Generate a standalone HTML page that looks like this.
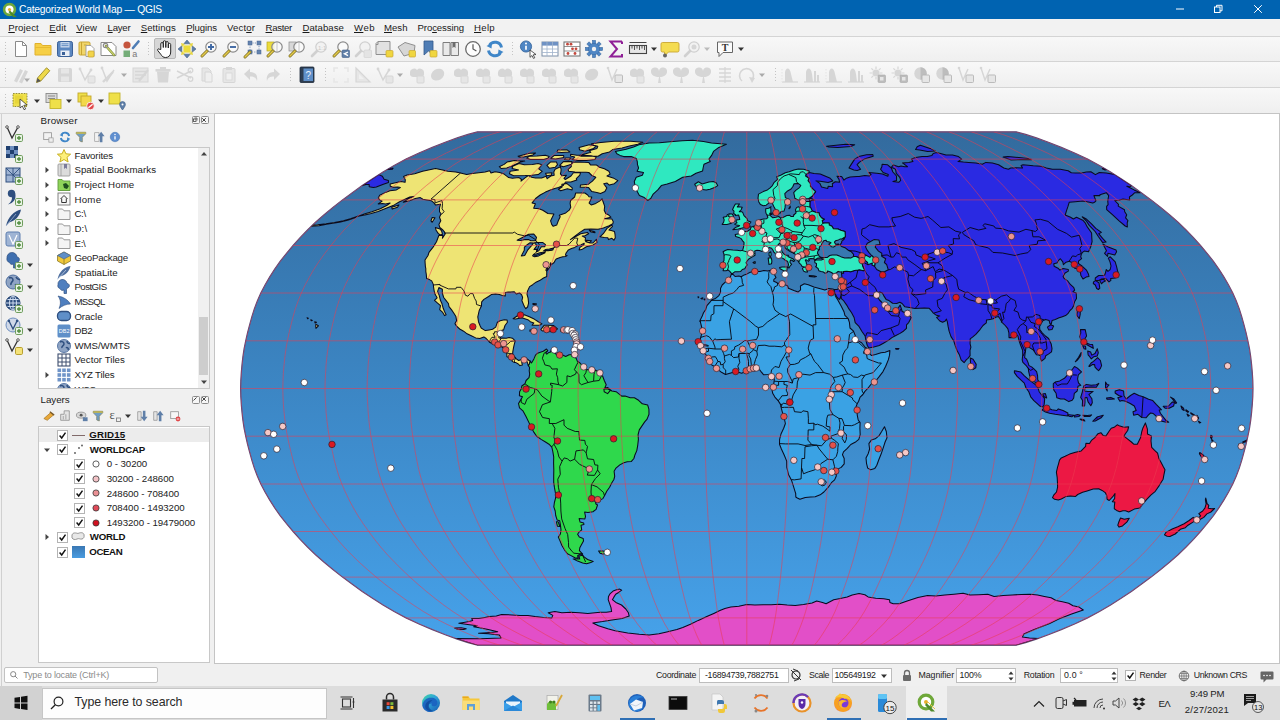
<!DOCTYPE html><html><head><meta charset="utf-8"><title>QGIS</title><style>html,body{margin:0;padding:0}body{width:1280px;height:720px;position:relative;overflow:hidden;background:#f0f0f0;font-family:"Liberation Sans",sans-serif}span,div,svg{position:absolute}svg{overflow:visible}</style></head><body><div style="position:absolute;left:0px;top:0px;width:1280px;height:19px;background:#0063b1;"></div><svg style="position:absolute;left:0.5px;top:0.5px" width="18" height="18" viewBox="-9.0 -9.0 18 18"><circle cx="-.5" cy="-.5" r="5.4" fill="#fff" stroke="#6fa83a" stroke-width="2.6"/><circle cx="-.5" cy="-.5" r="1.6" fill="#e8b02a"/><path d="M0,.5 L6.5,7 H3.2 L-1.5,2z" fill="#4f8a2a"/></svg><span style="left:19px;top:3.78px;font-size:10.3px;color:#fff;font-weight:normal;white-space:nowrap;line-height:12.3px;letter-spacing:-0.242px;">Categorized World Map — QGIS</span><svg style="position:absolute;left:1173.5px;top:2.8000000000000007px" width="12" height="12" viewBox="-6.0 -6.0 12 12"><path d="M-4,0h8" stroke="#fff" stroke-width="1"/></svg><svg style="position:absolute;left:1212.0px;top:2.8000000000000007px" width="12" height="12" viewBox="-6.0 -6.0 12 12"><rect x="-3.5" y="-2" width="5.5" height="5.5" fill="none" stroke="#fff" stroke-width="1"/><path d="M-1.5,-2v-1.7h5.5v5.5h-2" fill="none" stroke="#fff" stroke-width="1"/></svg><svg style="position:absolute;left:1251.5px;top:2.8000000000000007px" width="12" height="12" viewBox="-6.0 -6.0 12 12"><path d="M-3.8,-3.8L3.8,3.8M3.8,-3.8L-3.8,3.8" stroke="#fff" stroke-width="1"/></svg><div style="position:absolute;left:0px;top:19px;width:1280px;height:17px;background:#f2f2f2;"></div><span style="left:8.3px;top:21.87px;font-size:9.6px;color:#1a1a1a;font-weight:normal;white-space:nowrap;line-height:11.6px;letter-spacing:0.089px;"><u>P</u>roject</span><span style="left:49.2px;top:21.87px;font-size:9.6px;color:#1a1a1a;font-weight:normal;white-space:nowrap;line-height:11.6px;letter-spacing:0.114px;"><u>E</u>dit</span><span style="left:76.2px;top:21.87px;font-size:9.6px;color:#1a1a1a;font-weight:normal;white-space:nowrap;line-height:11.6px;letter-spacing:0.042px;"><u>V</u>iew</span><span style="left:107.5px;top:21.87px;font-size:9.6px;color:#1a1a1a;font-weight:normal;white-space:nowrap;line-height:11.6px;letter-spacing:-0.202px;"><u>L</u>ayer</span><span style="left:140.8px;top:21.87px;font-size:9.6px;color:#1a1a1a;font-weight:normal;white-space:nowrap;line-height:11.6px;letter-spacing:0.039px;"><u>S</u>ettings</span><span style="left:186.2px;top:21.87px;font-size:9.6px;color:#1a1a1a;font-weight:normal;white-space:nowrap;line-height:11.6px;letter-spacing:-0.098px;"><u>P</u>lugins</span><span style="left:227px;top:21.87px;font-size:9.6px;color:#1a1a1a;font-weight:normal;white-space:nowrap;line-height:11.6px;letter-spacing:0.131px;">Vect<u>o</u>r</span><span style="left:265.5px;top:21.87px;font-size:9.6px;color:#1a1a1a;font-weight:normal;white-space:nowrap;line-height:11.6px;letter-spacing:-0.296px;"><u>R</u>aster</span><span style="left:302.5px;top:21.87px;font-size:9.6px;color:#1a1a1a;font-weight:normal;white-space:nowrap;line-height:11.6px;letter-spacing:0.051px;"><u>D</u>atabase</span><span style="left:354px;top:21.87px;font-size:9.6px;color:#1a1a1a;font-weight:normal;white-space:nowrap;line-height:11.6px;letter-spacing:0.479px;"><u>W</u>eb</span><span style="left:384px;top:21.87px;font-size:9.6px;color:#1a1a1a;font-weight:normal;white-space:nowrap;line-height:11.6px;letter-spacing:0.007px;"><u>M</u>esh</span><span style="left:417.5px;top:21.87px;font-size:9.6px;color:#1a1a1a;font-weight:normal;white-space:nowrap;line-height:11.6px;letter-spacing:-0.099px;">Pro<u>c</u>essing</span><span style="left:474px;top:21.87px;font-size:9.6px;color:#1a1a1a;font-weight:normal;white-space:nowrap;line-height:11.6px;letter-spacing:0.314px;"><u>H</u>elp</span><div style="position:absolute;left:0px;top:36px;width:1280px;height:25.5px;background:linear-gradient(#f8f8f8,#efefef);"></div><div style="position:absolute;left:0px;top:61.5px;width:1280px;height:26px;background:linear-gradient(#f8f8f8,#efefef);"></div><div style="position:absolute;left:0px;top:87.5px;width:1280px;height:25.5px;background:linear-gradient(#f8f8f8,#efefef);"></div><div style="position:absolute;left:0px;top:36px;width:1280px;height:1px;background:#d4d4d4;"></div><div style="position:absolute;left:0px;top:61px;width:1280px;height:1px;background:#d4d4d4;"></div><div style="position:absolute;left:0px;top:87px;width:1280px;height:1px;background:#d4d4d4;"></div><div style="position:absolute;left:0px;top:113px;width:1280px;height:1px;background:#d4d4d4;"></div><div style="position:absolute;left:154px;top:38px;width:22px;height:21px;background:#d6d6d6;border:1px solid #b8b8b8;box-sizing:border-box;border-radius:2px;"></div><svg style="position:absolute;left:11.0px;top:38.5px" width="20" height="20" viewBox="-10.0 -10.0 20 20"><path d="M-5.5,-7.5 h7 l4,4 v11 h-11z" fill="#fff" stroke="#8a8a8a" stroke-width="1"/><path d="M1.5,-7.5 v4 h4" fill="none" stroke="#8a8a8a" stroke-width="1"/></svg><svg style="position:absolute;left:33.0px;top:38.5px" width="20" height="20" viewBox="-10.0 -10.0 20 20"><path d="M-8,-5.5 h6 l1.5,2 h8.5 v9.5 h-16z" fill="#f6cf45" stroke="#e0b02c" stroke-width="1"/><path d="M-8,-1.5 h16" stroke="#e8bb30" stroke-width="1"/></svg><svg style="position:absolute;left:55.0px;top:38.5px" width="20" height="20" viewBox="-10.0 -10.0 20 20"><rect x="-7.5" y="-7.5" width="15" height="15" rx="1.8" fill="#5b87c0" stroke="#3b6198" stroke-width="1"/><rect x="-4.5" y="-7" width="9" height="5.5" fill="#c9d8ec"/><path d="M-3.5,-5.2h7M-3.5,-3.4h7" stroke="#5b87c0" stroke-width=".9"/><rect x="-4.5" y="1.5" width="9" height="5.5" fill="#e9eef6"/><rect x="-3" y="3" width="3" height="3" fill="#3b6198"/></svg><svg style="position:absolute;left:77.0px;top:38.5px" width="20" height="20" viewBox="-10.0 -10.0 20 20"><rect x="-8" y="-7" width="11" height="13" rx="1.2" fill="#f0d56a" stroke="#c9a632" stroke-width="1"/><path d="M-5.5,-7v13M-3,-4h2.5" stroke="#c9a632" stroke-width="1"/><path d="M-1,-3.5 h5 l3,3 v8 h-8z" fill="#fff" stroke="#9a9a9a" stroke-width=".9"/><rect x="1" y="2" width="6" height="6" rx="1" fill="#f2d44a" stroke="#c9a632" stroke-width=".8"/></svg><svg style="position:absolute;left:99.0px;top:38.5px" width="20" height="20" viewBox="-10.0 -10.0 20 20"><path d="M-8,-6.5 h11 l4,4 v9 h-15z" fill="#fff" stroke="#8a8a8a" stroke-width="1"/><path d="M-3,-3 L5,6" stroke="#7a8a3a" stroke-width="2.6" stroke-linecap="round"/><path d="M-3,-3 L5,6" stroke="#c9cf6a" stroke-width="1.2" stroke-linecap="round"/><circle cx="-3.5" cy="-3.5" r="2.2" fill="none" stroke="#8a8a8a" stroke-width="1.2"/></svg><svg style="position:absolute;left:121.0px;top:38.5px" width="20" height="20" viewBox="-10.0 -10.0 20 20"><circle cx="-4" cy="-4" r="3.6" fill="#c5553e"/><path d="M2,-1 L7.5,-7.5" stroke="#4f7db5" stroke-width="2.6" stroke-linecap="round"/><rect x="-7.5" y="1.5" width="6.5" height="6.5" fill="#74ad78"/><text x="1.2" y="8" font-size="9" font-family="Liberation Sans" fill="#777">a</text></svg><svg style="position:absolute;left:155.0px;top:38.5px" width="20" height="20" viewBox="-10.0 -10.0 20 20"><path d="M-4.2,0.5 V-5.2 a1.25,1.25 0 0 1 2.5,0 V-1.5 V-7 a1.25,1.25 0 0 1 2.5,0 V-1.5 V-6.2 a1.25,1.25 0 0 1 2.5,0 V-1 V-4.4 a1.2,1.2 0 0 1 2.4,0 V3 c0,3.5 -2,5.5 -5,5.5 c-2.5,0 -3.6,-1 -5,-3.3 L-7.2,1.6 c-.8,-1.4 .9,-2.5 1.9,-1.2 z" fill="#fff" stroke="#222" stroke-width="1" stroke-linejoin="round"/></svg><svg style="position:absolute;left:177.0px;top:38.5px" width="20" height="20" viewBox="-10.0 -10.0 20 20"><rect x="-3.6" y="-3.6" width="7.2" height="7.2" fill="#ecdc3c" transform="rotate(0)"/><path d="M0,-9 l3.2,3.8 h-6.4z M0,9 l3.2,-3.8 h-6.4z M-9,0 l3.8,-3.2 v6.4z M9,0 l-3.8,-3.2 v6.4z" fill="#5f7fa8" stroke="#456088" stroke-width=".6"/><path d="M-6,-6 l4,1 l-3,3z M6,-6 l-4,1 l3,3z M-6,6 l4,-1 l-3,-3z M6,6 l-4,-1 l3,-3z" fill="#e7d640"/></svg><svg style="position:absolute;left:199.0px;top:38.5px" width="20" height="20" viewBox="-10.0 -10.0 20 20"><circle cx="2" cy="-2" r="5.2" fill="#fafafa" stroke="#8a8a8a" stroke-width="1.2"/><path d="M-2,2 L-7,7" stroke="#7a6a20" stroke-width="3" stroke-linecap="round"/><path d="M-2,2 L-7,7" stroke="#e2c94a" stroke-width="1.6" stroke-linecap="round"/><path d="M-1,-2 H5 M2,-5 V1" stroke="#3f68a3" stroke-width="1.9"/></svg><svg style="position:absolute;left:221.0px;top:38.5px" width="20" height="20" viewBox="-10.0 -10.0 20 20"><circle cx="2" cy="-2" r="5.2" fill="#fafafa" stroke="#8a8a8a" stroke-width="1.2"/><path d="M-2,2 L-7,7" stroke="#7a6a20" stroke-width="3" stroke-linecap="round"/><path d="M-2,2 L-7,7" stroke="#e2c94a" stroke-width="1.6" stroke-linecap="round"/><path d="M-1,-2 H5" stroke="#3f68a3" stroke-width="1.9"/></svg><svg style="position:absolute;left:243.0px;top:38.5px" width="20" height="20" viewBox="-10.0 -10.0 20 20"><g fill="#6484b0" stroke="#48658f" stroke-width=".5"><rect x="-5" y="-8" width="4" height="4"/><rect x="4" y="-8" width="4" height="4"/><rect x="4" y="1" width="4" height="4"/><rect x="-5" y="1" width="4" height="4"/></g><path d="M-3,-6H6V3H-3z" fill="none" stroke="#6484b0" stroke-width=".8" stroke-dasharray="1.2 1.2"/><path d="M-3,3 L-8,8" stroke="#7a6a20" stroke-width="3" stroke-linecap="round"/><path d="M-3,3 L-8,8" stroke="#e2c94a" stroke-width="1.6" stroke-linecap="round"/></svg><svg style="position:absolute;left:265.0px;top:38.5px" width="20" height="20" viewBox="-10.0 -10.0 20 20"><rect x="-8" y="-7" width="7" height="9" fill="#ecdc3c" stroke="#b8a820" stroke-width=".7"/><circle cx="2" cy="-2" r="5.2" fill="#fafafa" fill-opacity=".8" stroke="#8a8a8a" stroke-width="1.2"/><path d="M-2,2 L-7,7" stroke="#7a6a20" stroke-width="3" stroke-linecap="round"/><path d="M-2,2 L-7,7" stroke="#e2c94a" stroke-width="1.6" stroke-linecap="round"/><path d="M2,-6V2" stroke="#bbb" stroke-width=".8"/></svg><svg style="position:absolute;left:287.0px;top:38.5px" width="20" height="20" viewBox="-10.0 -10.0 20 20"><rect x="-8" y="-7" width="7" height="9" fill="#d8d8d8" stroke="#8a8a8a" stroke-width=".7"/><circle cx="2" cy="-2" r="5.2" fill="#fafafa" fill-opacity=".85" stroke="#8a8a8a" stroke-width="1.2"/><path d="M-2,2 L-7,7" stroke="#7a6a20" stroke-width="3" stroke-linecap="round"/><path d="M-2,2 L-7,7" stroke="#e2c94a" stroke-width="1.6" stroke-linecap="round"/><path d="M2,-6V2" stroke="#bbb" stroke-width=".8"/></svg><svg style="position:absolute;left:309.0px;top:38.5px" width="20" height="20" viewBox="-10.0 -10.0 20 20"><circle cx="2" cy="-2" r="5.2" fill="#f2f2f2" stroke="#cfcfcf" stroke-width="1.2"/><path d="M-2,2 L-7,7" stroke="#d0d0d0" stroke-width="2.6" stroke-linecap="round"/><text x="-1" y="1" font-size="6" font-family="Liberation Sans" fill="#c8c8c8">1:1</text></svg><svg style="position:absolute;left:331.0px;top:38.5px" width="20" height="20" viewBox="-10.0 -10.0 20 20"><circle cx="2" cy="-2" r="5.2" fill="#fafafa" stroke="#8a8a8a" stroke-width="1.2"/><path d="M-2,2 L-7,7" stroke="#7a6a20" stroke-width="3" stroke-linecap="round"/><path d="M-2,2 L-7,7" stroke="#e2c94a" stroke-width="1.6" stroke-linecap="round"/><rect x="1" y="1" width="7.5" height="7.5" rx="1" fill="#5f7fa8" stroke="#456088" stroke-width=".6"/><path d="M7,3 L3.5,4.8 L7,6.6" fill="none" stroke="#fff" stroke-width="1.4"/></svg><svg style="position:absolute;left:353.0px;top:38.5px" width="20" height="20" viewBox="-10.0 -10.0 20 20"><circle cx="2" cy="-2" r="5.2" fill="#f2f2f2" stroke="#cfcfcf" stroke-width="1.2"/><path d="M-2,2 L-7,7" stroke="#d0d0d0" stroke-width="2.6" stroke-linecap="round"/><rect x="1" y="1" width="7.5" height="7.5" rx="1" fill="#e4e4e4" stroke="#d0d0d0" stroke-width=".6"/></svg><svg style="position:absolute;left:375.0px;top:38.5px" width="20" height="20" viewBox="-10.0 -10.0 20 20"><path d="M-7,-7.5 h12 v13 h-14 v-11z" fill="#e2e2e2" stroke="#8f8f8f" stroke-width="1"/><path d="M-7,-7.5 v3 h-2" fill="none" stroke="#8f8f8f" stroke-width="1"/><rect x="1" y="1.5" width="7" height="6.5" rx="1" fill="#f0d640" stroke="#c9a632" stroke-width=".7"/></svg><svg style="position:absolute;left:397.0px;top:38.5px" width="20" height="20" viewBox="-10.0 -10.0 20 20"><path d="M-9,-2 L-2,-6.5 L8,-3.5 L7,4 L-3,7 Z" fill="#d6d6d6" stroke="#8f8f8f" stroke-width="1"/><rect x="2" y="1.5" width="6.5" height="6.5" rx="1" fill="#f0d640" stroke="#c9a632" stroke-width=".7"/></svg><svg style="position:absolute;left:419.0px;top:38.5px" width="20" height="20" viewBox="-10.0 -10.0 20 20"><path d="M-5,-8 h9 v14 l-4.5,-4 l-4.5,4z" fill="#4f7db5" stroke="#34598c" stroke-width=".8"/><rect x="1" y="1.5" width="7" height="6.5" rx="1" fill="#f0d640" stroke="#c9a632" stroke-width=".7"/></svg><svg style="position:absolute;left:441.0px;top:38.5px" width="20" height="20" viewBox="-10.0 -10.0 20 20"><path d="M-8,-6.5 h7 v13 h-7z M0,-6.5 h7.5 v13 h-7.5z" fill="#e9e9e9" stroke="#7d7d7d" stroke-width="1"/><path d="M1.5,-7 h3 v6 l-1.5,-1.3 l-1.5,1.3z" fill="#6b6b6b"/></svg><svg style="position:absolute;left:463.0px;top:38.5px" width="20" height="20" viewBox="-10.0 -10.0 20 20"><circle r="7.3" fill="#fdfdfd" stroke="#6a6a6a" stroke-width="1.3"/><path d="M0,-4.8 V0 L3.4,2" fill="none" stroke="#555" stroke-width="1.2"/></svg><svg style="position:absolute;left:485.0px;top:38.5px" width="20" height="20" viewBox="-10.0 -10.0 20 20"><path d="M6.5,-1.5 A6.6,6.6 0 0 0 -5.5,-3.8" fill="none" stroke="#3f86c8" stroke-width="3"/><path d="M-6.5,1.5 A6.6,6.6 0 0 0 5.5,3.8" fill="none" stroke="#3f86c8" stroke-width="3"/><path d="M-8.5,-3 l5.5,-3 l-.5,5.5z M8.5,3 l-5.5,3 l.5,-5.5z" fill="#3f86c8"/></svg><svg style="position:absolute;left:518.0px;top:38.5px" width="20" height="20" viewBox="-10.0 -10.0 20 20"><circle cx="-2" cy="-2.5" r="5.6" fill="#4f86c4" stroke="#2f5f98" stroke-width=".8"/><path d="M-2,-3.2 V0.8" stroke="#fff" stroke-width="1.7"/><circle cx="-2" cy="-5.4" r="1" fill="#fff"/><path d="M2,1 L8,5.5 L5.2,5.8 L6.8,8.8 L5.4,9.4 L4,6.5 L2,8.3z" fill="#fff" stroke="#333" stroke-width=".8"/></svg><svg style="position:absolute;left:540.0px;top:38.5px" width="20" height="20" viewBox="-10.0 -10.0 20 20"><rect x="-8" y="-7" width="16" height="14" fill="#fff" stroke="#7d8fa8" stroke-width="1"/><rect x="-8" y="-7" width="16" height="3.6" fill="#6f92c4"/><path d="M-8,0h16M-8,3.5h16M-3,-7v14M2.5,-7v14" stroke="#9fb2cc" stroke-width=".8"/></svg><svg style="position:absolute;left:562.0px;top:38.5px" width="20" height="20" viewBox="-10.0 -10.0 20 20"><rect x="-8" y="-7" width="16" height="14" fill="#fff" stroke="#777" stroke-width="1.1"/><path d="M-8,-2.5h16M-8,2h16" stroke="#777" stroke-width=".8"/><g fill="#c4483c"><circle cx="-4.5" cy="-4.8" r="1.4"/><circle cx="-1" cy="-4.8" r="1.4"/><circle cx="4" cy="-.2" r="1.4"/><circle cx="0.5" cy="-.2" r="1.4"/><circle cx="-4" cy="4.5" r="1.4"/><circle cx="3" cy="4.5" r="1.4"/></g></svg><svg style="position:absolute;left:584.0px;top:38.5px" width="20" height="20" viewBox="-10.0 -10.0 20 20"><g fill="#4f86c4" stroke="#2f5f98" stroke-width=".5"><rect x="-1.6" y="-8.6" width="3.2" height="17.2" transform="rotate(0)"/><rect x="-1.6" y="-8.6" width="3.2" height="17.2" transform="rotate(45)"/><rect x="-1.6" y="-8.6" width="3.2" height="17.2" transform="rotate(90)"/><rect x="-1.6" y="-8.6" width="3.2" height="17.2" transform="rotate(135)"/><circle r="5.6"/></g><circle r="5.3" fill="#4f86c4"/><circle r="2.2" fill="#f0f0f0"/></svg><svg style="position:absolute;left:606.0px;top:38.5px" width="20" height="20" viewBox="-10.0 -10.0 20 20"><path d="M6,-7.5 H-5.5 L1,0 L-5.5,7.5 H6 V5 M6,-7.5 V-5" fill="none" stroke="#8f1f96" stroke-width="2" stroke-linejoin="miter"/></svg><svg style="position:absolute;left:628.0px;top:38.5px" width="20" height="20" viewBox="-10.0 -10.0 20 20"><rect x="-8.5" y="-3.5" width="17" height="8" fill="#e6e6e6" stroke="#444" stroke-width="1.1"/><path d="M-6,-3.5v3M-3.5,-3.5v4.5M-1,-3.5v3M1.5,-3.5v4.5M4,-3.5v3M6.5,-3.5v4.5" stroke="#444" stroke-width=".9"/><path d="M-8.5,-6.5h17" stroke="#444" stroke-width="1"/></svg><svg style="position:absolute;left:660.0px;top:38.5px" width="20" height="20" viewBox="-10.0 -10.0 20 20"><path d="M-7.5,-6.5 h15 a1.5,1.5 0 0 1 1.5,1.5 v6.5 a1.5,1.5 0 0 1 -1.5,1.5 h-9 l-4,4 v-4 h-2 a1.5,1.5 0 0 1 -1.5,-1.5 v-6.5 a1.5,1.5 0 0 1 1.5,-1.5z" fill="#f4dc52" stroke="#c9a632" stroke-width=".9"/><circle cx="-5" cy="6.5" r="2" fill="#666"/></svg><svg style="position:absolute;left:682.0px;top:38.5px" width="20" height="20" viewBox="-10.0 -10.0 20 20"><circle cx="2" cy="-2" r="5.2" fill="#f2f2f2" stroke="#cfcfcf" stroke-width="1.2"/><path d="M-2,2 L-7,7" stroke="#d0d0d0" stroke-width="2.6" stroke-linecap="round"/><circle cx="2" cy="-2" r="2.5" fill="#d6d6d6"/></svg><svg style="position:absolute;left:715.0px;top:38.5px" width="20" height="20" viewBox="-10.0 -10.0 20 20"><path d="M-7.5,-7 h15 v10.5 h-9.5 l-4,4 v-4 h-1.5z" fill="#fbfbfb" stroke="#666" stroke-width="1"/><text x="-3.3" y="1.6" font-size="10" font-weight="bold" font-family="Liberation Serif" fill="#333">T</text></svg><svg style="position:absolute;left:648.5px;top:44.0px" width="10" height="10" viewBox="-5.0 -5.0 10 10"><path d="M-3,-1.5 L3,-1.5 L0,2 Z" fill="#333"/></svg><svg style="position:absolute;left:735.5px;top:44.0px" width="10" height="10" viewBox="-5.0 -5.0 10 10"><path d="M-3,-1.5 L3,-1.5 L0,2 Z" fill="#333"/></svg><svg style="position:absolute;left:702.0px;top:44.0px" width="10" height="10" viewBox="-5.0 -5.0 10 10"><path d="M-3,-1.5 L3,-1.5 L0,2 Z" fill="#bbb"/></svg><svg style="position:absolute;left:11.0px;top:64.5px" width="20" height="20" viewBox="-10.0 -10.0 20 20"><path d="M-7,6 L-1,-6 L2,-4.5 L-4,7.5z M-2,7 L4,-5 L7,-3.5 L1,8.5z" fill="#d6d6d6"/></svg><svg style="position:absolute;left:33.0px;top:64.5px" width="20" height="20" viewBox="-10.0 -10.0 20 20"><path d="M-6.5,7.5 L-5.5,3 L3.5,-7.2 L6.8,-4.3 L-2.2,6 Z" fill="#eed94a" stroke="#9a8a2a" stroke-width=".9"/><path d="M-6.5,7.5 L-5.5,3 L-2.2,6z" fill="#555"/></svg><svg style="position:absolute;left:55.0px;top:64.5px" width="20" height="20" viewBox="-10.0 -10.0 20 20"><rect x="-7" y="-7" width="14" height="14" rx="1.5" fill="#d6d6d6"/><rect x="-4" y="-6.5" width="8" height="5" fill="#e6e6e6"/><rect x="-4" y="1.5" width="8" height="5" fill="#e6e6e6"/></svg><svg style="position:absolute;left:77.0px;top:64.5px" width="20" height="20" viewBox="-10.0 -10.0 20 20"><path d="M-7,-6 L-2,5 L4,-5" fill="none" stroke="#d6d6d6" stroke-width="1.5"/><rect x="1" y="1" width="7" height="7" rx="1" fill="#e6e6e6" stroke="#d6d6d6" stroke-width="1"/><circle cx="-7" cy="-6" r="1.4" fill="#d6d6d6"/><circle cx="4" cy="-5" r="1.4" fill="#d6d6d6"/></svg><svg style="position:absolute;left:99.0px;top:64.5px" width="20" height="20" viewBox="-10.0 -10.0 20 20"><path d="M-7,-7 L-2,6 L5,-5" fill="none" stroke="#d6d6d6" stroke-width="1.5"/><path d="M-6,7 L4,-3" stroke="#d6d6d6" stroke-width="2.4"/><circle cx="-7" cy="-7" r="1.4" fill="#d6d6d6"/></svg><svg style="position:absolute;left:131.0px;top:64.5px" width="20" height="20" viewBox="-10.0 -10.0 20 20"><rect x="-8" y="-7" width="15" height="14" fill="#e6e6e6" stroke="#d6d6d6" stroke-width="1"/><path d="M-6,-3.5h11M-6,0h11M-6,3.5h7" stroke="#d6d6d6" stroke-width="1.3"/><path d="M-2,6 L7,-5" stroke="#d6d6d6" stroke-width="2.2"/></svg><svg style="position:absolute;left:153.0px;top:64.5px" width="20" height="20" viewBox="-10.0 -10.0 20 20"><path d="M-6,-3.5 h12 l-1,11 h-10z" fill="#d6d6d6"/><rect x="-7.5" y="-6" width="15" height="2.6" fill="#d6d6d6"/><rect x="-3" y="-8" width="6" height="2" fill="#d6d6d6"/></svg><svg style="position:absolute;left:175.0px;top:64.5px" width="20" height="20" viewBox="-10.0 -10.0 20 20"><path d="M-8,-4 L6,3 M-8,3 L6,-4" stroke="#d6d6d6" stroke-width="1.5"/><circle cx="5.5" cy="-4.5" r="2.3" fill="none" stroke="#d6d6d6" stroke-width="1.3"/><circle cx="5.5" cy="4" r="2.3" fill="none" stroke="#d6d6d6" stroke-width="1.3"/></svg><svg style="position:absolute;left:197.0px;top:64.5px" width="20" height="20" viewBox="-10.0 -10.0 20 20"><path d="M-5,-7 h6 l3,3 v10 h-9z" fill="#e6e6e6" stroke="#d6d6d6" stroke-width="1"/><path d="M-2,-3 h5 l2,2 v8 h-7z" fill="#efefef" stroke="#d6d6d6" stroke-width="1"/></svg><svg style="position:absolute;left:219.0px;top:64.5px" width="20" height="20" viewBox="-10.0 -10.0 20 20"><rect x="-6" y="-6.5" width="12" height="14" rx="1" fill="#e6e6e6" stroke="#d6d6d6" stroke-width="1"/><rect x="-3" y="-8" width="6" height="3" fill="#d6d6d6"/><rect x="-3" y="-2" width="6" height="7" fill="#f1f1f1" stroke="#d6d6d6" stroke-width=".8"/></svg><svg style="position:absolute;left:241.0px;top:64.5px" width="20" height="20" viewBox="-10.0 -10.0 20 20"><path d="M-7,-1 L-1,-6.5 V-3 C5,-3 7,1 6,6 C5,2.5 3,1.5 -1,1.5 V5z" fill="#d6d6d6"/></svg><svg style="position:absolute;left:263.0px;top:64.5px" width="20" height="20" viewBox="-10.0 -10.0 20 20"><path d="M7,-1 L1,-6.5 V-3 C-5,-3 -7,1 -6,6 C-5,2.5 -3,1.5 1,1.5 V5z" fill="#d6d6d6"/></svg><svg style="position:absolute;left:297.0px;top:64.5px" width="20" height="20" viewBox="-10.0 -10.0 20 20"><rect x="-7" y="-8" width="14" height="15.5" rx="1" fill="#2e3e52" stroke="#1d2a3a" stroke-width=".8"/><rect x="-3.5" y="-6.5" width="9.5" height="12.5" fill="#5f8fc8"/><text x="-1.6" y="3.6" font-size="10" font-family="Liberation Sans" fill="#e8f0fa">?</text></svg><svg style="position:absolute;left:331.0px;top:64.5px" width="20" height="20" viewBox="-10.0 -10.0 20 20"><path d="M-7,-3V-7H-3M3,-7H7V-3M7,3V7H3M-3,7H-7V3" fill="none" stroke="#e6e6e6" stroke-width="1.6"/></svg><svg style="position:absolute;left:353.0px;top:64.5px" width="20" height="20" viewBox="-10.0 -10.0 20 20"><path d="M-7,7 V-7 L7,7z" fill="#e6e6e6" stroke="#d6d6d6" stroke-width="1.2"/><path d="M-4,4V-1L1,4z" fill="#f0f0f0"/></svg><svg style="position:absolute;left:375.0px;top:64.5px" width="20" height="20" viewBox="-10.0 -10.0 20 20"><path d="M-7,-6 L-2,5 L4,-5" fill="none" stroke="#d6d6d6" stroke-width="1.5"/><rect x="1" y="1" width="7" height="7" rx="1" fill="#e6e6e6" stroke="#d6d6d6" stroke-width="1"/><circle cx="-7" cy="-6" r="1.4" fill="#d6d6d6"/><circle cx="4" cy="-5" r="1.4" fill="#d6d6d6"/></svg><svg style="position:absolute;left:407.0px;top:64.5px" width="20" height="20" viewBox="-10.0 -10.0 20 20"><path d="M-7,-2 a4,4 0 0 1 7,-3 a4,4 0 0 1 7,3 a3.5,3.5 0 0 1 -3,4 h-8 a3.5,3.5 0 0 1 -3,-4z" fill="#d6d6d6"/><rect x="0" y="1" width="7" height="7" rx="1" fill="#e6e6e6" stroke="#d6d6d6" stroke-width="1"/></svg><svg style="position:absolute;left:429.0px;top:64.5px" width="20" height="20" viewBox="-10.0 -10.0 20 20"><ellipse cx="-1" cy="-1" rx="7" ry="5.5" fill="#d6d6d6" transform="rotate(-30)"/></svg><svg style="position:absolute;left:451.0px;top:64.5px" width="20" height="20" viewBox="-10.0 -10.0 20 20"><path d="M-7,-2 a4,4 0 0 1 7,-3 a4,4 0 0 1 7,3 a3.5,3.5 0 0 1 -3,4 h-8 a3.5,3.5 0 0 1 -3,-4z" fill="#d6d6d6"/><rect x="0" y="1" width="7" height="7" rx="1" fill="#e6e6e6" stroke="#d6d6d6" stroke-width="1"/></svg><svg style="position:absolute;left:473.0px;top:64.5px" width="20" height="20" viewBox="-10.0 -10.0 20 20"><path d="M-7,-2 a4,4 0 0 1 7,-3 a4,4 0 0 1 7,3 a3.5,3.5 0 0 1 -3,4 h-8 a3.5,3.5 0 0 1 -3,-4z" fill="#d6d6d6"/><rect x="0" y="1" width="7" height="7" rx="1" fill="#e6e6e6" stroke="#d6d6d6" stroke-width="1"/></svg><svg style="position:absolute;left:495.0px;top:64.5px" width="20" height="20" viewBox="-10.0 -10.0 20 20"><path d="M-7,-2 a4,4 0 0 1 7,-3 a4,4 0 0 1 7,3 a3.5,3.5 0 0 1 -3,4 h-8 a3.5,3.5 0 0 1 -3,-4z" fill="#d6d6d6"/><rect x="0" y="1" width="7" height="7" rx="1" fill="#e6e6e6" stroke="#d6d6d6" stroke-width="1"/></svg><svg style="position:absolute;left:517.0px;top:64.5px" width="20" height="20" viewBox="-10.0 -10.0 20 20"><path d="M-7,-2 a4,4 0 0 1 7,-3 a4,4 0 0 1 7,3 a3.5,3.5 0 0 1 -3,4 h-8 a3.5,3.5 0 0 1 -3,-4z" fill="#d6d6d6"/><rect x="0" y="1" width="7" height="7" rx="1" fill="#e6e6e6" stroke="#d6d6d6" stroke-width="1"/></svg><svg style="position:absolute;left:539.0px;top:64.5px" width="20" height="20" viewBox="-10.0 -10.0 20 20"><path d="M-7,-2 a4,4 0 0 1 7,-3 a4,4 0 0 1 7,3 a3.5,3.5 0 0 1 -3,4 h-8 a3.5,3.5 0 0 1 -3,-4z" fill="#d6d6d6"/><rect x="0" y="1" width="7" height="7" rx="1" fill="#e6e6e6" stroke="#d6d6d6" stroke-width="1"/></svg><svg style="position:absolute;left:561.0px;top:64.5px" width="20" height="20" viewBox="-10.0 -10.0 20 20"><path d="M-7,-2 a4,4 0 0 1 7,-3 a4,4 0 0 1 7,3 a3.5,3.5 0 0 1 -3,4 h-8 a3.5,3.5 0 0 1 -3,-4z" fill="#d6d6d6"/><rect x="0" y="1" width="7" height="7" rx="1" fill="#e6e6e6" stroke="#d6d6d6" stroke-width="1"/></svg><svg style="position:absolute;left:583.0px;top:64.5px" width="20" height="20" viewBox="-10.0 -10.0 20 20"><ellipse cx="-1" cy="-1" rx="7" ry="5.5" fill="#d6d6d6" transform="rotate(-30)"/></svg><svg style="position:absolute;left:605.0px;top:64.5px" width="20" height="20" viewBox="-10.0 -10.0 20 20"><path d="M-7,-7 L-3,5 L2,-6" fill="none" stroke="#d6d6d6" stroke-width="1.4"/><circle cx="-7" cy="-7" r="1.3" fill="#d6d6d6"/><rect x="0" y="0" width="7.5" height="7.5" rx="1" fill="#e6e6e6" stroke="#bbb" stroke-width="1"/></svg><svg style="position:absolute;left:627.0px;top:64.5px" width="20" height="20" viewBox="-10.0 -10.0 20 20"><path d="M-7,-2 a4,4 0 0 1 7,-3 a4,4 0 0 1 7,3 a3.5,3.5 0 0 1 -3,4 h-8 a3.5,3.5 0 0 1 -3,-4z" fill="#d6d6d6"/><rect x="0" y="1" width="7" height="7" rx="1" fill="#e6e6e6" stroke="#d6d6d6" stroke-width="1"/></svg><svg style="position:absolute;left:649.0px;top:64.5px" width="20" height="20" viewBox="-10.0 -10.0 20 20"><path d="M-8,-3 a4,4 0 0 1 8,-1 a4,4 0 0 1 8,1 c0,3 -4,5 -7,5 l1,6 h-3 l1,-6 c-4,0 -8,-2 -8,-5z" fill="#d6d6d6"/></svg><svg style="position:absolute;left:671.0px;top:64.5px" width="20" height="20" viewBox="-10.0 -10.0 20 20"><path d="M-8,-3 a4,4 0 0 1 8,-1 a4,4 0 0 1 8,1 c0,3 -4,5 -7,5 l1,6 h-3 l1,-6 c-4,0 -8,-2 -8,-5z" fill="#d6d6d6"/></svg><svg style="position:absolute;left:693.0px;top:64.5px" width="20" height="20" viewBox="-10.0 -10.0 20 20"><path d="M-8,-3 a4,4 0 0 1 8,-1 a4,4 0 0 1 8,1 c0,3 -4,5 -7,5 l1,6 h-3 l1,-6 c-4,0 -8,-2 -8,-5z" fill="#d6d6d6"/></svg><svg style="position:absolute;left:715.0px;top:64.5px" width="20" height="20" viewBox="-10.0 -10.0 20 20"><path d="M-6,-6h12M-6,-2h12M-6,2h12M-6,6h12" stroke="#d6d6d6" stroke-width="1.4"/><path d="M0,-8v16" stroke="#d6d6d6" stroke-width="1.2"/></svg><svg style="position:absolute;left:737.0px;top:64.5px" width="20" height="20" viewBox="-10.0 -10.0 20 20"><path d="M-5,6 A7,7 0 1 1 5,5" fill="none" stroke="#d6d6d6" stroke-width="1.6"/><path d="M2,2 l6,1 l-3,5z" fill="#d6d6d6"/></svg><svg style="position:absolute;left:780.0px;top:64.5px" width="20" height="20" viewBox="-10.0 -10.0 20 20"><path d="M-5,7 V-3 C-4,-8 0,-8 1,-1 L3,7z" fill="#d6d6d6"/><path d="M-8,7h16" stroke="#d6d6d6" stroke-width="1.2"/><path d="M-8,-6v13" stroke="#e6e6e6" stroke-width="1.2" stroke-dasharray="1.5 1.5"/></svg><svg style="position:absolute;left:802.0px;top:64.5px" width="20" height="20" viewBox="-10.0 -10.0 20 20"><path d="M-6,7 V-3 C-5,-8 -1,-8 0,-1 L1,7z" fill="#d6d6d6"/><path d="M3,7V-4M6,7V0" stroke="#d6d6d6" stroke-width="2"/><path d="M-8,7h16" stroke="#d6d6d6" stroke-width="1.2"/></svg><svg style="position:absolute;left:824.0px;top:64.5px" width="20" height="20" viewBox="-10.0 -10.0 20 20"><path d="M-5,7 V-3 C-4,-8 0,-8 1,-1 L3,7z" fill="#d6d6d6"/><path d="M-8,7h16" stroke="#d6d6d6" stroke-width="1.2"/><path d="M-8,-6v13" stroke="#e6e6e6" stroke-width="1.2" stroke-dasharray="1.5 1.5"/></svg><svg style="position:absolute;left:846.0px;top:64.5px" width="20" height="20" viewBox="-10.0 -10.0 20 20"><path d="M-6,7 V-3 C-5,-8 -1,-8 0,-1 L1,7z" fill="#d6d6d6"/><path d="M3,7V-4M6,7V0" stroke="#d6d6d6" stroke-width="2"/><path d="M-8,7h16" stroke="#d6d6d6" stroke-width="1.2"/></svg><svg style="position:absolute;left:868.0px;top:64.5px" width="20" height="20" viewBox="-10.0 -10.0 20 20"><circle cx="-2" cy="-2" r="3.6" fill="#d6d6d6"/><path d="M-2,-8.5v2.5M-2,2v2.5M-8.5,-2h2.5M2,-2h2.5M-6.6,-6.6l1.8,1.8M2.6,-6.6l-1.8,1.8M-6.6,2.6l1.8,-1.8" stroke="#d6d6d6" stroke-width="1.2"/><rect x="0" y="0" width="7.5" height="7.5" rx="1" fill="#bcbcbc" stroke="#aaa" stroke-width=".6"/><rect x="2" y="2" width="3.5" height="3.5" fill="#e6e6e6"/></svg><svg style="position:absolute;left:890.0px;top:64.5px" width="20" height="20" viewBox="-10.0 -10.0 20 20"><circle cx="-2" cy="-2" r="3.6" fill="#d6d6d6"/><path d="M-2,-8.5v2.5M-2,2v2.5M-8.5,-2h2.5M2,-2h2.5M-6.6,-6.6l1.8,1.8M2.6,-6.6l-1.8,1.8M-6.6,2.6l1.8,-1.8" stroke="#d6d6d6" stroke-width="1.2"/><rect x="0" y="0" width="7.5" height="7.5" rx="1" fill="#bcbcbc" stroke="#aaa" stroke-width=".6"/><rect x="2" y="2" width="3.5" height="3.5" fill="#e6e6e6"/></svg><svg style="position:absolute;left:912.0px;top:64.5px" width="20" height="20" viewBox="-10.0 -10.0 20 20"><circle cx="-1.5" cy="-1.5" r="6.2" fill="#d6d6d6"/><path d="M-1.5,-7.7 a6.2,6.2 0 0 1 0,12.4" fill="#bdbdbd"/><rect x="0" y="0" width="7.5" height="7.5" rx="1" fill="#e6e6e6" stroke="#b5b5b5" stroke-width=".9"/></svg><svg style="position:absolute;left:934.0px;top:64.5px" width="20" height="20" viewBox="-10.0 -10.0 20 20"><circle cx="-1.5" cy="-1.5" r="6.2" fill="#d6d6d6"/><path d="M-1.5,-7.7 a6.2,6.2 0 0 1 0,12.4" fill="#bdbdbd"/><rect x="0" y="0" width="7.5" height="7.5" rx="1" fill="#e6e6e6" stroke="#b5b5b5" stroke-width=".9"/></svg><svg style="position:absolute;left:956.0px;top:64.5px" width="20" height="20" viewBox="-10.0 -10.0 20 20"><path d="M-7,-7 L-3,5 L2,-6" fill="none" stroke="#d6d6d6" stroke-width="1.4"/><circle cx="-7" cy="-7" r="1.3" fill="#d6d6d6"/><rect x="0" y="0" width="7.5" height="7.5" rx="1" fill="#e6e6e6" stroke="#bbb" stroke-width="1"/></svg><svg style="position:absolute;left:978.0px;top:64.5px" width="20" height="20" viewBox="-10.0 -10.0 20 20"><path d="M-7,-7 L-3,5 L2,-6" fill="none" stroke="#d6d6d6" stroke-width="1.4"/><circle cx="-7" cy="-7" r="1.3" fill="#d6d6d6"/><rect x="0" y="0" width="7.5" height="7.5" rx="1" fill="#e6e6e6" stroke="#bbb" stroke-width="1"/></svg><svg style="position:absolute;left:119.0px;top:70.0px" width="10" height="10" viewBox="-5.0 -5.0 10 10"><path d="M-3,-1.5 L3,-1.5 L0,2 Z" fill="#aaa"/></svg><svg style="position:absolute;left:395.0px;top:70.0px" width="10" height="10" viewBox="-5.0 -5.0 10 10"><path d="M-3,-1.5 L3,-1.5 L0,2 Z" fill="#aaa"/></svg><svg style="position:absolute;left:757.0px;top:70.0px" width="10" height="10" viewBox="-5.0 -5.0 10 10"><path d="M-3,-1.5 L3,-1.5 L0,2 Z" fill="#aaa"/></svg><svg style="position:absolute;left:21.5px;top:74.5px" width="10" height="10" viewBox="-5.0 -5.0 10 10"><path d="M-3,-1.5 L3,-1.5 L0,2 Z" fill="#aaa"/></svg><svg style="position:absolute;left:11.0px;top:90.5px" width="20" height="20" viewBox="-10.0 -10.0 20 20"><rect x="-8" y="-7.5" width="14" height="13" fill="#efe04a" stroke="#8a8430" stroke-width=".9" stroke-dasharray="1.6 1.1"/><rect x="-6" y="-5.5" width="8" height="8" fill="#e6d53a"/><path d="M-1,-2 L6,4 L2.8,4.3 L4.6,8 L3,8.7 L1.3,5 L-1,7z" fill="#fff" stroke="#333" stroke-width=".8"/></svg><svg style="position:absolute;left:44.0px;top:90.5px" width="20" height="20" viewBox="-10.0 -10.0 20 20"><rect x="-8" y="-7.5" width="11" height="9" fill="#d9d9d9" stroke="#8a8a8a" stroke-width=".9"/><path d="M-6,-5h7M-6,-2.5h7" stroke="#8a8a8a" stroke-width="1"/><rect x="-4" y="-1.5" width="11" height="9" fill="#efe04a" stroke="#c4b42a" stroke-width=".9"/></svg><svg style="position:absolute;left:76.0px;top:90.5px" width="20" height="20" viewBox="-10.0 -10.0 20 20"><rect x="-8" y="-8" width="9" height="9" fill="#efe04a" stroke="#c4a82a" stroke-width=".9"/><rect x="-5" y="-5" width="10" height="10" fill="#f3d84a" stroke="#c4a82a" stroke-width=".9"/><circle cx="4.5" cy="5" r="3.8" fill="#e0484a" stroke="#fff" stroke-width=".8"/><path d="M2.4,6.8 L6.6,3.2" stroke="#fff" stroke-width="1.2"/></svg><svg style="position:absolute;left:107.0px;top:90.5px" width="20" height="20" viewBox="-10.0 -10.0 20 20"><rect x="-8" y="-8" width="11" height="11" fill="#efe04a" stroke="#c4b42a" stroke-width=".9"/><path d="M5.5,9 C3,5.5 2.6,4.5 2.6,3.4 a2.9,2.9 0 0 1 5.8,0 C8.4,4.5 8,5.5 5.5,9z" fill="#5f7fa8" stroke="#3f5f88" stroke-width=".6"/><circle cx="5.5" cy="3.4" r="1" fill="#fff"/></svg><svg style="position:absolute;left:32.0px;top:96.0px" width="10" height="10" viewBox="-5.0 -5.0 10 10"><path d="M-3,-1.5 L3,-1.5 L0,2 Z" fill="#333"/></svg><svg style="position:absolute;left:64.0px;top:96.0px" width="10" height="10" viewBox="-5.0 -5.0 10 10"><path d="M-3,-1.5 L3,-1.5 L0,2 Z" fill="#333"/></svg><svg style="position:absolute;left:96.0px;top:96.0px" width="10" height="10" viewBox="-5.0 -5.0 10 10"><path d="M-3,-1.5 L3,-1.5 L0,2 Z" fill="#333"/></svg><div style="position:absolute;left:4px;top:40.5px;width:3px;height:16px;background-image:radial-gradient(circle,#c4c4c4 .7px,transparent .9px);background-size:3px 3px"></div><div style="position:absolute;left:4px;top:66.5px;width:3px;height:16px;background-image:radial-gradient(circle,#c4c4c4 .7px,transparent .9px);background-size:3px 3px"></div><div style="position:absolute;left:4px;top:92.5px;width:3px;height:16px;background-image:radial-gradient(circle,#c4c4c4 .7px,transparent .9px);background-size:3px 3px"></div><div style="position:absolute;left:147px;top:40.5px;width:3px;height:16px;background-image:radial-gradient(circle,#c4c4c4 .7px,transparent .9px);background-size:3px 3px"></div><div style="position:absolute;left:511px;top:40.5px;width:3px;height:16px;background-image:radial-gradient(circle,#c4c4c4 .7px,transparent .9px);background-size:3px 3px"></div><div style="position:absolute;left:289px;top:66.5px;width:3px;height:16px;background-image:radial-gradient(circle,#c4c4c4 .7px,transparent .9px);background-size:3px 3px"></div><div style="position:absolute;left:324px;top:66.5px;width:3px;height:16px;background-image:radial-gradient(circle,#c4c4c4 .7px,transparent .9px);background-size:3px 3px"></div><div style="position:absolute;left:774px;top:66.5px;width:3px;height:16px;background-image:radial-gradient(circle,#c4c4c4 .7px,transparent .9px);background-size:3px 3px"></div><div style="position:absolute;left:0px;top:114px;width:37px;height:550px;background:#f0f0f0;"></div><div style="position:absolute;left:1px;top:114px;width:1px;height:572px;background:#d0d0d0;"></div><svg style="position:absolute;left:4.0px;top:123.0px" width="20" height="20" viewBox="-10.0 -10.0 20 20"><path d="M-7,-6 L-2,5 L4,-6" fill="none" stroke="#333" stroke-width="1.3"/><circle cx="-7" cy="-6" r="1.3" fill="#fff" stroke="#333" stroke-width=".8"/><circle cx="4" cy="-6" r="1.3" fill="#fff" stroke="#333" stroke-width=".8"/><g transform="translate(5,5)"><rect x="-3.5" y="-3.5" width="7" height="7" rx="1.2" fill="#e9f3e4" stroke="#6f9d5e" stroke-width="1"/><path d="M-2,0H2M0,-2V2" stroke="#4d8a3c" stroke-width="1.3"/></g></svg><svg style="position:absolute;left:4.0px;top:144.0px" width="20" height="20" viewBox="-10.0 -10.0 20 20"><g fill="#1f3f6f"><rect x="-8" y="-8" width="4" height="4"/><rect x="0" y="-8" width="4" height="4"/><rect x="-4" y="-4" width="4" height="4"/><rect x="-8" y="0" width="4" height="4"/><rect x="0" y="0" width="4" height="4"/></g><g fill="#6f8fbf"><rect x="-4" y="-8" width="4" height="4"/><rect x="-8" y="-4" width="4" height="4"/><rect x="0" y="-4" width="4" height="4"/><rect x="-4" y="0" width="4" height="4"/></g><g transform="translate(5,5)"><rect x="-3.5" y="-3.5" width="7" height="7" rx="1.2" fill="#e9f3e4" stroke="#6f9d5e" stroke-width="1"/><path d="M-2,0H2M0,-2V2" stroke="#4d8a3c" stroke-width="1.3"/></g></svg><svg style="position:absolute;left:4.0px;top:166.0px" width="20" height="20" viewBox="-10.0 -10.0 20 20"><rect x="-8" y="-8" width="14" height="14" fill="#9fb4d4" stroke="#2f4f7f" stroke-width="1"/><path d="M-8,-1h14M-1,-8v14M-8,-8L6,6M6,-8L-1,-1" stroke="#2f4f7f" stroke-width=".9" fill="none"/><g transform="translate(5,5)"><rect x="-3.5" y="-3.5" width="7" height="7" rx="1.2" fill="#e9f3e4" stroke="#6f9d5e" stroke-width="1"/><path d="M-2,0H2M0,-2V2" stroke="#4d8a3c" stroke-width="1.3"/></g></svg><svg style="position:absolute;left:4.0px;top:187.0px" width="20" height="20" viewBox="-10.0 -10.0 20 20"><circle cx="-2.5" cy="-3.5" r="3.7" fill="#2f4f7f"/><path d="M1.2,-3.8 C2.6,2 -.5,6 -6,7.5 C-2.5,5 -1.5,2 -2.2,-.5z" fill="#2f4f7f"/><g transform="translate(5,5)"><rect x="-3.5" y="-3.5" width="7" height="7" rx="1.2" fill="#e9f3e4" stroke="#6f9d5e" stroke-width="1"/><path d="M-2,0H2M0,-2V2" stroke="#4d8a3c" stroke-width="1.3"/></g></svg><svg style="position:absolute;left:4.0px;top:208.0px" width="20" height="20" viewBox="-10.0 -10.0 20 20"><path d="M-8,8 C-6,-1 0,-7 7,-8.5 C6,-2 1,3 -5,4.5 z" fill="#2f4f7f"/><path d="M-8,8 L2,-4" stroke="#9fb4d4" stroke-width=".8"/><g transform="translate(5,5)"><rect x="-3.5" y="-3.5" width="7" height="7" rx="1.2" fill="#e9f3e4" stroke="#6f9d5e" stroke-width="1"/><path d="M-2,0H2M0,-2V2" stroke="#4d8a3c" stroke-width="1.3"/></g></svg><svg style="position:absolute;left:4.0px;top:230.0px" width="20" height="20" viewBox="-10.0 -10.0 20 20"><rect x="-8" y="-8" width="14" height="14" rx="2" fill="#9fb4d4" stroke="#5f7faf" stroke-width="1"/><path d="M-5,-5 L-1,4 L3,-5" fill="none" stroke="#fff" stroke-width="1.2"/><g transform="translate(5,5)"><rect x="-3.5" y="-3.5" width="7" height="7" rx="1.2" fill="#e9f3e4" stroke="#6f9d5e" stroke-width="1"/><path d="M-2,0H2M0,-2V2" stroke="#4d8a3c" stroke-width="1.3"/></g></svg><svg style="position:absolute;left:4.0px;top:251.0px" width="20" height="20" viewBox="-10.0 -10.0 20 20"><path d="M-7,-3 a5,5 0 0 1 10,-1 c2,0 3,2 2,4 c-1,2 -3,1 -3,3 v4 h-2.5 v-4 c-2,1 -3.5,0 -4,-1.5 c-2,-.5 -3,-2.5 -2.5,-4.5z" fill="#3f6faf" stroke="#2f4f7f" stroke-width=".7"/><g transform="translate(5,5)"><rect x="-3.5" y="-3.5" width="7" height="7" rx="1.2" fill="#e9f3e4" stroke="#6f9d5e" stroke-width="1"/><path d="M-2,0H2M0,-2V2" stroke="#4d8a3c" stroke-width="1.3"/></g></svg><svg style="position:absolute;left:24.5px;top:260.0px" width="10" height="10" viewBox="-5.0 -5.0 10 10"><path d="M-3,-1.5 L3,-1.5 L0,2 Z" fill="#333"/></svg><svg style="position:absolute;left:4.0px;top:273.0px" width="20" height="20" viewBox="-10.0 -10.0 20 20"><circle cx="-1" cy="-1" r="7" fill="#8fa4c4" stroke="#4f6f9f" stroke-width="1"/><path d="M-5,-5 c2,-1 4,0 4,2 c0,2 -3,2 -2,5 M2,-6 c1,2 3,3 4,2 M1,2 c1,-1 3,0 3,2" fill="none" stroke="#2f4f7f" stroke-width="1.6"/><g transform="translate(5,5)"><rect x="-3.5" y="-3.5" width="7" height="7" rx="1.2" fill="#e9f3e4" stroke="#6f9d5e" stroke-width="1"/><path d="M-2,0H2M0,-2V2" stroke="#4d8a3c" stroke-width="1.3"/></g></svg><svg style="position:absolute;left:24.5px;top:282.0px" width="10" height="10" viewBox="-5.0 -5.0 10 10"><path d="M-3,-1.5 L3,-1.5 L0,2 Z" fill="#333"/></svg><svg style="position:absolute;left:4.0px;top:294.0px" width="20" height="20" viewBox="-10.0 -10.0 20 20"><circle cx="-1" cy="-1" r="7" fill="#2f4f7f" stroke="#1f3f6f" stroke-width="1"/><path d="M-8,-1h14M-1,-8v14M-6.5,-4.5h11M-6.5,2.5h11" stroke="#cfdcf0" stroke-width="1"/><ellipse cx="-1" cy="-1" rx="3.5" ry="7" fill="none" stroke="#cfdcf0" stroke-width="1"/><g transform="translate(5,5)"><rect x="-3.5" y="-3.5" width="7" height="7" rx="1.2" fill="#e9f3e4" stroke="#6f9d5e" stroke-width="1"/><path d="M-2,0H2M0,-2V2" stroke="#4d8a3c" stroke-width="1.3"/></g></svg><svg style="position:absolute;left:4.0px;top:316.0px" width="20" height="20" viewBox="-10.0 -10.0 20 20"><circle cx="-1" cy="-1" r="7" fill="#cfd8e8" stroke="#6f8fbf" stroke-width="1"/><path d="M-5,-5 L-1,3 L3,-5" fill="none" stroke="#2f4f7f" stroke-width="1.3"/><circle cx="-5" cy="-5" r="1.2" fill="#2f4f7f"/><circle cx="3" cy="-5" r="1.2" fill="#2f4f7f"/><g transform="translate(5,5)"><rect x="-3.5" y="-3.5" width="7" height="7" rx="1.2" fill="#e9f3e4" stroke="#6f9d5e" stroke-width="1"/><path d="M-2,0H2M0,-2V2" stroke="#4d8a3c" stroke-width="1.3"/></g></svg><svg style="position:absolute;left:24.5px;top:325.0px" width="10" height="10" viewBox="-5.0 -5.0 10 10"><path d="M-3,-1.5 L3,-1.5 L0,2 Z" fill="#333"/></svg><svg style="position:absolute;left:4.0px;top:336.0px" width="20" height="20" viewBox="-10.0 -10.0 20 20"><path d="M-7,-6 L-2,5 L4,-6" fill="none" stroke="#333" stroke-width="1.3"/><circle cx="-7" cy="-6" r="1.3" fill="#fff" stroke="#333" stroke-width=".8"/><circle cx="4" cy="-6" r="1.3" fill="#fff" stroke="#333" stroke-width=".8"/><rect x="1.5" y="1.5" width="7" height="7" rx="1.2" fill="#f4e27a" stroke="#b8a030" stroke-width="1"/></svg><svg style="position:absolute;left:24.5px;top:345.0px" width="10" height="10" viewBox="-5.0 -5.0 10 10"><path d="M-3,-1.5 L3,-1.5 L0,2 Z" fill="#333"/></svg><span style="left:40.5px;top:115.10px;font-size:9.8px;color:#222;font-weight:normal;white-space:nowrap;line-height:11.8px;letter-spacing:0.180px;">Browser</span><div style="position:absolute;left:191.5px;top:116.3px;width:6px;height:6px;border:1px solid #8c8c8c;border-radius:1.5px;background:#f6f6f6"></div><div style="position:absolute;left:200.5px;top:116.3px;width:6px;height:6px;border:1px solid #8c8c8c;border-radius:1.5px;background:#f6f6f6"></div><svg style="position:absolute;left:200.0px;top:115.8px" width="8" height="8" viewBox="-4.0 -4.0 8 8"><path d="M-1.8,-1.8L1.8,1.8M1.8,-1.8L-1.8,1.8" stroke="#444" stroke-width="1"/></svg><svg style="position:absolute;left:191.0px;top:115.8px" width="8" height="8" viewBox="-4.0 -4.0 8 8"><rect x="-1.5" y="-1" width="2.5" height="2.5" fill="none" stroke="#444" stroke-width=".8"/><path d="M-.5,-2h2.5v2.5" fill="none" stroke="#444" stroke-width=".8"/></svg><svg style="position:absolute;left:40.0px;top:128.5px" width="16" height="16" viewBox="-8.0 -8.0 16 16"><g transform="scale(.86)"><rect x="-5" y="-5" width="9" height="8" fill="#f2f2f2" stroke="#999" stroke-width="1"/><rect x="1" y="1" width="5" height="5" fill="#eee" stroke="#999" stroke-width=".8"/></g></svg><svg style="position:absolute;left:57.0px;top:128.5px" width="16" height="16" viewBox="-8.0 -8.0 16 16"><g transform="scale(.64)"><path d="M6.5,-1.5 A6.6,6.6 0 0 0 -5.5,-3.8" fill="none" stroke="#3f86c8" stroke-width="3"/><path d="M-6.5,1.5 A6.6,6.6 0 0 0 5.5,3.8" fill="none" stroke="#3f86c8" stroke-width="3"/><path d="M-8.5,-3 l5.5,-3 l-.5,5.5z M8.5,3 l-5.5,3 l.5,-5.5z" fill="#3f86c8"/></g></svg><svg style="position:absolute;left:73.4px;top:128.5px" width="16" height="16" viewBox="-8.0 -8.0 16 16"><g transform="scale(.86)"><path d="M-5.5,-5.5 h11 v1.8 l-4,4 v5.5 l-3,-1.2 v-4.3 l-4,-4z" fill="#6f9fc8" stroke="#7a7a5a" stroke-width=".8"/><rect x="-5.5" y="-5.5" width="11" height="1.8" fill="#c8b84a"/></g></svg><svg style="position:absolute;left:90.6px;top:128.5px" width="16" height="16" viewBox="-8.0 -8.0 16 16"><g transform="scale(.86)"><rect x="-5" y="-5" width="5" height="10" fill="#f2f2f2" stroke="#999" stroke-width=".8"/><path d="M2.5,6 V-1 h-2.5 l4,-5 l4,5 h-2.5 v7z" fill="#5f7fa8" transform="translate(-1.5,0)"/></g></svg><svg style="position:absolute;left:106.9px;top:128.5px" width="16" height="16" viewBox="-8.0 -8.0 16 16"><g transform="scale(.86)"><circle r="5.5" fill="#5f8fd0" stroke="#3f6fb0" stroke-width=".6"/><path d="M0,-1 V3" stroke="#fff" stroke-width="1.5"/><circle cx="0" cy="-2.8" r=".9" fill="#fff"/></g></svg><div style="position:absolute;left:38px;top:147px;width:172px;height:242px;background:#fff;border:1px solid #c8c8c8;box-sizing:border-box;"></div><div style="position:absolute;left:198px;top:148px;width:11px;height:240px;background:#f0f0f0;"></div><div style="position:absolute;left:199px;top:317px;width:9px;height:58px;background:#cdcdcd;"></div><svg style="position:absolute;left:198.5px;top:148.5px" width="10" height="10" viewBox="-5.0 -5.0 10 10"><path d="M-3,1.5 L0,-2 L3,1.5z" fill="#444"/></svg><svg style="position:absolute;left:198.5px;top:376.7px" width="10" height="10" viewBox="-5.0 -5.0 10 10"><path d="M-3,-1.5 L0,2 L3,-1.5z" fill="#444"/></svg><div style="position:absolute;left:39px;top:148px;width:159px;height:240px;overflow:hidden"><svg style="position:absolute;left:17.5px;top:0.5999999999999943px" width="14" height="14" viewBox="-7.0 -7.0 14 14"><path d="M0,-6.5 L1.9,-2.2 L6.6,-1.8 L3,1.3 L4.1,6 L0,3.5 L-4.1,6 L-3,1.3 L-6.6,-1.8 L-1.9,-2.2z" fill="#fdf07a" stroke="#c8b020" stroke-width="1"/></svg><span style="left:35.400000000000006px;top:1.79px;font-size:9.7px;color:#222;font-weight:normal;white-space:nowrap;line-height:11.7px;letter-spacing:-0.154px;">Favorites</span><svg style="position:absolute;left:17.5px;top:15.219999999999999px" width="14" height="14" viewBox="-7.0 -7.0 14 14"><rect x="-6" y="-6" width="12" height="12" rx="1" fill="#dcdcdc" stroke="#9a9a9a" stroke-width=".9"/><path d="M-3,-6v12" stroke="#9a9a9a" stroke-width=".8"/><path d="M0,-6 h3 v5 l-1.5,-1.2 l-1.5,1.2z" fill="#7a7a9a"/></svg><span style="left:35.400000000000006px;top:16.41px;font-size:9.7px;color:#222;font-weight:normal;white-space:nowrap;line-height:11.7px;letter-spacing:0.055px;">Spatial Bookmarks</span><svg style="position:absolute;left:2.5px;top:17.22px" width="10" height="10" viewBox="-5.0 -5.0 10 10"><path d="M-1.5,-3 L2,0 L-1.5,3z" fill="#444"/></svg><svg style="position:absolute;left:17.5px;top:29.840000000000003px" width="14" height="14" viewBox="-7.0 -7.0 14 14"><path d="M-6,-5.5 h4 l1.5,1.5 h6.5 v9.5 h-12z" fill="#8fd45a" stroke="#5f9a3a" stroke-width=".9"/><path d="M-1,-1 l3,-1 l3,3 l-2,3 l-3,-1z" fill="#1f4f1f"/></svg><span style="left:35.400000000000006px;top:31.03px;font-size:9.7px;color:#222;font-weight:normal;white-space:nowrap;line-height:11.7px;letter-spacing:0.104px;">Project Home</span><svg style="position:absolute;left:2.5px;top:31.840000000000003px" width="10" height="10" viewBox="-5.0 -5.0 10 10"><path d="M-1.5,-3 L2,0 L-1.5,3z" fill="#444"/></svg><svg style="position:absolute;left:17.5px;top:44.45999999999998px" width="14" height="14" viewBox="-7.0 -7.0 14 14"><rect x="-6" y="-6" width="12" height="12" fill="#f8f8f8" stroke="#777" stroke-width=".9"/><path d="M-3.5,0 L0,-3.5 L3.5,0 M-2.3,-.5 V3.5 H2.3 V-.5" fill="none" stroke="#333" stroke-width="1"/></svg><span style="left:35.400000000000006px;top:45.65px;font-size:9.7px;color:#222;font-weight:normal;white-space:nowrap;line-height:11.7px;letter-spacing:0.282px;">Home</span><svg style="position:absolute;left:2.5px;top:46.45999999999998px" width="10" height="10" viewBox="-5.0 -5.0 10 10"><path d="M-1.5,-3 L2,0 L-1.5,3z" fill="#444"/></svg><svg style="position:absolute;left:17.5px;top:59.079999999999984px" width="14" height="14" viewBox="-7.0 -7.0 14 14"><path d="M-6,-5 h4.5 l1.5,1.8 h6 v8.7 h-12z" fill="#f4f4f4" stroke="#9a9a9a" stroke-width="1"/></svg><span style="left:35.400000000000006px;top:60.27px;font-size:9.7px;color:#222;font-weight:normal;white-space:nowrap;line-height:11.7px;letter-spacing:-0.265px;">C:\</span><svg style="position:absolute;left:2.5px;top:61.079999999999984px" width="10" height="10" viewBox="-5.0 -5.0 10 10"><path d="M-1.5,-3 L2,0 L-1.5,3z" fill="#444"/></svg><svg style="position:absolute;left:17.5px;top:73.69999999999999px" width="14" height="14" viewBox="-7.0 -7.0 14 14"><path d="M-6,-5 h4.5 l1.5,1.8 h6 v8.7 h-12z" fill="#f4f4f4" stroke="#9a9a9a" stroke-width="1"/></svg><span style="left:35.400000000000006px;top:74.89px;font-size:9.7px;color:#222;font-weight:normal;white-space:nowrap;line-height:11.7px;letter-spacing:0.202px;">D:\</span><svg style="position:absolute;left:2.5px;top:75.69999999999999px" width="10" height="10" viewBox="-5.0 -5.0 10 10"><path d="M-1.5,-3 L2,0 L-1.5,3z" fill="#444"/></svg><svg style="position:absolute;left:17.5px;top:88.32px" width="14" height="14" viewBox="-7.0 -7.0 14 14"><path d="M-6,-5 h4.5 l1.5,1.8 h6 v8.7 h-12z" fill="#f4f4f4" stroke="#9a9a9a" stroke-width="1"/></svg><span style="left:35.400000000000006px;top:89.51px;font-size:9.7px;color:#222;font-weight:normal;white-space:nowrap;line-height:11.7px;letter-spacing:-0.220px;">E:\</span><svg style="position:absolute;left:2.5px;top:90.32px" width="10" height="10" viewBox="-5.0 -5.0 10 10"><path d="M-1.5,-3 L2,0 L-1.5,3z" fill="#444"/></svg><svg style="position:absolute;left:17.5px;top:102.94px" width="14" height="14" viewBox="-7.0 -7.0 14 14"><path d="M-6.5,-2.5 L0,-6 L6.5,-2.5 V3 L0,6.5 L-6.5,3z" fill="#f0c83a" stroke="#8a7a2a" stroke-width=".8"/><path d="M-6.5,-2.5 L0,1 L6.5,-2.5 L0,-6z" fill="#5f8fc8" stroke="#3f5f8f" stroke-width=".6"/><path d="M0,1V6.5" stroke="#8a7a2a" stroke-width=".8"/></svg><span style="left:35.400000000000006px;top:104.13px;font-size:9.7px;color:#222;font-weight:normal;white-space:nowrap;line-height:11.7px;letter-spacing:-0.258px;">GeoPackage</span><svg style="position:absolute;left:17.5px;top:117.56px" width="14" height="14" viewBox="-7.0 -7.0 14 14"><path d="M-6.5,6.5 C-5,-1 0,-6 6.5,-7 C5.5,-1.5 1,2.5 -4,3.5z" fill="#4f6f9f"/><path d="M-6.5,6.5 L2,-3" stroke="#cfdcf0" stroke-width=".7"/></svg><span style="left:35.400000000000006px;top:118.75px;font-size:9.7px;color:#222;font-weight:normal;white-space:nowrap;line-height:11.7px;letter-spacing:0.016px;">SpatiaLite</span><svg style="position:absolute;left:17.5px;top:132.17999999999995px" width="14" height="14" viewBox="-7.0 -7.0 14 14"><path d="M-6,-2.5 a4.5,4.5 0 0 1 9,-1 c2,0 3,2 2,3.5 c-1,1.5 -2.5,1 -2.5,2.5 v4 h-2.5 v-3.5 c-2,1 -3.5,0 -4,-1.5 c-2,-.5 -2.5,-2 -2,-4z" fill="#4f7fbf" stroke="#2f4f7f" stroke-width=".7"/></svg><span style="left:35.400000000000006px;top:133.37px;font-size:9.7px;color:#222;font-weight:normal;white-space:nowrap;line-height:11.7px;letter-spacing:-0.546px;">PostGIS</span><svg style="position:absolute;left:17.5px;top:146.79999999999995px" width="14" height="14" viewBox="-7.0 -7.0 14 14"><path d="M-6,-6 C0,-5 4,-2 6.5,2 C2,2 -2,4 -5,6.5 C-3,2 -3,-2 -6,-6z" fill="#4f7fbf" stroke="#2f4f7f" stroke-width=".6"/></svg><span style="left:35.400000000000006px;top:147.99px;font-size:9.7px;color:#222;font-weight:normal;white-space:nowrap;line-height:11.7px;letter-spacing:-0.752px;">MSSQL</span><svg style="position:absolute;left:17.5px;top:161.41999999999996px" width="14" height="14" viewBox="-7.0 -7.0 14 14"><rect x="-6.5" y="-4.5" width="13" height="9" rx="4" fill="#5f8fc8" stroke="#2f4f7f" stroke-width="1.3"/></svg><span style="left:35.400000000000006px;top:162.61px;font-size:9.7px;color:#222;font-weight:normal;white-space:nowrap;line-height:11.7px;letter-spacing:-0.078px;">Oracle</span><svg style="position:absolute;left:17.5px;top:176.03999999999996px" width="14" height="14" viewBox="-7.0 -7.0 14 14"><rect x="-6.5" y="-6.5" width="13" height="13" rx="1.5" fill="#5f8fc8"/><text x="-5.2" y="2" font-size="5.5" font-family="Liberation Sans" fill="#fff">DB2</text></svg><span style="left:35.400000000000006px;top:177.23px;font-size:9.7px;color:#222;font-weight:normal;white-space:nowrap;line-height:11.7px;letter-spacing:-0.257px;">DB2</span><svg style="position:absolute;left:17.5px;top:190.65999999999997px" width="14" height="14" viewBox="-7.0 -7.0 14 14"><circle r="6.5" fill="#8fa4c4" stroke="#4f6f9f" stroke-width=".9"/><path d="M-4,-4 c2,-1 4,0 4,2 c0,2 -3,2 -2,4 M3,-5 c0,2 2,3 3,2 M2,2 c1,-1 3,0 2,2" fill="none" stroke="#2f4f7f" stroke-width="1.5"/></svg><span style="left:35.400000000000006px;top:191.85px;font-size:9.7px;color:#222;font-weight:normal;white-space:nowrap;line-height:11.7px;letter-spacing:-0.054px;">WMS/WMTS</span><svg style="position:absolute;left:17.5px;top:205.27999999999997px" width="14" height="14" viewBox="-7.0 -7.0 14 14"><rect x="-6" y="-6" width="12" height="12" fill="#fff" stroke="#3f4f6f" stroke-width="1.1"/><path d="M-2,-6v12M2,-6v12M-6,-2h12M-6,2h12" stroke="#3f4f6f" stroke-width="1"/></svg><span style="left:35.400000000000006px;top:206.47px;font-size:9.7px;color:#222;font-weight:normal;white-space:nowrap;line-height:11.7px;letter-spacing:0.039px;">Vector Tiles</span><svg style="position:absolute;left:17.5px;top:219.89999999999998px" width="14" height="14" viewBox="-7.0 -7.0 14 14"><g fill="#6f94c8"><rect x="-6.5" y="-6.5" width="3.6" height="3.6"/><rect x="-1.8" y="-6.5" width="3.6" height="3.6"/><rect x="2.9" y="-6.5" width="3.6" height="3.6"/><rect x="-6.5" y="-1.8" width="3.6" height="3.6"/><rect x="-1.8" y="-1.8" width="3.6" height="3.6"/><rect x="2.9" y="-1.8" width="3.6" height="3.6"/><rect x="-6.5" y="2.9" width="3.6" height="3.6"/><rect x="-1.8" y="2.9" width="3.6" height="3.6"/><rect x="2.9" y="2.9" width="3.6" height="3.6"/></g></svg><span style="left:35.400000000000006px;top:221.09px;font-size:9.7px;color:#222;font-weight:normal;white-space:nowrap;line-height:11.7px;letter-spacing:-0.167px;">XYZ Tiles</span><svg style="position:absolute;left:2.5px;top:221.89999999999998px" width="10" height="10" viewBox="-5.0 -5.0 10 10"><path d="M-1.5,-3 L2,0 L-1.5,3z" fill="#444"/></svg><svg style="position:absolute;left:17.5px;top:234.51999999999998px" width="14" height="14" viewBox="-7.0 -7.0 14 14"><circle r="6.5" fill="#8fa4c4" stroke="#4f6f9f" stroke-width=".9"/><path d="M-4,-4 c2,-1 4,0 4,2 c0,2 -3,2 -2,4 M3,-5 c0,2 2,3 3,2 M2,2 c1,-1 3,0 2,2" fill="none" stroke="#2f4f7f" stroke-width="1.5"/></svg><span style="left:35.400000000000006px;top:235.71px;font-size:9.7px;color:#222;font-weight:normal;white-space:nowrap;line-height:11.7px;letter-spacing:-0.544px;">WCS</span></div><span style="left:40.5px;top:394.20px;font-size:9.8px;color:#222;font-weight:normal;white-space:nowrap;line-height:11.8px;letter-spacing:-0.035px;">Layers</span><div style="position:absolute;left:191.5px;top:395.8px;width:6px;height:6px;border:1px solid #8c8c8c;border-radius:1.5px;background:#f6f6f6"></div><div style="position:absolute;left:200.5px;top:395.8px;width:6px;height:6px;border:1px solid #8c8c8c;border-radius:1.5px;background:#f6f6f6"></div><svg style="position:absolute;left:200.0px;top:395.3px" width="8" height="8" viewBox="-4.0 -4.0 8 8"><path d="M-1.8,-1.8L1.8,1.8M1.8,-1.8L-1.8,1.8" stroke="#444" stroke-width="1"/></svg><svg style="position:absolute;left:191.0px;top:395.3px" width="8" height="8" viewBox="-4.0 -4.0 8 8"><path d="M-1.5,1.5L1.5,-1.5" stroke="#444" stroke-width="1"/></svg><svg style="position:absolute;left:40.5px;top:407.5px" width="16" height="16" viewBox="-8.0 -8.0 16 16"><g transform="scale(.86)"><path d="M-6,3 L2,-4 L5,-1 L-2,5z" fill="#e8a83a" stroke="#9a6a1a" stroke-width=".7"/><path d="M1,-5 L6,-1" stroke="#7a5a2a" stroke-width="1.6"/></g></svg><svg style="position:absolute;left:56.8px;top:407.5px" width="16" height="16" viewBox="-8.0 -8.0 16 16"><g transform="scale(.86)"><path d="M-5,-2 h4 v-4 h6 v11 h-10z" fill="#e4e4e4" stroke="#8a8a8a" stroke-width=".9"/><path d="M-2,0v4M1,-2v6" stroke="#8a8a8a" stroke-width=".8"/></g></svg><svg style="position:absolute;left:73.8px;top:407.5px" width="16" height="16" viewBox="-8.0 -8.0 16 16"><g transform="scale(.86)"><ellipse cx="-1" cy="-1" rx="5.5" ry="3.5" fill="#d8d8d8" stroke="#8a8a8a" stroke-width=".9"/><circle cx="-1" cy="-1" r="1.7" fill="#555"/><rect x="1" y="1.5" width="5.5" height="4.5" fill="#5f7fa8"/></g></svg><svg style="position:absolute;left:90.2px;top:407.5px" width="16" height="16" viewBox="-8.0 -8.0 16 16"><g transform="scale(.86)"><path d="M-5.5,-5.5 h11 v1.8 l-4,4 v5.5 l-3,-1.2 v-4.3 l-4,-4z" fill="#6f9fc8" stroke="#7a7a5a" stroke-width=".8"/><rect x="-5.5" y="-5.5" width="11" height="1.8" fill="#c8b84a"/></g></svg><svg style="position:absolute;left:106.6px;top:407.5px" width="16" height="16" viewBox="-8.0 -8.0 16 16"><text x="-5.5" y="3" font-size="12.5" font-family="Liberation Serif" fill="#555">ε</text><rect x="1.5" y="2" width="4" height="3.5" fill="none" stroke="#777" stroke-width=".8"/></svg><svg style="position:absolute;left:122.5px;top:411.0px" width="10" height="10" viewBox="-5.0 -5.0 10 10"><path d="M-3,-1.5 L3,-1.5 L0,2 Z" fill="#333"/></svg><svg style="position:absolute;left:133.8px;top:407.5px" width="16" height="16" viewBox="-8.0 -8.0 16 16"><g transform="scale(.86)"><path d="M-5,-5h4v10h-4z" fill="#e4e4e4" stroke="#8a8a8a" stroke-width=".8"/><path d="M3,-6 v7 h2.5 l-4,5 l-4,-5 h2.5 v-7z" fill="#5f7fa8" transform="translate(1,0)"/></g></svg><svg style="position:absolute;left:150.4px;top:407.5px" width="16" height="16" viewBox="-8.0 -8.0 16 16"><g transform="scale(.86)"><path d="M-5,-5h4v10h-4z" fill="#e4e4e4" stroke="#8a8a8a" stroke-width=".8"/><path d="M3,6 v-7 h2.5 l-4,-5 l-4,5 h2.5 v7z" fill="#5f7fa8" transform="translate(1,0)"/></g></svg><svg style="position:absolute;left:166.6px;top:407.5px" width="16" height="16" viewBox="-8.0 -8.0 16 16"><g transform="scale(.86)"><rect x="-5" y="-5" width="9" height="8" fill="#f6f6f6" stroke="#999" stroke-width="1"/><circle cx="3.5" cy="3.5" r="2.8" fill="#e0484a"/><path d="M2,3.5h3" stroke="#fff" stroke-width="1"/></g></svg><div style="position:absolute;left:38px;top:426px;width:172px;height:237px;background:#fff;border:1px solid #c8c8c8;box-sizing:border-box;"></div><div style="position:absolute;left:39px;top:428px;width:170px;height:14px;background:#ececec;"></div><svg style="position:absolute;left:57.0px;top:429.5px" width="11" height="11" viewBox="0 0 11 11"><rect x=".5" y=".5" width="10" height="10" fill="#fff" stroke="#b4b4b4" stroke-width="1"/><path d="M2.6,5.6 L4.7,8 L8.5,2.6" fill="none" stroke="#111" stroke-width="1.45"/></svg><div style="position:absolute;left:72.3px;top:434.5px;width:12.4px;height:1px;background:#806a6a;"></div><span style="left:89.3px;top:429.09px;font-size:9.7px;color:#111;font-weight:bold;white-space:nowrap;line-height:11.7px;letter-spacing:0.160px;text-decoration:underline;">GRID15</span><svg style="position:absolute;left:41.5px;top:444.5px" width="10" height="10" viewBox="-5.0 -5.0 10 10"><path d="M-3,-1.5 L3,-1.5 L0,2z" fill="#444"/></svg><svg style="position:absolute;left:57.0px;top:444.0px" width="11" height="11" viewBox="0 0 11 11"><rect x=".5" y=".5" width="10" height="10" fill="#fff" stroke="#b4b4b4" stroke-width="1"/><path d="M2.6,5.6 L4.7,8 L8.5,2.6" fill="none" stroke="#111" stroke-width="1.45"/></svg><svg style="position:absolute;left:71.0px;top:442.5px" width="14" height="14" viewBox="-7.0 -7.0 14 14"><circle cx="-3" cy="3" r=".9" fill="#555"/><circle cx="1" cy="-2" r=".9" fill="#555"/><circle cx="4" cy="-4.5" r=".9" fill="#555"/></svg><span style="left:89.7px;top:443.69px;font-size:9.7px;color:#111;font-weight:bold;white-space:nowrap;line-height:11.7px;letter-spacing:-0.202px;">WORLDCAP</span><svg style="position:absolute;left:74.0px;top:458.7px" width="11" height="11" viewBox="0 0 11 11"><rect x=".5" y=".5" width="10" height="10" fill="#fff" stroke="#b4b4b4" stroke-width="1"/><path d="M2.6,5.6 L4.7,8 L8.5,2.6" fill="none" stroke="#111" stroke-width="1.45"/></svg><svg style="position:absolute;left:90.5px;top:459.2px" width="10" height="10" viewBox="-5.0 -5.0 10 10"><circle r="3.1" fill="#ffffff" stroke="#3a3a3a" stroke-width=".8"/></svg><span style="left:106.7px;top:458.39px;font-size:9.7px;color:#222;font-weight:normal;white-space:nowrap;line-height:11.7px;letter-spacing:-0.054px;">0 - 30200</span><svg style="position:absolute;left:74.0px;top:473.33px" width="11" height="11" viewBox="0 0 11 11"><rect x=".5" y=".5" width="10" height="10" fill="#fff" stroke="#b4b4b4" stroke-width="1"/><path d="M2.6,5.6 L4.7,8 L8.5,2.6" fill="none" stroke="#111" stroke-width="1.45"/></svg><svg style="position:absolute;left:90.5px;top:473.83px" width="10" height="10" viewBox="-5.0 -5.0 10 10"><circle r="3.1" fill="#f2c2c6" stroke="#3a3a3a" stroke-width=".8"/></svg><span style="left:106.7px;top:473.02px;font-size:9.7px;color:#222;font-weight:normal;white-space:nowrap;line-height:11.7px;letter-spacing:-0.054px;">30200 - 248600</span><svg style="position:absolute;left:74.0px;top:487.96px" width="11" height="11" viewBox="0 0 11 11"><rect x=".5" y=".5" width="10" height="10" fill="#fff" stroke="#b4b4b4" stroke-width="1"/><path d="M2.6,5.6 L4.7,8 L8.5,2.6" fill="none" stroke="#111" stroke-width="1.45"/></svg><svg style="position:absolute;left:90.5px;top:488.46px" width="10" height="10" viewBox="-5.0 -5.0 10 10"><circle r="3.1" fill="#ea9094" stroke="#3a3a3a" stroke-width=".8"/></svg><span style="left:106.7px;top:487.65px;font-size:9.7px;color:#222;font-weight:normal;white-space:nowrap;line-height:11.7px;letter-spacing:-0.057px;">248600 - 708400</span><svg style="position:absolute;left:74.0px;top:502.59px" width="11" height="11" viewBox="0 0 11 11"><rect x=".5" y=".5" width="10" height="10" fill="#fff" stroke="#b4b4b4" stroke-width="1"/><path d="M2.6,5.6 L4.7,8 L8.5,2.6" fill="none" stroke="#111" stroke-width="1.45"/></svg><svg style="position:absolute;left:90.5px;top:503.09px" width="10" height="10" viewBox="-5.0 -5.0 10 10"><circle r="3.1" fill="#e04a58" stroke="#3a3a3a" stroke-width=".8"/></svg><span style="left:106.7px;top:502.28px;font-size:9.7px;color:#222;font-weight:normal;white-space:nowrap;line-height:11.7px;letter-spacing:-0.046px;">708400 - 1493200</span><svg style="position:absolute;left:74.0px;top:517.22px" width="11" height="11" viewBox="0 0 11 11"><rect x=".5" y=".5" width="10" height="10" fill="#fff" stroke="#b4b4b4" stroke-width="1"/><path d="M2.6,5.6 L4.7,8 L8.5,2.6" fill="none" stroke="#111" stroke-width="1.45"/></svg><svg style="position:absolute;left:90.5px;top:517.72px" width="10" height="10" viewBox="-5.0 -5.0 10 10"><circle r="3.1" fill="#d01020" stroke="#3a3a3a" stroke-width=".8"/></svg><span style="left:106.7px;top:516.91px;font-size:9.7px;color:#222;font-weight:normal;white-space:nowrap;line-height:11.7px;letter-spacing:-0.057px;">1493200 - 19479000</span><svg style="position:absolute;left:41.5px;top:532.2px" width="10" height="10" viewBox="-5.0 -5.0 10 10"><path d="M-1.5,-3 L2,0 L-1.5,3z" fill="#444"/></svg><svg style="position:absolute;left:57.0px;top:531.7px" width="11" height="11" viewBox="0 0 11 11"><rect x=".5" y=".5" width="10" height="10" fill="#fff" stroke="#b4b4b4" stroke-width="1"/><path d="M2.6,5.6 L4.7,8 L8.5,2.6" fill="none" stroke="#111" stroke-width="1.45"/></svg><svg style="position:absolute;left:71.0px;top:530.2px" width="14" height="14" viewBox="-7.0 -7.0 14 14"><path d="M-6,-2 c1,-3 4,-2 6,-1.5 c2,-1 5,-1.5 6,1 c.5,3 -.5,4 -2,4.5 c-2,.5 -3,-1 -5,0 c-2,1 -4,.5 -5,-1z" fill="#e8e8e8" stroke="#8a8a8a" stroke-width=".9"/></svg><span style="left:89.7px;top:531.39px;font-size:9.7px;color:#111;font-weight:bold;white-space:nowrap;line-height:11.7px;letter-spacing:-0.167px;">WORLD</span><svg style="position:absolute;left:57.0px;top:546.5px" width="11" height="11" viewBox="0 0 11 11"><rect x=".5" y=".5" width="10" height="10" fill="#fff" stroke="#b4b4b4" stroke-width="1"/><path d="M2.6,5.6 L4.7,8 L8.5,2.6" fill="none" stroke="#111" stroke-width="1.45"/></svg><div style="position:absolute;left:72.3px;top:546px;width:12.4px;height:12.4px;background:linear-gradient(#3a78b4,#4a9ce0);"></div><span style="left:89.3px;top:546.19px;font-size:9.7px;color:#111;font-weight:bold;white-space:nowrap;line-height:11.7px;letter-spacing:-0.406px;">OCEAN</span><div style="position:absolute;left:215px;top:114px;width:1064px;height:549px;background:#ffffff;"></div><div style="position:absolute;left:214px;top:113px;width:1066px;height:551px;background:transparent;border:1px solid #c4c4c4;box-sizing:border-box;"></div><svg width="1064" height="549" viewBox="215 114 1064 549" style="position:absolute;left:215px;top:114px">
<defs><linearGradient id="og" gradientUnits="userSpaceOnUse" x1="0" y1="132" x2="0" y2="645"><stop offset="0" stop-color="#336b9e"/><stop offset="0.5" stop-color="#3c86c4"/><stop offset="1" stop-color="#46a2ea"/></linearGradient>
<clipPath id="oc"><path d="M477.4 131.8L468.0 134.4L457.2 137.9L445.2 142.3L432.3 147.4L419.0 153.0L406.0 159.1L394.1 165.4L383.0 172.0L372.5 178.7L362.2 185.6L352.3 192.7L342.5 199.9L333.2 207.3L324.1 214.7L315.5 222.3L307.5 230.0L300.1 237.7L293.1 245.5L286.5 253.3L280.3 261.2L274.7 269.1L269.6 277.1L265.0 285.0L260.8 293.0L257.3 301.0L254.3 308.9L251.8 316.9L249.6 324.8L247.5 332.8L245.7 340.8L244.1 348.7L242.9 356.7L242.0 364.6L241.3 372.6L240.8 380.5L240.6 388.5L240.8 396.5L241.3 404.4L242.0 412.4L242.9 420.3L244.1 428.3L245.7 436.2L247.5 444.2L249.6 452.2L251.8 460.1L254.3 468.1L257.3 476.0L260.8 484.0L265.0 492.0L269.6 499.9L274.7 507.9L280.3 515.8L286.5 523.7L293.1 531.5L300.1 539.3L307.5 547.0L315.5 554.7L324.1 562.3L333.2 569.7L342.5 577.1L352.3 584.3L362.2 591.4L372.5 598.3L383.0 605.0L394.1 611.6L406.0 617.9L419.0 624.0L432.3 629.6L445.2 634.7L457.2 639.1L468.0 642.6L477.4 645.2L1016.2 645.2L1025.6 642.6L1036.4 639.1L1048.4 634.7L1061.3 629.6L1074.6 624.0L1087.6 617.9L1099.5 611.6L1110.6 605.0L1121.1 598.3L1131.4 591.4L1141.3 584.3L1151.1 577.1L1160.4 569.7L1169.5 562.3L1178.1 554.7L1186.1 547.0L1193.5 539.3L1200.5 531.5L1207.1 523.7L1213.3 515.8L1218.9 507.9L1224.0 499.9L1228.6 492.0L1232.8 484.0L1236.3 476.0L1239.3 468.1L1241.8 460.1L1244.0 452.2L1246.1 444.2L1247.9 436.2L1249.5 428.3L1250.7 420.3L1251.6 412.4L1252.3 404.4L1252.8 396.5L1253.0 388.5L1252.8 380.5L1252.3 372.6L1251.6 364.6L1250.7 356.7L1249.5 348.7L1247.9 340.8L1246.1 332.8L1244.0 324.8L1241.8 316.9L1239.3 308.9L1236.3 301.0L1232.8 293.0L1228.6 285.0L1224.0 277.1L1218.9 269.1L1213.3 261.2L1207.1 253.3L1200.5 245.5L1193.5 237.7L1186.1 230.0L1178.1 222.3L1169.5 214.7L1160.4 207.3L1151.1 199.9L1141.3 192.7L1131.4 185.6L1121.1 178.7L1110.6 172.0L1099.5 165.4L1087.6 159.1L1074.6 153.0L1061.3 147.4L1048.4 142.3L1036.4 137.9L1025.6 134.4L1016.2 131.8Z"/></clipPath></defs>
<path d="M477.4 131.8L468.0 134.4L457.2 137.9L445.2 142.3L432.3 147.4L419.0 153.0L406.0 159.1L394.1 165.4L383.0 172.0L372.5 178.7L362.2 185.6L352.3 192.7L342.5 199.9L333.2 207.3L324.1 214.7L315.5 222.3L307.5 230.0L300.1 237.7L293.1 245.5L286.5 253.3L280.3 261.2L274.7 269.1L269.6 277.1L265.0 285.0L260.8 293.0L257.3 301.0L254.3 308.9L251.8 316.9L249.6 324.8L247.5 332.8L245.7 340.8L244.1 348.7L242.9 356.7L242.0 364.6L241.3 372.6L240.8 380.5L240.6 388.5L240.8 396.5L241.3 404.4L242.0 412.4L242.9 420.3L244.1 428.3L245.7 436.2L247.5 444.2L249.6 452.2L251.8 460.1L254.3 468.1L257.3 476.0L260.8 484.0L265.0 492.0L269.6 499.9L274.7 507.9L280.3 515.8L286.5 523.7L293.1 531.5L300.1 539.3L307.5 547.0L315.5 554.7L324.1 562.3L333.2 569.7L342.5 577.1L352.3 584.3L362.2 591.4L372.5 598.3L383.0 605.0L394.1 611.6L406.0 617.9L419.0 624.0L432.3 629.6L445.2 634.7L457.2 639.1L468.0 642.6L477.4 645.2L1016.2 645.2L1025.6 642.6L1036.4 639.1L1048.4 634.7L1061.3 629.6L1074.6 624.0L1087.6 617.9L1099.5 611.6L1110.6 605.0L1121.1 598.3L1131.4 591.4L1141.3 584.3L1151.1 577.1L1160.4 569.7L1169.5 562.3L1178.1 554.7L1186.1 547.0L1193.5 539.3L1200.5 531.5L1207.1 523.7L1213.3 515.8L1218.9 507.9L1224.0 499.9L1228.6 492.0L1232.8 484.0L1236.3 476.0L1239.3 468.1L1241.8 460.1L1244.0 452.2L1246.1 444.2L1247.9 436.2L1249.5 428.3L1250.7 420.3L1251.6 412.4L1252.3 404.4L1252.8 396.5L1253.0 388.5L1252.8 380.5L1252.3 372.6L1251.6 364.6L1250.7 356.7L1249.5 348.7L1247.9 340.8L1246.1 332.8L1244.0 324.8L1241.8 316.9L1239.3 308.9L1236.3 301.0L1232.8 293.0L1228.6 285.0L1224.0 277.1L1218.9 269.1L1213.3 261.2L1207.1 253.3L1200.5 245.5L1193.5 237.7L1186.1 230.0L1178.1 222.3L1169.5 214.7L1160.4 207.3L1151.1 199.9L1141.3 192.7L1131.4 185.6L1121.1 178.7L1110.6 172.0L1099.5 165.4L1087.6 159.1L1074.6 153.0L1061.3 147.4L1048.4 142.3L1036.4 137.9L1025.6 134.4L1016.2 131.8Z" fill="url(#og)" stroke="#5a4a78" stroke-width="1.2"/>
<g clip-path="url(#oc)">
<path d="M455.3 638.4L480.4 638.7L501.1 637.9L499.2 634.9L488.3 633.8L478.5 633.2L490.4 632.4L497.7 631.8L488.2 629.6L482.1 628.3L473.6 626.8L477.2 625.8L469.5 624.7L458.8 623.3L463.6 622.5L469.2 621.6L472.7 620.4L471.6 618.6L478.8 618.4L484.8 617.4L489.4 616.6L496.3 616.1L501.6 614.4L511.9 614.9L520.2 615.4L527.9 615.4L535.1 616.6L543.6 617.4L551.8 617.9L552.8 615.4L548.2 612.8L554.8 611.6L561.9 612.8L571.1 612.3L579.4 612.8L587.8 613.6L595.0 612.8L600.4 612.3L606.3 612.3L611.6 611.6L611.0 607.7L609.6 603.7L608.2 599.7L608.5 596.4L610.2 593.6L613.1 591.1L615.8 590.0L619.7 589.1L621.7 590.2L619.0 592.2L615.7 594.2L614.0 596.9L612.4 599.7L615.9 602.4L621.5 605.0L625.8 609.0L628.4 612.8L629.2 616.1L622.2 618.4L612.1 619.9L602.5 621.6L592.8 623.0L598.5 625.8L607.8 628.8L615.1 630.7L627.7 633.0L639.2 634.3L649.1 635.1L658.9 633.8L667.8 631.8L676.9 629.6L682.8 627.4L690.4 624.2L698.3 620.4L706.8 616.6L713.8 613.4L719.3 610.8L724.9 608.5L730.8 607.1L738.8 606.3L746.8 604.5L754.9 605.0L763.0 604.8L771.1 604.8L779.2 604.2L787.2 605.0L795.2 605.6L803.5 604.5L812.1 602.9L816.7 601.0L822.5 602.4L826.1 603.7L833.7 599.7L840.3 598.6L847.2 596.9L852.2 595.0L859.1 593.6L864.9 594.7L868.1 596.9L875.7 598.3L883.7 598.8L889.5 599.7L889.9 602.4L893.2 603.7L899.3 603.7L907.2 601.0L917.9 597.5L927.6 595.5L935.6 596.1L944.9 595.0L954.0 594.2L963.1 593.3L970.1 595.0L978.8 594.7L987.8 594.2L994.1 596.4L1003.3 595.5L1012.3 595.0L1021.3 594.4L1030.1 594.2L1037.6 595.0L1044.4 596.4L1051.1 597.7L1056.0 600.5L1062.4 601.8L1068.7 603.2L1073.0 605.8L1079.1 607.1L1083.3 610.0L1071.6 614.1L1058.7 619.1L1049.7 623.5L1034.2 629.6L1023.8 634.1L1022.4 637.1L1029.5 638.1L1038.3 638.4L1016.2 645.2L477.4 645.2ZM454.6 627.9L461.2 627.7L466.2 628.8L463.7 629.6L457.5 629.2Z" fill="#e24fc8" stroke="#0a0a1e" stroke-width="1.05" stroke-linejoin="round" />
<path d="M809.2 172.5L814.0 173.6L820.2 174.1L829.7 177.9L832.8 180.9L828.1 182.6L820.3 181.2L816.0 180.9L819.9 183.4L821.5 187.0L827.8 188.4L828.2 186.2L832.6 186.8L832.3 183.7L835.2 181.7L839.6 182.3L839.0 179.5L837.0 176.3L841.6 176.5L844.0 180.1L846.4 178.2L850.1 177.1L857.1 176.5L859.1 176.5L864.8 175.5L869.2 176.0L871.1 174.6L868.7 172.5L876.9 173.3L882.5 174.1L887.8 176.3L888.3 174.6L883.1 172.5L880.6 169.3L881.9 166.7L882.1 164.2L887.3 164.7L891.3 168.0L892.9 172.0L896.5 176.0L896.6 180.6L892.9 181.5L898.7 182.3L900.7 180.4L899.8 177.3L896.2 173.3L895.6 169.3L891.5 167.2L893.4 164.9L898.6 166.7L901.0 166.0L904.6 166.7L907.5 166.7L902.5 162.9L908.8 162.4L912.9 161.6L911.5 159.1L915.7 157.6L922.1 156.6L927.4 156.4L931.9 155.4L933.2 153.5L936.5 152.6L940.5 153.5L946.0 154.9L952.5 154.9L958.5 156.6L961.7 159.1L958.0 161.6L963.4 162.1L968.6 162.4L975.9 162.9L982.3 164.2L985.9 162.4L992.4 162.9L998.6 164.7L1003.8 168.0L1008.4 169.3L1010.7 168.0L1016.3 167.8L1022.6 168.0L1021.1 165.4L1023.0 164.7L1033.2 165.7L1040.9 166.2L1046.4 168.0L1052.3 169.3L1060.3 169.3L1068.2 170.7L1071.3 172.8L1075.7 173.0L1081.8 173.0L1086.3 172.0L1090.9 171.7L1095.4 174.6L1099.3 172.5L1106.2 173.0L1114.8 174.6L1131.4 185.6L1129.8 186.8L1126.8 186.2L1134.1 189.9L1140.2 192.7L1134.8 192.7L1132.3 195.0L1129.4 197.0L1129.7 199.9L1123.0 199.1L1118.8 200.2L1114.7 200.5L1118.5 204.3L1118.2 206.1L1124.5 209.7L1124.7 211.7L1126.7 214.7L1125.6 217.8L1127.9 220.5L1127.2 222.9L1127.3 226.9L1125.2 226.0L1119.1 220.8L1112.4 214.7L1106.7 209.7L1106.6 206.4L1108.1 204.6L1107.8 201.4L1108.1 198.8L1108.7 195.6L1106.3 192.7L1099.9 194.7L1099.9 195.6L1093.9 195.6L1095.9 200.8L1094.9 202.0L1092.8 203.1L1088.2 202.0L1082.7 201.1L1075.4 201.7L1069.2 202.3L1067.9 206.7L1066.7 210.2L1065.2 215.0L1070.6 217.2L1073.4 219.0L1076.5 217.2L1082.8 220.2L1085.4 223.2L1087.3 226.9L1091.6 233.0L1091.8 237.7L1092.1 241.7L1090.6 247.1L1088.5 251.8L1084.3 251.1L1082.5 252.4L1081.4 254.0L1080.7 256.8L1081.6 258.7L1078.5 261.2L1078.4 263.4L1081.6 265.7L1086.4 270.1L1088.4 273.9L1089.0 276.5L1086.1 277.1L1083.0 279.0L1080.9 275.5L1080.3 271.7L1077.7 268.8L1074.7 268.2L1073.0 265.7L1072.4 262.8L1069.2 261.2L1066.1 262.2L1063.4 264.7L1062.8 261.9L1060.4 258.7L1058.6 260.3L1056.9 263.1L1053.8 263.8L1054.2 266.3L1058.0 268.2L1059.9 270.1L1063.1 268.5L1068.3 269.5L1068.4 271.1L1065.1 273.0L1063.1 276.5L1064.1 278.4L1067.9 281.2L1070.6 284.7L1073.6 287.3L1074.7 290.1L1073.0 291.7L1076.2 293.0L1076.4 296.2L1076.5 298.4L1074.7 301.6L1073.6 305.7L1072.3 308.3L1070.0 310.5L1067.9 313.7L1065.6 315.6L1061.7 316.9L1059.1 317.8L1055.3 319.4L1052.1 320.4L1051.3 323.9L1049.9 323.6L1049.1 320.4L1045.6 319.4L1043.0 320.4L1041.3 323.2L1039.6 326.4L1039.8 329.6L1042.2 332.8L1045.4 336.0L1048.6 338.5L1051.2 343.9L1052.0 348.7L1051.5 351.9L1048.4 354.1L1045.7 355.7L1045.0 358.3L1041.6 361.1L1040.3 358.3L1040.6 355.7L1038.6 355.1L1036.4 354.8L1034.8 352.2L1033.1 349.7L1030.2 348.1L1028.3 345.8L1026.3 345.8L1025.8 348.7L1025.1 353.5L1024.6 357.6L1026.6 359.2L1027.9 362.1L1029.0 365.6L1031.6 366.9L1033.9 368.8L1036.6 371.6L1037.6 375.8L1037.7 379.6L1039.8 383.7L1037.8 384.4L1034.9 382.1L1031.8 379.6L1029.7 375.8L1028.7 371.6L1028.3 368.4L1025.9 365.3L1022.9 362.4L1022.2 359.9L1022.7 355.1L1022.6 350.3L1020.7 345.5L1019.1 340.8L1017.9 336.0L1015.7 333.8L1012.3 337.6L1009.0 337.6L1008.9 332.8L1007.8 328.7L1005.2 325.5L1002.0 322.3L999.8 318.5L998.4 316.6L995.7 317.2L993.2 318.8L990.0 319.4L986.5 320.1L986.3 322.9L983.0 325.5L980.2 329.3L975.8 334.4L972.8 336.9L970.2 338.8L970.1 343.9L970.9 347.1L970.0 350.3L970.1 355.7L968.0 358.3L966.2 359.9L964.1 362.7L961.1 359.9L959.5 355.1L956.9 350.3L955.2 345.5L953.7 340.8L951.0 336.6L949.1 331.2L948.1 326.4L947.3 321.7L946.4 319.1L945.3 321.0L942.6 322.3L939.8 321.0L936.6 317.5L939.7 315.9L936.4 315.3L933.4 313.1L931.2 310.5L929.2 308.3L924.5 308.0L919.1 308.3L915.0 308.6L909.5 307.6L904.7 306.7L902.1 303.5L899.8 302.2L896.7 303.5L892.6 303.2L889.0 300.6L886.1 299.4L883.7 295.6L882.3 293.0L879.8 292.1L878.2 292.4L876.5 293.6L877.4 296.8L879.4 300.0L882.4 302.9L883.8 305.4L885.7 308.0L886.8 305.7L888.0 308.9L887.4 311.2L890.7 311.5L894.8 311.8L898.0 308.3L900.2 305.1L901.4 308.9L902.2 311.5L905.9 313.1L909.8 316.2L911.3 317.5L908.7 322.6L906.5 324.8L906.5 328.3L903.4 331.2L900.0 333.4L895.4 335.7L891.9 337.6L888.7 340.1L883.4 343.3L879.3 345.5L873.8 347.1L868.8 348.1L867.3 345.5L866.0 340.8L865.1 336.0L861.8 331.2L858.7 326.1L855.2 322.6L854.1 317.5L851.6 312.7L848.9 308.9L846.7 305.1L843.3 300.3L841.3 298.7L841.2 294.6L839.7 299.4L838.3 298.7L836.8 296.8L834.8 293.3L834.0 289.5L836.9 289.5L839.0 288.5L840.0 285.7L840.5 282.8L841.5 279.6L841.9 276.5L841.5 273.6L843.6 273.1L843.4 271.4L846.8 271.2L850.8 271.7L854.5 270.4L857.9 270.1L859.7 269.8L863.3 270.7L864.5 270.1L862.8 266.6L862.0 263.1L863.1 262.2L860.0 260.9L858.9 257.8L856.1 256.5L853.5 256.5L853.6 254.3L851.4 251.8L848.6 250.5L845.0 247.7L841.5 246.4L839.9 244.9L841.6 242.7L841.8 241.1L843.5 239.9L844.5 238.6L841.8 238.9L845.4 236.8L845.0 231.5L840.8 230.3L838.1 229.0L833.4 228.7L832.0 226.3L829.3 225.1L829.1 222.9L824.8 222.9L822.9 223.2L822.2 220.5L824.3 219.3L821.4 217.8L819.4 215.0L819.2 212.9L815.6 212.3L812.3 211.1L810.8 207.9L809.9 207.0L809.9 203.4L810.0 201.4L812.0 200.2L814.7 200.2L812.9 199.3L810.4 198.2L808.9 198.5L812.2 196.2L815.6 191.6L812.2 188.4L810.4 186.2L810.4 183.7L808.0 180.6L809.0 178.2L805.6 176.0L806.0 174.4ZM378.8 174.6L382.4 176.3L384.1 179.3L388.4 180.6L388.5 182.6L383.4 184.2L376.3 187.0L373.4 187.6L369.2 186.8L369.2 184.5L366.0 184.5L362.2 185.6ZM793.5 216.5L793.8 215.0L796.2 213.8L800.1 215.0L800.4 216.7L796.4 216.7ZM849.0 168.0L850.6 165.4L852.7 162.1L854.7 159.1L858.7 156.6L866.5 154.7L872.8 154.5L873.2 156.2L864.2 159.1L859.5 162.1L857.1 164.7L860.6 169.3L857.2 170.4L853.9 169.9ZM915.6 149.6L917.2 146.7L920.3 145.2L930.0 148.4L935.2 150.9L927.7 151.4L919.7 150.0ZM1003.1 157.1L1007.9 156.6L1018.9 157.6L1028.1 158.6L1031.6 159.6L1020.2 159.6L1011.1 159.9ZM1102.3 168.8L1104.0 168.0L1106.6 169.6L1105.1 169.9ZM389.6 168.0L393.1 168.3L392.4 169.3L387.0 169.6ZM1082.2 216.8L1086.7 219.3L1091.5 223.8L1095.8 228.4L1101.4 232.4L1098.7 233.7L1102.6 238.3L1106.1 242.1L1102.5 242.4L1098.5 236.8L1095.1 231.5L1089.2 225.4L1086.2 220.8ZM1102.9 243.9L1108.3 247.1L1116.0 249.9L1116.6 251.8L1114.8 254.9L1107.9 253.3L1107.6 256.5L1104.6 253.3L1106.5 250.8ZM1110.3 256.8L1115.2 261.9L1116.6 266.6L1117.5 270.7L1118.8 274.5L1117.1 276.5L1115.2 278.0L1110.6 278.4L1110.9 280.3L1109.0 281.9L1105.5 278.4L1101.6 279.0L1098.3 280.6L1095.2 280.3L1095.3 278.0L1098.7 275.5L1104.6 275.2L1105.4 273.0L1106.3 269.5L1108.0 271.4L1110.2 269.5L1111.0 266.0L1110.0 261.9L1108.3 258.1ZM1093.5 281.9L1095.6 280.6L1099.0 282.8L1099.8 288.2L1098.4 289.5L1096.7 288.5L1095.3 285.0L1093.3 283.5ZM1099.5 280.3L1103.0 279.3L1105.6 280.9L1103.0 282.2L1101.5 283.8ZM1077.8 308.6L1080.4 308.9L1080.2 314.3L1079.3 318.6L1076.8 315.3ZM1047.4 327.1L1050.6 324.8L1053.6 326.1L1052.0 329.6L1048.7 329.9ZM970.3 357.9L973.1 359.2L976.2 364.3L975.8 367.8L973.0 369.6L971.0 366.9L970.5 362.4ZM1014.4 370.7L1020.6 371.9L1024.4 375.8L1028.7 379.6L1032.1 382.1L1037.3 386.0L1039.2 391.7L1042.0 395.5L1044.7 398.7L1044.2 404.4L1043.0 407.0L1040.2 406.3L1037.5 403.8L1033.9 400.6L1030.7 396.8L1028.8 391.7L1025.8 387.5L1024.3 383.1L1021.1 380.2L1017.1 376.4L1014.4 372.6ZM1042.2 410.1L1044.3 407.3L1048.5 408.2L1051.8 409.8L1056.8 410.5L1058.3 408.9L1063.0 410.5L1067.9 413.0L1067.7 415.9L1062.1 415.2L1055.2 414.3L1049.6 413.3L1045.5 412.1ZM1053.3 383.7L1055.2 382.1L1059.7 380.9L1064.4 378.3L1068.4 373.9L1071.1 371.0L1074.5 366.5L1077.4 368.1L1081.5 371.9L1078.3 374.8L1077.6 379.0L1078.5 382.8L1080.8 385.3L1078.0 386.3L1077.2 391.0L1074.3 393.3L1073.7 398.0L1072.2 400.3L1068.8 401.6L1064.3 399.0L1060.7 399.0L1056.8 397.7L1056.1 393.3L1053.9 390.1L1053.3 386.9ZM1083.7 386.0L1086.4 384.4L1091.2 385.3L1096.3 384.7L1098.8 383.4L1096.3 387.2L1091.3 386.9L1085.1 387.5L1084.5 391.0L1087.9 391.4L1093.2 391.4L1088.9 394.5L1091.9 398.7L1092.3 402.8L1090.8 405.7L1088.1 401.9L1086.9 397.4L1084.9 397.7L1085.0 402.2L1084.6 406.0L1082.3 406.0L1082.6 400.6L1080.7 397.4L1082.2 392.3ZM1115.2 391.0L1119.4 389.8L1123.6 391.0L1124.0 395.8L1126.2 399.0L1130.5 395.5L1134.2 393.3L1138.9 395.5L1143.1 396.8L1148.6 399.3L1152.8 400.6L1156.2 404.4L1159.4 407.6L1161.5 409.8L1159.2 410.1L1160.4 413.3L1162.9 416.5L1165.9 420.3L1168.7 422.2L1165.1 421.9L1161.0 421.0L1157.2 417.1L1153.3 413.6L1150.6 413.0L1148.5 414.9L1146.0 417.8L1141.8 417.5L1137.9 414.3L1133.6 415.2L1133.0 411.7L1136.2 410.5L1134.3 406.0L1130.2 403.5L1125.5 401.2L1121.9 400.6L1119.9 401.2L1117.8 397.7L1122.0 396.5L1118.7 395.5L1115.1 393.0ZM1163.2 406.3L1168.5 406.0L1172.4 401.9L1174.6 402.2L1173.6 406.0L1169.2 408.2L1165.0 408.2ZM1170.6 397.1L1173.9 399.0L1176.6 402.8L1175.7 403.5L1172.5 399.0ZM1180.9 406.0L1183.5 408.2L1184.2 410.5L1182.3 409.5ZM1080.5 329.6L1085.2 329.6L1086.6 336.0L1085.0 338.5L1085.9 343.0L1089.7 344.3L1092.6 344.6L1093.3 348.4L1090.0 346.5L1086.1 344.3L1083.0 344.3L1083.6 342.0L1081.5 341.4L1079.7 336.6L1080.8 332.8ZM1088.8 366.2L1091.1 363.0L1093.5 361.4L1097.6 357.6L1100.4 360.5L1101.6 365.6L1100.4 368.4L1098.6 370.7L1097.1 369.4L1095.0 367.2L1094.6 364.6L1092.3 364.6L1089.6 366.5ZM1087.7 350.9L1090.6 351.9L1091.8 355.1L1095.0 353.5L1097.3 348.7L1098.3 352.8L1097.2 356.0L1093.9 356.7L1091.3 358.9L1089.7 356.7L1088.1 354.8ZM1075.3 361.8L1078.6 357.3L1081.2 352.5L1080.7 355.7L1077.4 360.2ZM1082.7 345.8L1085.5 346.2L1085.9 349.3L1084.1 348.7ZM1105.5 382.1L1107.0 384.4L1109.0 385.0L1106.8 387.5L1107.3 391.0L1105.6 387.9ZM1106.5 398.0L1110.8 397.4L1114.4 399.0L1110.7 399.3L1107.0 399.3ZM1092.7 421.3L1097.0 417.1L1103.3 415.2L1101.1 417.8L1095.3 421.0ZM1082.9 415.2L1087.3 415.6L1091.6 414.9L1090.0 416.5L1084.4 416.5ZM1074.1 415.6L1077.6 414.6L1080.3 415.2L1078.8 416.5L1074.6 417.1ZM1080.0 419.1L1083.6 419.4L1084.9 421.0L1081.3 420.0ZM1067.8 414.6L1071.1 414.9L1073.9 415.2L1071.8 416.8L1069.0 416.2ZM1042.6 393.9L1045.4 393.6L1046.7 398.0L1044.2 396.8ZM895.6 348.4L899.0 348.4L898.2 349.3L896.0 349.3ZM826.5 146.3L836.1 145.2L845.6 144.2L854.7 144.8L850.9 146.5L837.7 147.4L828.8 147.1Z" fill="#2a2ae2" stroke="#0a0a1e" stroke-width="1.05" stroke-linejoin="round" />
<path d="M870.2 241.7L873.9 239.6L878.9 239.9L880.1 244.6L875.9 244.9L875.2 247.1L878.5 251.1L881.8 253.3L881.7 256.2L885.7 258.7L884.4 262.5L886.7 264.7L888.3 269.8L884.9 271.4L881.0 271.7L876.7 269.5L874.5 266.3L875.0 263.4L874.7 260.6L875.7 259.3L871.6 255.5L868.8 252.4L867.0 249.9L865.5 246.7L867.3 243.3Z" fill="url(#og)" stroke="#0a0a1e" stroke-width="1.05" stroke-linejoin="round" />
<path d="M809.2 172.5L809.1 170.9L803.7 169.3L798.3 169.1L793.9 170.1L789.2 171.7L785.3 172.8L780.6 175.2L776.7 176.8L777.6 179.3L774.2 182.3L772.4 185.6L770.1 187.9L767.4 189.9L763.2 191.6L758.5 194.1L758.0 198.2L758.8 202.0L760.5 204.6L763.3 205.8L766.2 205.2L769.0 202.9L770.7 201.4L772.2 203.1L773.8 206.4L776.0 210.5L777.0 213.2L780.0 213.2L781.2 211.4L784.0 211.1L785.0 207.9L785.3 204.6L788.2 202.0L788.9 199.3L785.4 197.6L784.8 193.6L787.1 191.3L791.1 189.0L792.9 186.5L794.1 183.7L798.1 183.4L800.8 185.4L799.5 187.6L795.7 190.4L793.7 192.7L794.5 196.2L794.8 198.2L798.0 199.9L801.8 199.9L806.1 198.8L808.9 198.5L810.0 201.4L805.5 201.4L802.1 201.7L800.0 202.6L800.5 204.3L802.7 204.9L802.6 207.3L801.7 208.8L799.5 207.6L798.4 206.7L796.5 207.6L795.4 210.0L796.1 212.9L793.8 215.0L793.5 216.5L790.9 216.5L789.8 215.3L786.8 215.6L783.4 217.2L780.7 218.1L778.7 216.5L775.9 217.2L772.8 217.8L770.9 216.2L769.6 215.0L770.9 212.9L770.9 210.5L770.7 207.3L771.1 206.7L768.7 208.2L765.7 208.8L765.7 211.7L766.0 213.2L767.0 215.0L767.9 217.5L766.7 218.7L763.9 219.0L762.3 219.3L759.2 219.9L758.0 221.1L756.9 223.5L755.3 225.7L752.9 226.6L750.9 227.2L750.5 229.3L747.5 231.2L744.1 231.8L743.1 230.9L742.6 233.7L742.4 234.3L739.4 233.7L735.2 234.6L735.7 236.5L738.9 237.4L741.1 238.6L742.6 240.8L744.0 242.4L744.0 244.2L743.5 247.1L742.7 250.2L740.4 250.8L737.1 250.2L732.8 249.9L727.8 249.4L725.2 250.5L723.1 251.8L724.0 254.3L724.1 257.4L724.0 260.6L722.4 263.4L722.0 265.3L723.6 266.0L723.8 267.9L723.1 270.7L726.0 270.7L728.4 270.1L730.0 271.7L731.8 273.9L732.8 273.3L735.0 271.7L737.9 271.7L740.7 271.4L742.3 269.5L744.7 268.8L746.3 266.0L747.3 265.0L746.0 262.8L747.6 260.3L749.1 258.7L751.9 257.1L755.0 255.2L755.0 253.3L754.7 251.1L757.0 250.2L759.5 250.5L762.1 251.5L764.6 250.2L766.6 249.3L769.1 247.4L771.6 248.3L773.0 250.2L773.8 252.1L775.5 253.7L778.1 255.5L780.3 257.1L782.9 258.4L784.3 259.3L785.6 260.6L787.5 261.2L788.5 264.4L787.9 267.6L789.0 267.9L790.1 266.0L791.6 264.4L789.9 262.2L790.5 260.0L792.1 260.3L793.5 261.5L794.7 260.9L793.3 259.0L790.6 257.8L787.9 256.5L788.4 255.2L786.1 255.2L783.9 254.0L782.5 252.4L781.4 249.9L779.0 248.6L777.9 246.7L778.0 244.9L779.2 243.6L781.2 243.3L781.0 244.9L781.9 246.1L782.8 244.6L784.4 245.5L785.3 248.0L787.5 249.9L790.1 251.5L793.3 253.0L795.8 254.6L796.9 256.5L797.0 259.6L798.7 261.9L799.6 263.4L801.0 264.7L802.2 266.6L805.7 267.2L803.6 267.2L802.4 268.5L803.6 271.1L805.5 272.0L806.8 272.0L807.6 272.0L806.6 269.5L807.9 269.1L808.8 267.9L809.8 268.5L809.8 266.9L807.8 265.3L806.4 263.8L806.2 261.9L805.3 260.3L806.0 259.6L807.4 260.6L808.5 261.2L809.4 260.3L808.5 259.0L810.8 258.4L813.9 258.7L814.6 260.3L816.0 259.3L817.7 258.1L820.5 258.1L821.7 257.4L819.3 256.5L818.6 254.9L817.4 253.3L817.9 251.1L819.4 249.3L819.3 247.1L821.4 245.2L821.7 243.9L822.7 242.4L823.7 240.8L826.1 240.2L826.8 241.4L829.4 242.1L831.0 242.7L828.8 244.2L831.4 246.7L833.5 247.1L835.8 245.5L838.7 244.9L838.5 243.9L835.6 244.2L834.4 242.1L835.5 240.8L838.5 239.9L840.4 238.9L841.8 238.9L845.4 236.8L845.0 231.5L840.8 230.3L838.1 229.0L833.4 228.7L832.0 226.3L829.3 225.1L829.1 222.9L824.8 222.9L822.9 223.2L822.2 220.5L824.3 219.3L821.4 217.8L819.4 215.0L819.2 212.9L815.6 212.3L812.3 211.1L810.8 207.9L809.9 207.0L809.9 203.4L810.0 201.4L808.9 198.5L812.2 196.2L815.6 191.6L812.2 188.4L810.4 186.2L810.4 183.7L808.0 180.6L809.0 178.2L805.6 176.0L806.0 174.4ZM732.9 229.7L738.3 229.0L743.2 227.8L748.0 227.5L750.2 226.3L748.5 225.4L750.9 222.0L747.5 220.8L747.3 219.0L746.3 217.8L744.0 215.6L742.8 212.6L741.7 211.7L739.3 211.7L741.0 210.0L742.2 207.3L738.8 206.7L737.2 207.0L739.5 204.0L735.4 204.0L733.7 207.0L732.5 209.7L734.0 211.1L733.7 213.5L735.5 214.7L735.3 215.6L738.6 215.0L739.5 217.8L739.7 219.6L736.3 219.9L736.0 221.4L737.0 222.9L734.5 224.1L736.4 225.1L739.6 225.4L738.8 226.3L735.9 227.2ZM722.2 224.4L727.0 224.4L731.4 223.2L732.3 219.9L733.6 216.2L732.3 214.1L729.5 213.8L727.3 214.7L726.7 216.5L723.2 217.2L724.2 219.9L723.6 222.3ZM768.2 258.1L771.3 257.8L771.9 261.2L771.5 263.8L768.9 264.4L768.6 261.2ZM769.0 253.0L770.8 251.8L771.2 254.9L770.5 256.8L769.1 255.5ZM779.5 267.6L782.1 266.9L787.3 266.9L786.8 270.7L784.4 271.1L780.1 268.8ZM809.2 275.5L813.5 275.8L816.5 276.5L814.4 277.1L809.3 276.5ZM832.4 277.1L835.5 276.1L838.0 275.2L836.9 277.1L834.4 278.4ZM753.0 262.5L755.1 261.5L755.4 263.1L754.1 263.4ZM772.9 212.6L775.9 211.7L776.1 213.8L774.5 215.0L773.1 214.1ZM769.7 213.2L771.8 213.2L771.9 214.4L770.3 214.4ZM788.8 208.5L790.3 206.1L790.3 207.6L789.0 208.8ZM807.3 264.7L810.0 266.3L810.9 267.6L808.9 266.0ZM814.7 260.9L814.9 262.8L816.5 263.4L816.5 266.0L815.5 266.6L818.1 268.5L818.8 270.7L821.0 271.4L823.4 272.0L825.1 273.3L827.2 272.6L827.5 271.1L830.5 272.0L833.4 273.8L836.4 273.0L838.1 271.4L840.3 272.0L842.1 271.7L841.5 273.6L843.6 273.1L843.4 271.4L846.8 271.2L850.8 271.7L854.5 270.4L857.9 270.1L859.7 269.8L863.3 270.7L864.5 270.1L862.8 266.6L862.0 263.1L863.1 262.2L860.0 260.9L858.9 257.8L856.1 256.5L853.5 256.5L850.7 258.1L848.6 257.8L844.8 258.1L841.5 257.1L839.3 255.9L836.8 254.9L832.2 254.9L829.7 255.5L827.4 257.4L824.1 257.4L822.0 257.4L821.6 258.4L823.7 258.9L821.3 260.0L817.9 260.0L816.1 260.0ZM862.6 257.1L866.1 255.2L869.9 257.4L871.6 255.5L875.0 259.3L874.7 260.6L875.0 263.4L874.5 266.3L871.9 265.0L872.4 263.1L868.0 264.7L867.6 262.5L865.4 260.6L864.1 259.3L862.6 257.1Z" fill="#2fe8c0" stroke="#0a0a1e" stroke-width="1.05" stroke-linejoin="round" />
<path d="M731.2 274.5L732.8 274.2L735.1 276.5L738.9 276.1L741.2 276.8L744.2 274.9L747.1 273.9L750.2 272.3L754.7 271.4L760.0 271.4L763.9 270.4L767.8 271.1L772.5 269.8L773.9 271.4L776.0 270.7L774.7 273.0L774.8 275.2L776.0 277.7L773.9 279.3L773.7 281.2L776.1 282.2L777.5 283.1L780.2 284.1L782.3 283.8L787.5 285.7L788.4 288.2L793.9 290.5L798.0 292.1L800.6 289.8L800.4 286.0L804.3 283.8L808.3 284.7L813.9 287.0L819.4 288.5L824.9 290.1L828.8 288.5L832.8 288.9L834.0 289.5L834.7 293.0L835.4 296.2L837.8 300.0L841.0 305.7L844.1 312.1L844.9 315.3L848.1 318.5L849.4 322.3L850.0 328.0L853.5 331.2L856.1 337.6L858.2 340.8L861.6 342.7L864.8 346.8L867.5 349.0L867.8 351.6L871.3 355.4L875.5 354.4L881.0 352.8L885.2 352.2L889.9 350.6L889.5 355.4L888.3 359.9L885.7 366.2L883.0 371.6L879.4 376.4L876.1 380.5L871.4 383.7L867.7 388.5L864.9 391.4L862.9 394.5L860.1 397.1L858.6 401.2L857.2 403.8L855.7 407.6L857.3 410.5L857.2 414.9L858.2 420.0L860.1 422.6L859.9 428.3L860.2 434.7L858.8 439.4L855.1 442.3L850.8 444.5L847.3 448.3L843.5 451.8L842.5 454.7L844.2 458.5L844.2 463.9L841.2 467.4L837.0 469.4L836.0 471.9L836.3 476.0L834.6 479.9L831.4 482.7L828.3 487.2L823.9 492.0L820.2 494.8L815.2 496.7L810.7 497.0L805.3 497.4L799.9 499.3L797.3 498.0L795.8 497.0L795.7 493.5L795.0 491.3L793.4 486.2L791.5 480.2L788.5 474.4L786.8 467.4L786.7 461.1L784.3 455.3L781.4 449.0L779.5 444.2L779.6 439.4L781.1 433.7L783.7 428.3L785.4 423.5L784.3 418.7L783.0 414.6L781.3 408.2L780.5 404.4L778.3 400.9L774.9 397.1L772.7 393.3L772.1 390.4L773.5 387.5L773.8 383.7L774.3 379.6L774.1 376.7L771.8 373.9L767.9 374.5L763.7 374.8L760.8 371.3L758.6 368.4L754.4 368.1L750.2 369.1L746.8 370.7L741.7 373.2L738.4 372.3L734.2 371.9L729.9 373.2L725.5 374.5L721.5 372.3L717.3 368.8L714.5 366.5L711.7 364.9L709.8 361.4L709.0 358.3L706.2 355.1L704.8 353.5L702.6 350.9L700.2 349.0L699.9 345.8L698.6 342.0L700.3 339.2L701.2 335.7L702.2 331.2L701.7 327.1L700.5 322.3L700.0 320.4L702.0 316.6L703.5 312.7L705.7 309.6L706.9 305.7L710.0 302.2L711.8 299.7L715.6 298.4L718.9 295.6L720.6 292.1L720.5 288.5L722.2 285.0L725.5 281.9L728.7 280.0L730.4 276.8ZM884.5 426.7L886.3 431.5L887.0 437.8L885.1 442.0L883.7 446.4L881.2 453.8L878.9 459.5L876.7 465.5L874.8 468.4L870.6 469.7L867.7 468.1L866.5 463.3L866.0 457.9L868.3 453.4L869.6 449.0L868.9 443.6L871.3 440.1L875.3 438.8L879.1 435.6L881.5 431.8ZM700.9 298.4L702.9 297.8L702.0 299.1ZM703.9 299.1L705.0 299.1L704.7 300.0ZM708.0 297.5L709.1 297.1L708.2 299.1ZM709.5 295.6L710.3 295.6L709.7 296.5ZM698.0 296.8L698.8 297.1L698.3 297.8Z" fill="#3aa2e4" stroke="#0a0a1e" stroke-width="1.05" stroke-linejoin="round" />
<path d="M390.1 184.0L400.9 181.5L405.1 182.3L405.3 179.8L403.6 176.5L407.0 174.9L414.7 173.8L422.6 171.2L435.5 168.5L442.6 169.9L447.8 171.2L455.8 172.0L460.5 173.0L466.7 174.6L472.1 173.6L476.8 173.0L485.1 172.0L489.7 170.7L491.0 173.0L495.1 171.7L499.7 172.5L504.1 174.1L508.7 177.6L512.3 178.2L519.1 177.6L521.5 179.5L521.0 181.2L525.0 177.9L528.3 175.5L531.7 177.3L535.4 177.9L541.6 177.9L546.1 176.3L547.2 178.7L550.8 176.0L554.2 175.2L553.8 172.0L555.1 169.3L560.4 166.7L561.1 169.3L560.9 172.0L560.4 173.8L561.9 175.7L566.5 175.2L564.0 178.4L565.3 179.5L571.0 176.0L573.6 172.5L580.5 172.8L579.8 175.2L576.3 178.7L576.8 180.1L570.9 182.0L565.6 182.0L563.1 185.6L558.5 187.6L554.7 188.4L550.4 189.9L545.5 192.1L540.2 195.0L535.6 198.5L532.1 202.9L535.4 203.7L533.7 208.2L539.1 208.8L542.8 210.2L547.9 213.5L553.9 214.1L550.6 220.8L551.7 224.4L553.2 226.3L556.7 225.1L558.3 220.8L560.2 216.8L559.3 215.3L565.7 212.9L569.2 210.2L570.8 207.3L570.1 203.4L570.6 200.5L574.6 197.0L575.7 193.0L580.0 193.0L584.9 193.0L587.7 195.0L589.0 196.7L591.8 197.0L590.4 200.5L589.1 203.1L591.2 204.9L595.8 203.4L599.6 201.1L602.0 198.8L603.2 202.0L604.7 206.4L604.2 210.2L605.7 213.5L608.3 214.7L610.9 217.2L604.4 218.7L611.9 219.0L613.3 221.7L612.8 223.8L609.1 225.7L603.4 228.1L598.1 229.3L590.9 229.0L584.7 229.3L579.9 232.4L574.9 236.1L570.4 239.6L574.4 237.4L580.7 233.7L587.3 232.4L588.6 233.7L584.9 235.8L582.3 236.1L585.5 237.7L585.2 240.2L585.9 241.7L590.0 243.0L593.0 243.0L596.4 239.3L597.0 242.4L593.2 244.9L586.4 246.7L581.7 249.6L579.1 249.9L579.9 247.4L583.9 244.9L584.2 243.3L580.7 244.9L577.9 245.5L574.8 247.4L571.4 248.6L568.4 249.9L566.1 253.0L565.4 255.2L567.1 255.5L565.5 256.5L562.8 256.8L560.1 257.4L556.2 259.0L555.4 260.0L554.1 262.5L551.4 264.7L550.6 262.8L550.5 266.0L547.4 270.4L547.6 266.0L545.9 270.1L546.8 271.4L546.7 274.9L546.8 276.5L543.5 278.0L539.6 280.6L536.0 282.2L532.7 284.7L529.6 286.6L527.5 291.1L527.0 294.3L528.1 298.1L528.6 303.2L527.6 307.0L525.8 308.6L524.6 307.0L523.6 304.8L521.9 300.6L522.6 297.5L521.6 294.6L519.5 293.0L516.3 294.0L514.1 291.7L510.8 292.1L508.1 292.1L505.3 292.4L505.3 295.9L502.4 295.6L499.4 294.6L495.5 294.0L491.3 294.6L488.6 296.5L483.9 299.4L481.7 301.9L481.4 306.1L479.2 310.5L477.8 316.9L478.5 321.7L480.1 325.8L481.2 328.0L483.7 329.6L485.3 330.6L489.2 329.9L492.6 329.3L495.7 327.1L497.4 322.3L500.1 320.7L504.4 319.7L507.1 320.1L507.4 322.3L505.0 325.5L503.6 329.9L502.2 330.2L502.1 333.4L500.6 336.9L499.9 338.2L502.7 337.9L506.2 338.2L509.1 337.6L512.4 338.2L515.2 340.8L514.2 344.6L513.4 348.4L512.8 351.9L512.7 353.8L514.5 356.7L516.3 358.9L518.7 360.5L521.3 359.5L523.6 358.3L526.1 358.3L528.8 360.2L530.2 361.1L529.5 363.7L528.3 365.6L527.3 362.4L525.5 359.9L523.5 360.8L521.7 362.4L522.4 364.9L519.9 365.6L518.3 364.0L515.5 362.4L514.1 362.4L512.2 361.4L512.1 359.2L509.4 357.6L506.9 356.7L506.8 353.5L504.6 350.0L502.3 347.1L499.8 346.5L496.3 345.2L493.1 344.3L489.7 342.3L486.2 338.5L483.9 336.9L479.8 338.5L475.7 337.9L471.8 336.0L467.1 333.8L463.6 331.2L459.7 329.0L456.6 326.1L455.0 323.6L456.6 320.7L455.9 316.6L454.2 313.7L451.6 309.9L449.0 306.7L448.4 303.5L446.1 300.6L443.7 297.5L442.3 293.0L442.4 289.2L438.9 287.6L437.6 291.4L439.3 295.6L440.3 300.0L442.0 303.8L443.2 308.3L444.5 311.5L446.1 314.7L444.5 315.6L442.4 312.1L439.7 309.6L440.5 305.7L437.6 303.2L434.5 300.3L437.1 297.8L435.1 294.3L434.2 291.1L433.6 287.3L433.3 284.4L431.7 280.9L429.5 279.6L426.6 278.4L426.3 274.5L425.8 271.4L425.8 268.5L425.4 266.6L425.1 262.8L425.0 260.0L428.0 255.5L429.0 252.4L433.1 247.1L436.5 241.7L438.9 235.2L442.9 235.5L442.4 238.3L445.3 233.7L444.6 232.1L442.9 230.0L439.8 227.5L438.9 224.4L440.8 220.8L439.5 217.2L441.1 213.8L439.5 211.7L439.5 207.9L440.5 204.3L435.4 204.9L434.0 202.9L431.5 200.8L426.8 199.9L422.9 199.3L420.3 197.6L415.3 198.5L410.4 200.5L403.3 202.3L408.6 198.5L413.8 196.4L409.8 197.0L405.0 199.3L399.1 202.0L394.3 204.9L386.2 208.2L378.1 211.4L371.2 213.5L364.9 215.0L358.2 216.2L365.0 213.8L371.9 211.7L380.3 208.8L387.1 205.2L390.1 203.1L385.5 204.0L382.3 203.4L378.2 204.0L382.1 201.1L379.6 199.9L378.3 197.9L379.7 195.3L385.5 192.4L389.9 190.7L396.4 189.9L400.3 187.6L397.8 187.0L393.1 187.3L390.3 186.2L390.1 184.0ZM358.5 215.9L350.4 218.7L343.4 220.8L334.4 222.6L325.9 223.8L317.7 224.7L312.5 225.1L311.3 226.3L319.1 225.7L328.0 224.1L339.5 222.3L347.7 220.2L355.0 217.8ZM435.4 227.5L439.9 229.0L441.6 230.9L442.5 234.3L440.6 235.2L438.2 233.4L436.1 230.3ZM391.8 207.3L398.9 204.9L397.5 207.3L392.2 209.1ZM432.2 217.5L435.0 217.8L432.2 222.3L431.0 220.8ZM599.9 236.8L603.3 233.7L607.0 228.4L611.7 225.1L612.5 226.3L608.9 230.0L611.2 230.6L614.5 231.5L615.0 234.3L615.3 237.7L613.9 240.2L611.9 238.3L608.5 239.6L607.8 237.7L604.2 237.4ZM586.4 240.2L591.5 240.8L589.5 242.4L586.7 241.7ZM589.3 230.3L594.8 231.8L595.0 232.7L591.1 232.1ZM573.5 162.1L580.2 162.1L588.7 162.4L590.5 164.9L596.3 164.9L599.5 167.2L604.4 168.8L608.9 171.2L610.1 174.1L607.0 176.0L613.1 177.9L617.9 180.6L614.3 183.7L609.3 185.1L607.1 183.1L603.7 183.7L606.8 187.9L604.9 191.6L600.6 193.6L596.8 192.4L591.8 191.6L588.6 187.6L585.6 187.3L580.2 187.3L580.5 185.1L588.5 184.2L592.4 181.2L595.8 177.3L591.9 175.5L588.8 172.5L586.0 172.2L580.9 172.2L575.0 172.0L568.6 171.2L568.1 169.3L571.3 166.7L571.1 164.7ZM561.9 184.2L566.7 183.4L568.8 185.1L572.3 187.9L572.1 189.9L567.4 188.7L560.7 190.7L558.4 189.3L562.1 187.0ZM519.0 163.4L524.3 164.7L532.4 164.4L538.1 163.6L541.9 164.7L538.7 168.8L542.2 171.4L538.2 174.6L531.6 175.2L525.2 175.5L513.7 175.7L509.4 173.8L510.2 171.2L518.6 169.9L512.1 168.5L512.7 166.2ZM499.3 166.7L501.1 168.5L506.7 168.0L512.0 166.0L520.5 162.1L524.7 161.1L519.2 160.9L514.2 160.4L507.0 162.1L504.1 164.4ZM550.4 162.1L556.4 161.9L557.5 164.7L555.4 167.2L549.5 168.3L546.9 165.4ZM563.4 161.6L572.0 161.6L571.6 164.2L563.4 166.7L559.7 165.4ZM545.6 173.3L552.1 172.8L551.3 174.9L546.5 175.7ZM529.3 156.2L537.0 155.9L545.4 155.2L549.1 156.6L548.2 158.1L543.9 159.4L538.2 159.4L530.3 159.6L526.6 158.1ZM554.3 155.4L563.6 155.4L563.9 157.6L555.6 159.1L550.8 158.4ZM565.5 157.9L571.1 157.9L569.0 159.9L564.5 159.6ZM570.6 154.2L576.8 155.2L584.2 155.2L591.1 155.7L596.2 157.1L594.9 159.6L586.6 160.4L578.0 160.4L572.1 159.6L574.7 157.1L570.5 155.9ZM518.1 156.2L529.7 153.3L535.5 153.0L532.8 154.9L523.6 156.9L518.9 156.9ZM557.8 150.0L567.1 149.8L569.8 151.9L561.6 152.6L557.1 151.9ZM579.1 147.4L589.3 144.8L596.3 146.1L593.5 148.4L585.0 151.2L579.5 149.8ZM579.3 155.4L590.9 152.3L589.1 150.7L597.0 148.4L597.8 146.3L593.9 145.2L591.4 143.8L600.8 142.5L614.1 141.2L630.6 141.2L642.9 142.3L637.8 144.2L629.4 145.9L622.1 148.0L612.7 149.6L609.5 151.9L602.2 153.7L598.1 156.2L589.0 155.9L581.3 156.2ZM513.1 318.8L518.2 315.3L524.3 314.7L528.8 316.6L534.2 319.1L538.3 321.7L542.0 323.9L539.6 325.2L532.1 325.2L533.8 322.9L530.3 321.7L527.8 319.7L521.7 317.8L518.3 318.5L515.5 319.1ZM540.8 329.6L544.3 325.2L547.9 325.2L553.4 325.5L557.5 329.0L554.3 330.2L550.0 331.8L547.9 330.2L545.1 330.6L542.3 330.9ZM529.9 329.9L535.4 330.2L534.7 331.8L530.0 331.5ZM560.7 329.6L565.1 329.9L564.4 331.5L560.6 331.2ZM532.9 303.5L536.4 303.8L535.9 305.1L533.0 304.5ZM532.9 308.6L533.8 311.5L534.4 311.2L533.7 308.3ZM573.6 354.1L576.4 354.1L576.1 356.4L573.5 356.4ZM315.8 324.2L318.4 325.8L315.9 328.3L315.7 325.8ZM314.7 321.7L316.5 322.3L315.0 322.9ZM310.8 319.7L312.3 320.4L311.1 320.7ZM307.1 317.8L308.4 318.2L307.7 318.8Z" fill="#eee474" stroke="#0a0a1e" stroke-width="1.05" stroke-linejoin="round" />
<path d="M517.1 240.2L523.9 236.8L528.7 234.3L533.8 234.0L536.5 237.4L535.5 240.8L530.8 240.8L528.8 239.6L525.1 239.6L520.9 240.5ZM521.3 255.9L524.7 255.5L527.6 250.2L531.1 246.1L533.6 243.0L530.0 242.7L526.3 245.5L524.4 247.1L524.3 250.2ZM534.5 242.7L537.6 242.4L542.6 242.4L545.5 244.6L544.7 246.7L541.4 246.7L538.8 250.8L536.4 251.8L537.1 249.3L534.0 249.6L536.9 245.5L535.1 243.6ZM532.6 255.9L534.5 256.8L538.7 255.9L545.0 252.7L544.5 252.1L539.9 252.7L535.5 254.3L533.7 254.3ZM543.7 250.8L548.2 250.8L552.9 249.9L553.6 248.0L549.4 248.9L545.4 249.6Z" fill="url(#og)" stroke="#0a0a1e" stroke-width="1.05" stroke-linejoin="round" />
<path d="M647.8 200.5L644.3 197.6L639.4 195.6L637.5 191.9L635.4 187.9L634.3 181.5L636.2 177.3L642.3 175.2L643.5 172.5L637.1 171.2L638.6 168.0L637.5 164.7L637.3 161.6L636.4 158.6L631.2 156.6L623.7 156.6L620.0 155.4L616.9 153.7L615.4 151.4L626.2 149.3L633.6 146.9L638.9 144.8L649.1 142.9L659.4 142.7L670.1 141.7L682.3 140.8L692.5 140.3L703.6 141.4L711.4 142.9L726.4 144.2L718.8 147.4L713.5 151.4L711.6 155.4L708.9 159.1L710.3 161.6L704.0 164.2L703.1 168.0L702.6 170.9L696.0 173.3L691.3 176.0L682.7 177.3L675.3 181.5L667.2 184.0L661.3 185.6L657.8 189.9L653.2 194.1L650.7 198.5ZM694.7 184.2L698.4 181.7L702.2 184.0L708.9 182.0L713.2 181.5L716.1 182.8L717.7 185.6L714.5 187.6L710.0 189.3L706.2 190.1L702.4 189.6L697.9 189.0L699.6 186.8L695.5 185.9Z" fill="#2fe8c0" stroke="#0a0a1e" stroke-width="1.05" stroke-linejoin="round" />
<path d="M530.2 361.1L531.5 363.0L533.9 358.9L535.5 355.1L537.6 353.2L539.6 352.5L543.3 351.3L546.5 349.0L547.8 350.6L545.7 352.8L546.8 354.1L548.3 352.8L550.6 351.9L551.3 349.7L552.2 351.9L555.8 353.8L556.5 355.1L562.1 354.8L565.7 356.4L569.1 354.8L573.4 354.4L571.6 356.0L576.0 357.9L577.3 361.1L580.0 363.0L582.7 366.2L585.4 368.8L587.4 369.7L591.9 369.7L595.2 370.0L599.4 372.6L602.1 374.8L604.3 380.5L606.2 384.7L604.8 387.9L607.6 387.5L610.4 389.8L611.8 391.0L616.1 391.7L621.7 396.1L625.1 396.1L630.2 397.7L634.4 397.7L638.6 400.3L642.3 403.8L647.7 405.1L648.9 409.2L649.0 414.3L647.1 419.1L644.7 421.9L642.5 425.1L639.3 429.9L638.1 434.7L638.4 439.4L637.8 444.8L636.8 450.6L634.8 455.3L633.9 458.5L631.4 461.4L627.3 461.7L623.8 462.7L619.8 464.9L616.0 468.1L614.1 471.3L614.7 476.4L613.9 479.5L611.7 483.0L609.6 487.2L606.9 491.0L604.5 495.8L602.9 498.6L600.9 499.6L597.7 499.6L593.2 498.0L591.4 496.7L591.5 498.6L595.1 501.2L596.0 504.0L597.5 505.0L596.1 509.4L592.9 511.7L587.9 512.6L584.6 512.0L585.5 516.4L584.9 518.9L579.1 518.6L580.1 522.1L583.7 523.0L583.9 524.6L581.0 525.2L581.7 529.9L579.3 531.8L577.6 534.3L579.3 537.1L583.2 538.4L583.5 540.9L581.3 544.9L579.8 547.7L579.4 550.7L582.7 554.1L580.0 554.1L577.6 555.6L578.2 558.0L574.9 557.7L571.1 555.6L567.4 553.8L564.6 550.1L561.9 545.5L560.0 540.9L558.3 537.1L560.4 534.0L561.0 529.9L560.4 524.6L559.7 520.8L557.1 519.9L555.7 515.5L555.2 511.0L553.8 506.9L554.4 502.5L555.5 498.3L555.5 493.5L554.4 487.2L553.7 482.4L553.7 476.0L553.8 469.7L553.6 463.3L553.7 456.9L552.8 451.5L551.8 447.1L549.0 444.2L545.5 442.0L541.1 439.4L536.6 436.2L534.0 432.4L531.1 427.3L528.6 421.9L526.0 416.5L522.9 410.8L519.5 407.9L518.5 403.5L520.9 399.6L522.5 396.8L519.4 395.8L519.6 391.7L521.5 388.5L521.8 386.0L525.0 383.7L526.1 380.5L529.0 377.7L529.7 374.2L529.2 370.7L529.6 367.5L528.3 365.6L529.5 363.7ZM582.7 555.3L584.4 557.1L587.6 559.5L593.3 561.4L590.8 562.6L586.6 563.8L582.7 562.9L577.6 561.1L573.1 558.9L576.2 558.9L579.7 558.9L578.9 555.9ZM556.4 521.8L558.2 521.8L559.8 526.5L557.4 526.2ZM598.6 551.0L602.9 551.0L607.4 551.9L606.3 553.8L602.8 554.1L600.1 553.2ZM603.9 389.1L607.6 388.8L610.4 390.4L607.6 393.6L604.2 391.7Z" fill="#2fd84c" stroke="#0a0a1e" stroke-width="1.05" stroke-linejoin="round" />
<path d="M1059.5 460.1L1061.3 457.9L1065.1 456.3L1069.6 454.1L1075.5 452.2L1081.2 450.9L1085.6 446.4L1085.9 443.2L1089.5 443.6L1091.4 440.4L1094.6 437.8L1098.0 433.7L1100.9 432.7L1103.3 435.6L1106.0 435.9L1108.9 431.5L1111.2 428.3L1114.1 427.3L1117.2 424.8L1119.9 426.1L1123.9 427.3L1128.7 426.7L1127.7 430.5L1125.2 434.0L1124.0 436.2L1127.7 439.1L1131.4 442.0L1133.7 444.2L1137.3 444.2L1140.5 437.8L1141.8 431.5L1142.8 428.3L1145.4 422.9L1147.4 429.2L1147.5 434.0L1151.4 435.9L1151.0 441.0L1151.7 447.4L1154.6 450.3L1157.6 453.1L1158.9 458.5L1161.0 462.3L1163.2 466.5L1165.0 469.7L1164.0 474.4L1163.1 479.2L1159.2 485.6L1155.3 491.3L1150.8 495.1L1146.3 499.9L1141.5 505.6L1140.0 507.9L1134.3 509.1L1128.7 512.0L1125.5 510.7L1122.9 510.7L1119.8 511.7L1116.6 510.4L1114.3 508.8L1114.4 505.6L1114.8 502.1L1112.3 501.8L1114.6 498.6L1115.0 493.5L1112.8 496.7L1109.2 500.5L1107.1 499.3L1106.7 495.5L1105.2 492.6L1102.1 490.4L1098.7 488.8L1093.2 489.1L1087.1 491.0L1082.6 492.3L1077.7 494.5L1075.6 496.4L1070.4 496.1L1066.3 496.4L1061.3 499.0L1058.3 499.9L1054.6 499.3L1052.5 497.7L1053.7 495.1L1056.5 492.0L1057.6 487.2L1057.5 483.4L1057.2 477.6L1056.4 472.2L1057.5 467.4L1058.6 463.6ZM1120.5 518.0L1124.3 519.2L1129.3 518.3L1126.8 522.1L1122.5 525.9L1119.1 527.1L1117.8 525.2L1119.0 521.5ZM1205.7 498.0L1206.4 500.5L1207.1 503.7L1208.8 505.3L1208.2 508.2L1211.7 508.8L1214.6 508.5L1210.9 512.0L1206.9 513.9L1203.8 517.4L1197.8 520.8L1196.8 519.9L1200.6 515.8L1198.8 513.6L1202.7 511.0L1205.0 507.9L1206.1 504.0L1205.4 499.9ZM1193.2 517.4L1195.5 519.6L1193.0 522.1L1188.0 525.2L1185.4 527.7L1180.3 529.3L1175.2 534.0L1169.9 536.5L1167.1 536.2L1164.4 534.9L1165.9 532.4L1172.2 529.0L1177.8 526.8L1184.1 523.7L1189.1 520.5ZM1185.9 409.8L1188.6 411.7L1187.9 412.4L1185.8 410.8ZM1190.7 412.7L1194.7 415.2L1194.1 415.9L1190.9 413.6ZM1193.8 418.1L1197.1 418.7L1196.7 420.0L1194.0 419.4ZM1196.9 415.2L1198.6 418.1L1197.9 419.1L1196.8 416.5ZM1198.5 421.3L1200.8 422.6L1199.4 422.9ZM1187.0 414.0L1189.3 415.6L1188.1 416.2ZM1210.8 435.3L1212.3 436.2L1211.6 438.5L1210.6 437.8ZM1211.6 439.4L1213.0 440.7L1212.1 441.3ZM1213.3 444.5L1214.3 444.8L1213.3 445.5ZM1199.7 452.5L1203.2 455.0L1206.3 459.2L1204.8 459.8L1201.4 456.9L1199.4 453.8ZM1238.6 444.2L1241.9 444.2L1241.7 446.1L1238.6 446.4ZM1242.7 442.0L1247.1 440.1L1246.1 441.7L1243.1 442.6Z" fill="#ec1844" stroke="#0a0a1e" stroke-width="1.05" stroke-linejoin="round" />
<path d="M741.0 276.8L742.0 279.0L742.3 282.5L743.6 285.4L739.0 286.6L737.1 289.2L733.3 293.0L729.2 294.3L723.2 297.1L723.1 301.6M723.2 300.4L710.9 300.4M723.1 301.6L723.0 305.7L714.0 305.7L713.9 313.7L711.1 315.3L710.7 320.7L700.2 320.7L699.9 322.0M723.1 301.6L733.7 308.9L750.1 321.3L755.6 326.1L758.4 327.7L762.8 326.4L767.5 322.0L779.7 313.7M733.7 308.9L729.4 321.7L731.5 339.2L720.9 339.5L716.7 339.8L714.8 338.8L712.8 341.4M779.7 313.7L775.0 310.2L773.0 304.8L773.7 300.0L773.3 295.6L772.4 292.4M772.4 292.4L770.9 286.6L769.0 284.7L767.1 281.9L768.8 278.0L768.7 273.3L769.4 271.1M772.4 292.4L774.2 288.9L774.4 287.0L777.6 285.4L777.5 283.0M813.9 287.9L813.7 292.4L814.5 295.6L815.6 318.5L815.9 324.8L813.1 324.8L813.1 326.4L790.7 314.0L788.0 315.3L785.8 316.6L779.7 313.7M815.6 318.5L833.2 318.5L848.1 318.5M813.1 326.4L813.6 338.5L810.5 340.1L809.2 343.9L808.2 348.1L809.7 353.5L810.9 353.8M788.0 315.3L789.5 321.7L789.8 334.7L784.4 342.7L784.7 344.9M784.7 344.9L781.7 346.8L774.7 346.2L769.1 346.2L764.9 345.2L758.2 345.5L756.9 351.3M756.9 351.3L753.5 349.7L752.9 349.0L749.6 345.8L747.4 340.8L756.5 339.5L758.5 335.0L758.4 327.7M747.4 340.8L744.9 340.4L741.2 343.3L738.4 345.2L734.8 346.8L734.5 349.3L731.4 350.9L731.4 355.4M731.4 355.4L729.5 354.4L724.4 356.0L723.6 353.5L721.7 349.0L715.0 349.0L715.0 347.1L712.8 341.4M712.8 341.4L709.3 336.9L706.5 335.7L700.9 337.3M715.0 349.0L708.5 348.2L700.2 349.2M708.5 348.2L708.5 351.3L705.7 351.9L704.8 353.5M699.9 345.2L705.0 344.6L708.3 345.5L708.3 346.2L705.0 345.8L699.9 346.8M709.5 359.9L711.8 357.0L715.4 356.7L717.1 359.5L717.9 361.4M717.9 361.4L720.2 361.8L720.7 364.9L723.2 364.3L725.2 361.8L724.4 358.6L724.4 356.0M717.9 361.4L714.5 366.5M723.2 364.3L723.2 367.8L725.7 370.0L725.7 374.5M738.1 372.3L738.9 369.4L737.8 366.2L739.8 362.4L739.0 358.3L739.0 353.5M731.4 355.4L733.6 357.6L738.4 357.0L739.0 353.5L745.4 353.5L746.8 353.2L749.3 353.5L752.9 350.6L753.5 349.7M750.2 369.1L748.5 366.2L748.5 361.4L747.9 358.3L746.8 354.8L746.8 353.2M751.4 368.8L751.3 364.6L750.7 358.9L749.0 355.7L749.3 353.5M754.4 368.1L754.4 363.4L755.5 359.5L757.4 355.1L756.9 351.3M771.0 373.2L771.5 370.0L774.9 366.5L779.1 367.5L781.0 361.4L783.8 356.7L786.5 351.9L787.3 348.7L786.1 346.8L784.7 344.9M786.4 347.1L788.7 351.9L789.3 356.7L786.0 357.0L787.4 359.9L790.3 364.6M790.3 364.6L787.5 368.8L787.8 372.6L789.5 375.8L792.1 381.2L792.3 383.1M792.3 383.1L787.6 381.5L784.2 381.5L778.6 381.5L774.3 381.2M774.4 385.3L778.6 385.3L778.6 381.5M784.2 381.5L783.9 384.4L787.3 385.3L786.2 390.1L787.6 393.3L787.3 395.5L781.9 395.8L780.5 398.0L778.0 400.9M792.3 383.1L793.2 379.0L799.1 377.4M799.1 377.4L797.4 382.1L796.9 388.5L793.2 394.9L791.8 399.6L789.8 402.2L787.5 404.1L783.3 403.1L782.2 404.4L781.0 407.0M782.2 404.4L780.5 404.4M790.3 364.6L794.5 364.3L798.9 362.7L800.3 359.9L805.6 357.3L810.9 353.8M810.9 353.8L812.9 358.3L814.6 361.4L817.5 364.3L823.7 372.6M799.1 377.4L799.0 374.5L803.0 374.2L810.0 375.1L815.6 372.6L823.7 372.6M823.7 372.6L829.7 374.2L833.3 377.4L836.7 377.0L842.3 375.1L847.8 373.9M847.8 373.9L845.9 371.0L844.2 367.2L839.3 363.0L842.4 361.1L842.8 355.1L845.2 350.3L847.6 348.1L848.5 343.0L849.5 334.4L853.8 331.2M848.5 343.0L852.4 341.7L855.4 342.0L858.8 342.7L863.5 347.1L865.2 348.7L867.1 348.1M865.2 348.7L863.7 351.9L863.7 353.5L866.5 353.8L867.7 351.9M866.5 353.8L867.2 358.6L870.1 359.9L878.6 363.0L881.4 363.0L873.2 372.6L864.8 375.1L864.5 375.9M864.5 375.9L861.4 375.1L857.8 377.4L853.6 377.0L850.5 374.5L847.8 373.9M864.5 375.9L862.0 379.6L862.1 388.5L862.1 391.0L863.8 393.9M842.3 375.1L843.8 379.0L845.2 382.5L844.1 385.0L842.4 387.9L842.1 391.7M842.1 391.7L852.5 398.0L852.7 399.6L856.9 403.5M833.3 377.4L834.8 381.5L831.2 386.0L830.0 390.1L830.0 393.0M830.0 393.0L832.6 391.7L842.1 391.7M832.6 391.7L833.4 396.1L832.5 399.0L829.9 402.5M828.3 397.1L833.4 396.1M830.0 393.0L828.9 395.5L828.3 397.1L829.1 399.0L829.4 402.5L829.9 409.2L832.9 414.6M832.9 414.6L838.9 418.4L842.0 418.7L843.3 421.9L844.4 425.4L851.6 425.7L854.4 424.8L859.8 421.9M838.9 418.4L840.0 422.9L839.5 428.6L838.0 431.8L839.4 433.1L842.9 434.7L842.2 438.5L844.8 442.9L846.3 439.4L846.5 435.0L843.6 431.5L843.5 426.7L844.4 425.4M832.9 414.6L827.8 415.2L826.9 418.1L826.2 426.1L830.1 427.0L829.9 431.2L826.1 428.3L822.8 426.1L817.5 424.2L815.0 424.8L813.9 423.2M813.9 423.2L813.8 429.9L808.2 429.9L807.9 440.1L811.7 444.5L816.9 445.2M839.4 433.1L830.9 436.2L831.4 438.2L827.1 439.4L821.6 445.8L816.9 445.2M816.9 445.2L811.4 445.8L805.0 446.8L804.6 458.5L801.9 458.5L801.5 467.4L801.1 478.9L794.2 479.9L791.5 479.5M779.5 443.6L785.4 443.9L798.1 443.9L805.0 445.5L811.7 444.5M781.3 407.6L784.4 407.3L793.4 407.3L794.5 411.7L801.5 412.4L802.9 410.8L807.9 411.7L808.4 418.7L808.3 423.5L813.9 423.2M801.5 467.4L803.5 473.8L808.2 471.9L814.3 470.0L817.7 467.1L820.9 463.6L827.7 459.2L832.9 459.8M827.7 459.2L823.2 453.8L819.3 449.0L816.9 445.2M832.9 459.8L836.4 456.3L837.7 451.5L837.9 447.4L838.4 443.6L834.3 440.1L831.4 438.2M832.9 459.8L834.5 466.5L833.9 470.9L834.3 473.8L836.4 474.1M833.9 470.9L831.7 470.6L830.7 473.5L832.0 475.4L834.3 473.8M819.8 482.7L824.1 479.5L826.3 482.1L825.0 484.9L822.2 485.9L820.5 484.6L819.8 482.7M547.5 350.9L544.1 353.2L542.4 358.3L543.9 361.8L544.9 364.9L550.1 366.2L552.0 369.1L557.4 368.8L556.4 374.2L557.7 377.7L557.9 381.2L558.7 384.7M558.7 384.7L550.6 383.1L550.5 385.0L552.2 385.3L551.7 391.7L550.4 401.9M550.4 401.9L548.2 400.6L541.9 396.1L537.6 390.1L535.0 388.8L530.3 387.5L525.2 384.0M535.0 388.8L534.2 393.3L526.8 399.3L524.9 404.4L521.2 402.5L521.2 399.3M550.4 401.9L542.4 404.7L539.5 411.7L542.6 417.5L549.4 418.7L549.3 423.5L552.1 423.5M552.1 423.5L554.9 428.3L554.1 435.3L553.9 437.2L555.1 441.0L554.0 444.2L551.8 446.8M554.0 444.2L557.4 450.6L558.9 456.9L562.1 461.1M552.1 423.5L555.8 423.5L564.0 419.7L564.0 425.1L567.2 428.3L575.3 431.5L578.9 431.5L579.5 440.1L584.8 440.4L585.4 444.2L587.5 446.4L586.5 451.5L586.1 452.8M586.1 452.8L583.4 449.9L576.0 450.9L574.6 459.2L570.1 461.1L567.4 458.8L564.2 457.9L562.1 461.1M562.1 461.1L559.7 466.5L560.3 474.4L557.8 479.2L558.4 487.2L560.1 495.1L560.7 503.1L560.9 511.0L561.7 518.9L565.0 528.4L567.7 534.6L568.5 542.4L568.6 547.0L572.2 551.6L573.9 553.2L582.7 554.1M582.7 555.3L585.6 562.0M574.6 459.2L579.5 464.3L589.3 469.0L587.3 475.1L594.4 475.4L597.6 470.0M586.1 452.8L587.5 458.8L593.6 459.5L594.9 464.9L597.9 465.2L597.6 470.0M597.6 470.0L600.2 473.8L595.4 478.6L591.4 484.6L591.0 492.0L591.4 496.7M591.4 484.6L597.1 486.9L603.4 492.3L604.5 495.8M558.7 384.7L562.6 386.0L566.9 382.5L567.0 375.8L570.3 376.7L575.5 374.2L576.4 371.9M576.4 371.9L574.4 369.7L576.6 364.9L578.6 361.4M576.4 371.9L578.8 374.2L579.0 382.5L581.5 384.7L588.0 382.5L593.6 381.2L599.2 380.5L601.8 375.1M586.5 369.4L585.9 372.6L583.9 375.8L588.0 382.5M595.2 370.0L594.0 374.2L593.6 381.2M460.5 173.0L431.0 199.1L434.9 199.6L435.1 202.9L441.9 200.5L442.5 203.4L442.1 208.8L444.1 211.7L441.1 214.7M444.0 233.0L512.8 233.0L514.3 232.1L517.6 234.3L524.3 235.8L528.5 235.2L535.5 239.6L535.8 240.8L537.6 242.4L539.2 244.6L536.7 251.8L533.9 254.3L534.9 255.9L545.1 252.4L545.6 250.5L551.6 249.9L553.6 248.0L557.8 245.5L566.6 245.5L569.0 244.2L572.0 240.8L574.9 238.0L577.8 238.3L576.7 243.0L577.9 245.5M433.3 285.0L440.0 284.4L439.5 285.0L448.4 288.9L455.9 288.9L456.4 287.3L461.0 287.3L464.1 291.1L465.4 295.2L467.9 296.2L470.2 293.6L472.9 293.6L474.6 298.4L476.2 301.0L476.5 304.5L481.4 306.1M489.7 342.3L490.2 339.8L491.9 337.3L495.2 337.3L493.2 333.6L494.3 333.6L494.5 331.8L499.6 331.8L500.7 331.2L502.3 329.6M499.6 331.8L498.8 337.9L499.6 337.9M501.2 338.5L498.3 342.7L495.5 344.7M498.3 342.7L500.1 344.3L502.3 344.6L501.8 346.2M503.1 347.1L505.0 344.6L507.6 344.3L510.6 341.4L515.2 340.8M507.1 353.2L509.9 353.5L512.7 353.8M515.5 357.9L514.5 360.5L514.4 362.7M548.7 325.8L548.3 329.3L547.8 331.2M788.7 174.4L784.0 176.0L780.5 178.7L777.4 182.6L777.4 185.6L773.0 189.6L773.8 195.6L775.0 198.5L773.4 201.4L772.2 203.1M788.7 174.4L795.9 177.6L796.5 181.7L798.1 183.4M788.7 174.4L790.6 173.8L799.3 174.6L800.4 172.2L803.3 171.7L806.0 174.4M767.0 215.0L769.1 215.3M763.9 219.9L763.9 223.2L761.3 224.4L761.4 227.5M755.0 225.7L757.7 225.7L760.8 226.3L761.4 227.5M752.9 226.6L757.1 230.0L761.0 231.5L762.5 231.5M761.4 227.5L761.7 229.7L762.5 231.5L767.0 233.0L765.6 237.4M765.6 237.4L761.8 241.7L764.3 242.7L763.9 245.2L764.5 248.0L765.8 249.3M742.2 250.5L748.6 252.4L755.0 253.7M724.0 255.2L725.8 254.6L729.9 255.2L730.9 256.2L728.9 260.3L728.6 262.2L727.6 262.8L728.5 266.9L727.4 270.1M765.6 237.4L770.6 237.7L770.7 238.9L773.0 239.6M764.3 242.7L767.8 241.1L769.4 243.0L773.0 239.6M770.6 237.7L779.1 237.7L780.8 233.7L776.3 229.0L782.7 226.9L781.8 222.3L780.4 218.1M782.7 226.9L787.9 228.7L792.8 231.5L802.3 232.7M780.8 233.7L783.7 233.0L788.4 234.3L792.8 231.5M773.0 239.6L777.2 238.9L781.0 240.8L786.9 239.6L789.1 236.1L788.4 234.3M789.1 236.1L793.4 236.8L797.3 234.6L801.3 234.9M803.5 236.1L799.8 241.1L797.6 242.1L794.2 242.7L788.3 240.8L786.9 239.6M781.0 240.8L781.2 243.3M781.0 243.9L785.2 243.9L788.3 240.8M786.6 244.9L789.6 244.9L794.7 245.8L796.0 248.6L795.6 250.2L794.1 253.3M786.6 244.9L787.4 248.6L791.7 251.8L794.1 253.3M794.2 242.7L794.7 245.8M797.6 242.1L800.7 244.9L803.6 246.7L804.3 248.0L803.9 251.8L804.1 254.0L805.7 257.1M804.3 248.0L810.3 249.6L815.2 248.3L819.4 249.6M802.3 232.7L801.3 234.9L803.5 236.1L808.5 237.1L812.5 235.5L816.9 240.5L817.7 243.9M812.5 235.5L814.6 234.6L819.0 236.1L821.8 241.1L817.7 243.9M802.3 232.7L805.2 228.4L803.8 225.4L803.3 222.3L803.4 218.1L802.4 217.8L800.6 216.5M802.4 217.8L807.8 217.2L808.9 212.6L812.3 211.1M795.9 211.4L804.6 210.5L808.9 212.6M802.4 206.1L806.4 206.4L809.9 207.0M803.8 225.4L812.0 225.4L820.5 226.0L822.9 223.2M805.7 257.1L809.8 256.5L814.4 255.9L818.6 254.9M814.4 255.9L813.9 258.7M804.1 254.0L799.6 254.9L797.9 253.0L796.6 255.2M799.6 254.9L799.6 257.1L801.0 258.4L798.7 262.2M801.0 258.4L805.7 257.1M729.7 214.7L727.9 216.2L731.9 217.5M869.7 241.1L863.1 236.1L861.5 234.6L862.0 229.0L865.2 228.1L869.7 224.7L878.9 226.9L888.8 226.9L895.5 226.0L892.5 221.1L891.9 217.8L900.2 216.5L908.3 213.5L914.6 217.2L921.1 218.4L928.0 216.5L932.3 219.9L940.9 227.5L948.9 226.9L955.6 231.2L961.1 232.4M962.3 232.4L970.1 227.5L978.7 230.0L985.9 228.4L982.9 225.4L984.9 223.8L993.9 226.0L995.4 228.1L1002.4 228.7L1008.5 230.9L1019.0 232.1L1025.9 229.3L1032.0 230.6M1032.0 230.6L1035.3 231.5L1037.5 229.7L1036.0 222.3L1034.9 219.9L1040.4 219.3L1048.0 221.4L1057.6 229.3L1066.5 233.4L1071.5 237.1L1079.4 235.2L1082.0 245.5L1079.7 248.6L1081.0 252.1L1081.0 253.7M1081.0 253.7L1077.6 254.9L1075.9 256.5L1072.5 255.9L1069.2 261.2M1078.7 268.2L1081.9 265.7M962.3 232.4L963.8 234.6L973.8 240.8L975.9 244.9L988.6 248.0L992.9 252.4L1002.4 253.0L1015.1 255.5L1020.7 254.0L1027.8 252.7L1030.7 249.6L1029.1 245.5L1037.2 244.2L1037.8 240.8L1045.6 240.2L1039.1 236.8L1032.9 236.8L1032.0 230.6M961.1 232.4L958.5 234.9L959.5 238.9L953.2 238.6L953.6 243.9L948.2 245.5L952.6 251.1L952.2 254.3M952.2 254.3L945.1 258.1L938.0 262.8L942.4 266.0L943.2 269.8L946.2 271.4L952.6 275.5M952.6 275.5L956.8 279.3L957.5 285.0L958.7 289.2L965.3 292.4M965.3 292.4L968.0 292.1L974.3 296.5L980.4 299.4L986.1 299.7M963.8 296.8L969.0 299.7L975.3 301.3L980.7 303.8L987.1 304.5L986.1 299.7M963.8 296.8L965.3 292.4M986.1 299.7L988.4 301.6L990.5 298.7L995.7 300.0L997.4 302.9L991.5 303.5L988.4 301.6M995.7 300.0L1001.4 296.2L1006.5 294.9L1010.8 298.4M1010.8 298.4L1015.2 300.6L1016.4 306.4L1013.9 310.5L1018.0 312.1L1019.8 318.2L1022.6 320.1L1025.8 321.0M1025.8 321.0L1026.5 316.9L1027.9 317.2L1032.5 316.9L1035.9 314.3L1040.0 315.6L1040.2 318.5L1044.3 320.1M1027.9 317.2L1030.9 322.3L1035.2 323.6L1034.3 326.4L1038.0 329.0L1042.4 334.4L1045.9 339.2L1046.2 341.7M1046.2 341.7L1047.0 348.7L1043.1 351.3L1043.0 353.8L1039.2 355.4M1046.2 341.7L1042.2 343.0L1040.0 343.0L1033.8 343.0L1032.4 345.5L1034.4 351.3M1040.0 343.0L1040.5 338.5L1037.2 332.8L1032.9 329.9L1029.7 330.6L1026.9 332.8L1026.6 326.4L1023.1 323.6M1023.1 323.6L1025.8 321.0M1023.1 323.6L1020.1 325.5L1017.3 329.6L1020.8 336.9L1020.2 340.8L1023.8 348.7L1025.2 351.6L1023.0 356.0M1027.7 367.8L1030.6 370.4L1033.4 368.8M1010.8 298.4L1008.6 301.6L1006.2 303.5L1005.5 308.3L1004.6 312.4L1002.6 312.1L1003.9 318.5L1002.0 320.7L1001.4 322.6M991.8 318.8L990.7 314.7L988.1 310.5L987.9 304.5L992.0 305.7L992.4 308.0L999.6 308.9L996.9 312.1L998.2 315.3L1000.0 313.1L1002.0 320.7M933.9 313.1L941.3 310.8L938.0 306.7L937.1 300.3L942.2 298.4L945.0 293.0L947.5 289.8L946.0 284.1L944.4 282.8L943.9 277.7L952.6 275.5M943.2 269.8L942.6 270.7L935.5 272.6L935.8 278.0L933.1 280.3L932.7 287.0L925.5 290.1L925.9 293.6L915.8 294.9L911.3 293.6M911.3 293.6L917.3 298.7L919.1 303.8L915.3 308.3M911.3 293.6L913.1 289.8L909.8 286.6L907.9 279.3L908.6 275.2M908.6 275.2L913.5 275.8L916.9 273.0L921.3 269.5L925.6 270.7L929.0 268.8L933.1 266.6L935.3 271.7L939.1 269.1L943.2 269.8M908.6 275.2L907.7 272.0L900.1 268.5L894.5 266.9L890.3 269.5L888.3 269.8M921.3 269.5L914.9 264.7L907.6 259.6L906.1 257.1L901.5 257.1L900.5 254.3L896.5 252.7L893.5 257.1L891.0 257.1L887.9 245.5M891.0 257.1L887.1 254.9L881.6 255.5M887.9 245.5L894.0 243.6L901.1 247.4L911.6 249.6L915.4 251.8L916.0 254.9L921.9 257.4L926.2 254.6L928.6 254.0M928.6 254.0L934.3 252.1L937.1 251.1L948.6 252.7L952.2 254.3M928.6 254.0L927.3 256.5L931.0 257.4L935.3 259.0L929.3 260.6L926.6 261.9L930.0 262.8L938.0 262.8M926.6 261.9L922.1 263.4L924.8 267.6L925.6 270.7M864.5 270.1L866.7 273.9L869.2 276.8L867.6 280.3L870.2 283.1L875.1 287.3L877.7 293.0M857.9 270.1L856.1 277.7L850.3 282.2L851.8 286.0L859.8 289.5L867.8 295.6L872.4 295.9L875.4 296.2M872.8 295.9L874.7 292.7L876.4 293.0M872.8 295.9L876.2 297.8L878.1 297.8M850.3 282.2L845.4 285.7L842.6 284.4M842.4 278.4L844.1 279.6L842.3 282.5L840.5 283.1M842.3 282.5L842.6 284.4L842.2 288.2L841.4 294.6M839.0 288.9L841.2 294.6M851.8 286.0L846.2 288.2L849.2 291.4L848.0 293.0L844.2 295.6L841.5 294.9M865.7 336.3L866.9 332.8L870.2 333.1L877.3 334.7L881.2 330.6L890.7 328.0M890.7 328.0L898.7 324.8L900.1 318.5L898.5 316.2M898.5 316.2L891.3 315.6L888.3 311.8M885.9 309.7L887.0 310.2M898.5 316.2L899.7 311.5L900.4 309.6L901.1 309.1M890.7 328.0L894.3 335.5M848.6 250.5L855.1 251.1L860.5 252.7L866.1 255.2M858.9 257.8L862.6 257.1M863.1 262.2L865.4 260.6M863.1 262.2L868.0 264.7M1054.9 382.1L1057.5 385.6L1061.7 384.0L1067.3 384.0L1070.0 379.6L1072.1 374.8L1076.9 375.1M1143.1 396.8L1141.8 417.5M1096.7 417.1L1097.1 418.7M1067.3 373.9L1069.3 375.1L1070.7 374.5L1070.0 372.6" fill="none" stroke="#05050f" stroke-width="0.9" stroke-linejoin="round"/>
<path d="M477.4 645.2L468.0 642.6L457.2 639.1L445.2 634.7L432.3 629.6L419.0 624.0L406.0 617.9L394.1 611.6L383.0 605.0L372.5 598.3L362.2 591.4L352.3 584.3L342.5 577.1L333.2 569.7L324.1 562.3L315.5 554.7L307.5 547.0L300.1 539.3L293.1 531.5L286.5 523.7L280.3 515.8L274.7 507.9L269.6 499.9L265.0 492.0L260.8 484.0L257.3 476.0L254.3 468.1L251.8 460.1L249.6 452.2L247.5 444.2L245.7 436.2L244.1 428.3L242.9 420.3L242.0 412.4L241.3 404.4L240.8 396.5L240.6 388.5L240.8 380.5L241.3 372.6L242.0 364.6L242.9 356.7L244.1 348.7L245.7 340.8L247.5 332.8L249.6 324.8L251.8 316.9L254.3 308.9L257.3 301.0L260.8 293.0L265.0 285.0L269.6 277.1L274.7 269.1L280.3 261.2L286.5 253.3L293.1 245.5L300.1 237.7L307.5 230.0L315.5 222.3L324.1 214.7L333.2 207.3L342.5 199.9L352.3 192.7L362.2 185.6L372.5 178.7L383.0 172.0L394.1 165.4L406.0 159.1L419.0 153.0L432.3 147.4L445.2 142.3L457.2 137.9L468.0 134.4L477.4 131.8M499.9 645.2L491.2 642.6L481.3 639.1L470.3 634.7L458.5 629.6L446.3 624.0L434.4 617.9L423.5 611.6L413.4 605.0L403.7 598.3L394.3 591.4L385.1 584.3L376.2 577.1L367.6 569.7L359.3 562.3L351.5 554.7L344.1 547.0L337.3 539.3L330.9 531.5L324.9 523.7L319.2 515.8L314.0 507.9L309.4 499.9L305.1 492.0L301.3 484.0L298.1 476.0L295.3 468.1L293.0 460.1L291.0 452.2L289.1 444.2L287.4 436.2L286.0 428.3L284.9 420.3L284.1 412.4L283.4 404.4L283.0 396.5L282.8 388.5L283.0 380.5L283.4 372.6L284.1 364.6L284.9 356.7L286.0 348.7L287.4 340.8L289.1 332.8L291.0 324.8L293.0 316.9L295.3 308.9L298.1 301.0L301.3 293.0L305.1 285.0L309.4 277.1L314.0 269.1L319.2 261.2L324.9 253.3L330.9 245.5L337.3 237.7L344.1 230.0L351.5 222.3L359.3 214.7L367.6 207.3L376.2 199.9L385.1 192.7L394.3 185.6L403.7 178.7L413.4 172.0L423.5 165.4L434.4 159.1L446.3 153.0L458.5 147.4L470.3 142.3L481.3 137.9L491.2 134.4L499.9 131.8M522.3 645.2L514.5 642.6L505.4 639.1L495.4 634.7L484.7 629.6L473.6 624.0L462.8 617.9L452.9 611.6L443.7 605.0L434.9 598.3L426.3 591.4L418.0 584.3L409.9 577.1L402.1 569.7L394.6 562.3L387.4 554.7L380.7 547.0L374.5 539.3L368.8 531.5L363.2 523.7L358.0 515.8L353.4 507.9L349.1 499.9L345.3 492.0L341.8 484.0L338.9 476.0L336.4 468.1L334.3 460.1L332.5 452.2L330.7 444.2L329.2 436.2L327.9 428.3L326.9 420.3L326.1 412.4L325.6 404.4L325.2 396.5L325.0 388.5L325.2 380.5L325.6 372.6L326.1 364.6L326.9 356.7L327.9 348.7L329.2 340.8L330.7 332.8L332.5 324.8L334.3 316.9L336.4 308.9L338.9 301.0L341.8 293.0L345.3 285.0L349.1 277.1L353.4 269.1L358.0 261.2L363.2 253.3L368.8 245.5L374.5 237.7L380.7 230.0L387.4 222.3L394.6 214.7L402.1 207.3L409.9 199.9L418.0 192.7L426.3 185.6L434.9 178.7L443.7 172.0L452.9 165.4L462.8 159.1L473.6 153.0L484.7 147.4L495.4 142.3L505.4 137.9L514.5 134.4L522.3 131.8M544.8 645.2L537.7 642.6L529.6 639.1L520.6 634.7L510.9 629.6L500.9 624.0L491.2 617.9L482.3 611.6L474.0 605.0L466.1 598.3L458.4 591.4L450.9 584.3L443.6 577.1L436.6 569.7L429.8 562.3L423.3 554.7L417.3 547.0L411.8 539.3L406.6 531.5L401.6 523.7L396.9 515.8L392.7 507.9L388.9 499.9L385.4 492.0L382.3 484.0L379.7 476.0L377.4 468.1L375.5 460.1L373.9 452.2L372.4 444.2L370.9 436.2L369.8 428.3L368.9 420.3L368.2 412.4L367.7 404.4L367.3 396.5L367.1 388.5L367.3 380.5L367.7 372.6L368.2 364.6L368.9 356.7L369.8 348.7L370.9 340.8L372.4 332.8L373.9 324.8L375.5 316.9L377.4 308.9L379.7 301.0L382.3 293.0L385.4 285.0L388.9 277.1L392.7 269.1L396.9 261.2L401.6 253.3L406.6 245.5L411.8 237.7L417.3 230.0L423.3 222.3L429.8 214.7L436.6 207.3L443.6 199.9L450.9 192.7L458.4 185.6L466.1 178.7L474.0 172.0L482.3 165.4L491.2 159.1L500.9 153.0L510.9 147.4L520.6 142.3L529.6 137.9L537.7 134.4L544.8 131.8M567.2 645.2L560.9 642.6L553.7 639.1L545.7 634.7L537.1 629.6L528.3 624.0L519.6 617.9L511.7 611.6L504.3 605.0L497.2 598.3L490.4 591.4L483.8 584.3L477.3 577.1L471.0 569.7L465.0 562.3L459.3 554.7L453.9 547.0L449.0 539.3L444.4 531.5L439.9 523.7L435.8 515.8L432.1 507.9L428.7 499.9L425.6 492.0L422.8 484.0L420.4 476.0L418.4 468.1L416.8 460.1L415.3 452.2L414.0 444.2L412.7 436.2L411.7 428.3L410.9 420.3L410.3 412.4L409.8 404.4L409.5 396.5L409.3 388.5L409.5 380.5L409.8 372.6L410.3 364.6L410.9 356.7L411.7 348.7L412.7 340.8L414.0 332.8L415.3 324.8L416.8 316.9L418.4 308.9L420.4 301.0L422.8 293.0L425.6 285.0L428.7 277.1L432.1 269.1L435.8 261.2L439.9 253.3L444.4 245.5L449.0 237.7L453.9 230.0L459.3 222.3L465.0 214.7L471.0 207.3L477.3 199.9L483.8 192.7L490.4 185.6L497.2 178.7L504.3 172.0L511.7 165.4L519.6 159.1L528.3 153.0L537.1 147.4L545.7 142.3L553.7 137.9L560.9 134.4L567.2 131.8M589.7 645.2L584.2 642.6L577.8 639.1L570.8 634.7L563.3 629.6L555.6 624.0L548.0 617.9L541.1 611.6L534.6 605.0L528.4 598.3L522.5 591.4L516.7 584.3L511.0 577.1L505.5 569.7L500.2 562.3L495.2 554.7L490.5 547.0L486.2 539.3L482.2 531.5L478.3 523.7L474.7 515.8L471.4 507.9L468.4 499.9L465.7 492.0L463.3 484.0L461.2 476.0L459.5 468.1L458.0 460.1L456.8 452.2L455.6 444.2L454.5 436.2L453.6 428.3L452.9 420.3L452.3 412.4L451.9 404.4L451.7 396.5L451.5 388.5L451.7 380.5L451.9 372.6L452.3 364.6L452.9 356.7L453.6 348.7L454.5 340.8L455.6 332.8L456.8 324.8L458.0 316.9L459.5 308.9L461.2 301.0L463.3 293.0L465.7 285.0L468.4 277.1L471.4 269.1L474.7 261.2L478.3 253.3L482.2 245.5L486.2 237.7L490.5 230.0L495.2 222.3L500.2 214.7L505.5 207.3L511.0 199.9L516.7 192.7L522.5 185.6L528.4 178.7L534.6 172.0L541.1 165.4L548.0 159.1L555.6 153.0L563.3 147.4L570.8 142.3L577.8 137.9L584.2 134.4L589.7 131.8M612.1 645.2L607.4 642.6L602.0 639.1L596.0 634.7L589.5 629.6L582.9 624.0L576.4 617.9L570.5 611.6L564.9 605.0L559.6 598.3L554.5 591.4L549.5 584.3L544.7 577.1L540.0 569.7L535.5 562.3L531.2 554.7L527.1 547.0L523.4 539.3L520.0 531.5L516.6 523.7L513.5 515.8L510.7 507.9L508.2 499.9L505.9 492.0L503.8 484.0L502.0 476.0L500.5 468.1L499.3 460.1L498.2 452.2L497.2 444.2L496.2 436.2L495.5 428.3L494.9 420.3L494.4 412.4L494.1 404.4L493.8 396.5L493.7 388.5L493.8 380.5L494.1 372.6L494.4 364.6L494.9 356.7L495.5 348.7L496.2 340.8L497.2 332.8L498.2 324.8L499.3 316.9L500.5 308.9L502.0 301.0L503.8 293.0L505.9 285.0L508.2 277.1L510.7 269.1L513.5 261.2L516.6 253.3L520.0 245.5L523.4 237.7L527.1 230.0L531.2 222.3L535.5 214.7L540.0 207.3L544.7 199.9L549.5 192.7L554.5 185.6L559.6 178.7L564.9 172.0L570.5 165.4L576.4 159.1L582.9 153.0L589.5 147.4L596.0 142.3L602.0 137.9L607.4 134.4L612.1 131.8M634.6 645.2L630.6 642.6L626.1 639.1L621.1 634.7L615.8 629.6L610.2 624.0L604.8 617.9L599.8 611.6L595.2 605.0L590.8 598.3L586.6 591.4L582.4 584.3L578.4 577.1L574.4 569.7L570.7 562.3L567.1 554.7L563.7 547.0L560.7 539.3L557.8 531.5L555.0 523.7L552.4 515.8L550.1 507.9L548.0 499.9L546.0 492.0L544.3 484.0L542.8 476.0L541.6 468.1L540.5 460.1L539.6 452.2L538.8 444.2L538.0 436.2L537.4 428.3L536.9 420.3L536.5 412.4L536.2 404.4L536.0 396.5L535.9 388.5L536.0 380.5L536.2 372.6L536.5 364.6L536.9 356.7L537.4 348.7L538.0 340.8L538.8 332.8L539.6 324.8L540.5 316.9L541.6 308.9L542.8 301.0L544.3 293.0L546.0 285.0L548.0 277.1L550.1 269.1L552.4 261.2L555.0 253.3L557.8 245.5L560.7 237.7L563.7 230.0L567.1 222.3L570.7 214.7L574.4 207.3L578.4 199.9L582.4 192.7L586.6 185.6L590.8 178.7L595.2 172.0L599.8 165.4L604.8 159.1L610.2 153.0L615.8 147.4L621.1 142.3L626.1 137.9L630.6 134.4L634.6 131.8M657.0 645.2L653.9 642.6L650.3 639.1L646.3 634.7L642.0 629.6L637.5 624.0L633.2 617.9L629.2 611.6L625.5 605.0L622.0 598.3L618.6 591.4L615.3 584.3L612.0 577.1L608.9 569.7L605.9 562.3L603.0 554.7L600.4 547.0L597.9 539.3L595.6 531.5L593.4 523.7L591.3 515.8L589.4 507.9L587.7 499.9L586.2 492.0L584.8 484.0L583.6 476.0L582.6 468.1L581.8 460.1L581.1 452.2L580.4 444.2L579.8 436.2L579.2 428.3L578.8 420.3L578.5 412.4L578.3 404.4L578.1 396.5L578.1 388.5L578.1 380.5L578.3 372.6L578.5 364.6L578.8 356.7L579.2 348.7L579.8 340.8L580.4 332.8L581.1 324.8L581.8 316.9L582.6 308.9L583.6 301.0L584.8 293.0L586.2 285.0L587.7 277.1L589.4 269.1L591.3 261.2L593.4 253.3L595.6 245.5L597.9 237.7L600.4 230.0L603.0 222.3L605.9 214.7L608.9 207.3L612.0 199.9L615.3 192.7L618.6 185.6L622.0 178.7L625.5 172.0L629.2 165.4L633.2 159.1L637.5 153.0L642.0 147.4L646.3 142.3L650.3 137.9L653.9 134.4L657.0 131.8M679.5 645.2L677.1 642.6L674.4 639.1L671.4 634.7L668.2 629.6L664.8 624.0L661.6 617.9L658.6 611.6L655.9 605.0L653.2 598.3L650.7 591.4L648.2 584.3L645.7 577.1L643.4 569.7L641.1 562.3L639.0 554.7L637.0 547.0L635.1 539.3L633.4 531.5L631.7 523.7L630.2 515.8L628.8 507.9L627.5 499.9L626.3 492.0L625.3 484.0L624.4 476.0L623.7 468.1L623.0 460.1L622.5 452.2L622.0 444.2L621.5 436.2L621.1 428.3L620.8 420.3L620.6 412.4L620.4 404.4L620.3 396.5L620.2 388.5L620.3 380.5L620.4 372.6L620.6 364.6L620.8 356.7L621.1 348.7L621.5 340.8L622.0 332.8L622.5 324.8L623.0 316.9L623.7 308.9L624.4 301.0L625.3 293.0L626.3 285.0L627.5 277.1L628.8 269.1L630.2 261.2L631.7 253.3L633.4 245.5L635.1 237.7L637.0 230.0L639.0 222.3L641.1 214.7L643.4 207.3L645.7 199.9L648.2 192.7L650.7 185.6L653.2 178.7L655.9 172.0L658.6 165.4L661.6 159.1L664.8 153.0L668.2 147.4L671.4 142.3L674.4 137.9L677.1 134.4L679.5 131.8M701.9 645.2L700.3 642.6L698.5 639.1L696.5 634.7L694.4 629.6L692.2 624.0L690.0 617.9L688.0 611.6L686.2 605.0L684.4 598.3L682.7 591.4L681.0 584.3L679.4 577.1L677.9 569.7L676.4 562.3L674.9 554.7L673.6 547.0L672.3 539.3L671.2 531.5L670.1 523.7L669.0 515.8L668.1 507.9L667.3 499.9L666.5 492.0L665.8 484.0L665.2 476.0L664.7 468.1L664.3 460.1L663.9 452.2L663.6 444.2L663.3 436.2L663.0 428.3L662.8 420.3L662.7 412.4L662.6 404.4L662.5 396.5L662.4 388.5L662.5 380.5L662.6 372.6L662.7 364.6L662.8 356.7L663.0 348.7L663.3 340.8L663.6 332.8L663.9 324.8L664.3 316.9L664.7 308.9L665.2 301.0L665.8 293.0L666.5 285.0L667.3 277.1L668.1 269.1L669.0 261.2L670.1 253.3L671.2 245.5L672.3 237.7L673.6 230.0L674.9 222.3L676.4 214.7L677.9 207.3L679.4 199.9L681.0 192.7L682.7 185.6L684.4 178.7L686.2 172.0L688.0 165.4L690.0 159.1L692.2 153.0L694.4 147.4L696.5 142.3L698.5 137.9L700.3 134.4L701.9 131.8M724.4 645.2L723.6 642.6L722.7 639.1L721.7 634.7L720.6 629.6L719.5 624.0L718.4 617.9L717.4 611.6L716.5 605.0L715.6 598.3L714.8 591.4L713.9 584.3L713.1 577.1L712.3 569.7L711.6 562.3L710.9 554.7L710.2 547.0L709.6 539.3L709.0 531.5L708.4 523.7L707.9 515.8L707.5 507.9L707.0 499.9L706.6 492.0L706.3 484.0L706.0 476.0L705.8 468.1L705.5 460.1L705.4 452.2L705.2 444.2L705.0 436.2L704.9 428.3L704.8 420.3L704.7 412.4L704.7 404.4L704.6 396.5L704.6 388.5L704.6 380.5L704.7 372.6L704.7 364.6L704.8 356.7L704.9 348.7L705.0 340.8L705.2 332.8L705.4 324.8L705.5 316.9L705.8 308.9L706.0 301.0L706.3 293.0L706.6 285.0L707.0 277.1L707.5 269.1L707.9 261.2L708.4 253.3L709.0 245.5L709.6 237.7L710.2 230.0L710.9 222.3L711.6 214.7L712.3 207.3L713.1 199.9L713.9 192.7L714.8 185.6L715.6 178.7L716.5 172.0L717.4 165.4L718.4 159.1L719.5 153.0L720.6 147.4L721.7 142.3L722.7 137.9L723.6 134.4L724.4 131.8M746.8 645.2L746.8 642.6L746.8 639.1L746.8 634.7L746.8 629.6L746.8 624.0L746.8 617.9L746.8 611.6L746.8 605.0L746.8 598.3L746.8 591.4L746.8 584.3L746.8 577.1L746.8 569.7L746.8 562.3L746.8 554.7L746.8 547.0L746.8 539.3L746.8 531.5L746.8 523.7L746.8 515.8L746.8 507.9L746.8 499.9L746.8 492.0L746.8 484.0L746.8 476.0L746.8 468.1L746.8 460.1L746.8 452.2L746.8 444.2L746.8 436.2L746.8 428.3L746.8 420.3L746.8 412.4L746.8 404.4L746.8 396.5L746.8 388.5L746.8 380.5L746.8 372.6L746.8 364.6L746.8 356.7L746.8 348.7L746.8 340.8L746.8 332.8L746.8 324.8L746.8 316.9L746.8 308.9L746.8 301.0L746.8 293.0L746.8 285.0L746.8 277.1L746.8 269.1L746.8 261.2L746.8 253.3L746.8 245.5L746.8 237.7L746.8 230.0L746.8 222.3L746.8 214.7L746.8 207.3L746.8 199.9L746.8 192.7L746.8 185.6L746.8 178.7L746.8 172.0L746.8 165.4L746.8 159.1L746.8 153.0L746.8 147.4L746.8 142.3L746.8 137.9L746.8 134.4L746.8 131.8M769.2 645.2L770.0 642.6L770.9 639.1L771.9 634.7L773.0 629.6L774.1 624.0L775.2 617.9L776.2 611.6L777.1 605.0L778.0 598.3L778.8 591.4L779.7 584.3L780.5 577.1L781.3 569.7L782.0 562.3L782.7 554.7L783.4 547.0L784.0 539.3L784.6 531.5L785.2 523.7L785.7 515.8L786.1 507.9L786.6 499.9L787.0 492.0L787.3 484.0L787.6 476.0L787.8 468.1L788.1 460.1L788.2 452.2L788.4 444.2L788.6 436.2L788.7 428.3L788.8 420.3L788.9 412.4L788.9 404.4L789.0 396.5L789.0 388.5L789.0 380.5L788.9 372.6L788.9 364.6L788.8 356.7L788.7 348.7L788.6 340.8L788.4 332.8L788.2 324.8L788.1 316.9L787.8 308.9L787.6 301.0L787.3 293.0L787.0 285.0L786.6 277.1L786.1 269.1L785.7 261.2L785.2 253.3L784.6 245.5L784.0 237.7L783.4 230.0L782.7 222.3L782.0 214.7L781.3 207.3L780.5 199.9L779.7 192.7L778.8 185.6L778.0 178.7L777.1 172.0L776.2 165.4L775.2 159.1L774.1 153.0L773.0 147.4L771.9 142.3L770.9 137.9L770.0 134.4L769.2 131.8M791.7 645.2L793.3 642.6L795.1 639.1L797.1 634.7L799.2 629.6L801.4 624.0L803.6 617.9L805.6 611.6L807.4 605.0L809.2 598.3L810.9 591.4L812.6 584.3L814.2 577.1L815.7 569.7L817.2 562.3L818.7 554.7L820.0 547.0L821.3 539.3L822.4 531.5L823.5 523.7L824.6 515.8L825.5 507.9L826.3 499.9L827.1 492.0L827.8 484.0L828.4 476.0L828.9 468.1L829.3 460.1L829.7 452.2L830.0 444.2L830.3 436.2L830.6 428.3L830.8 420.3L830.9 412.4L831.0 404.4L831.1 396.5L831.2 388.5L831.1 380.5L831.0 372.6L830.9 364.6L830.8 356.7L830.6 348.7L830.3 340.8L830.0 332.8L829.7 324.8L829.3 316.9L828.9 308.9L828.4 301.0L827.8 293.0L827.1 285.0L826.3 277.1L825.5 269.1L824.6 261.2L823.5 253.3L822.4 245.5L821.3 237.7L820.0 230.0L818.7 222.3L817.2 214.7L815.7 207.3L814.2 199.9L812.6 192.7L810.9 185.6L809.2 178.7L807.4 172.0L805.6 165.4L803.6 159.1L801.4 153.0L799.2 147.4L797.1 142.3L795.1 137.9L793.3 134.4L791.7 131.8M814.1 645.2L816.5 642.6L819.2 639.1L822.2 634.7L825.4 629.6L828.8 624.0L832.0 617.9L835.0 611.6L837.7 605.0L840.4 598.3L842.9 591.4L845.4 584.3L847.9 577.1L850.2 569.7L852.5 562.3L854.6 554.7L856.6 547.0L858.5 539.3L860.2 531.5L861.9 523.7L863.4 515.8L864.8 507.9L866.1 499.9L867.3 492.0L868.3 484.0L869.2 476.0L869.9 468.1L870.6 460.1L871.1 452.2L871.6 444.2L872.1 436.2L872.5 428.3L872.8 420.3L873.0 412.4L873.2 404.4L873.3 396.5L873.3 388.5L873.3 380.5L873.2 372.6L873.0 364.6L872.8 356.7L872.5 348.7L872.1 340.8L871.6 332.8L871.1 324.8L870.6 316.9L869.9 308.9L869.2 301.0L868.3 293.0L867.3 285.0L866.1 277.1L864.8 269.1L863.4 261.2L861.9 253.3L860.2 245.5L858.5 237.7L856.6 230.0L854.6 222.3L852.5 214.7L850.2 207.3L847.9 199.9L845.4 192.7L842.9 185.6L840.4 178.7L837.7 172.0L835.0 165.4L832.0 159.1L828.8 153.0L825.4 147.4L822.2 142.3L819.2 137.9L816.5 134.4L814.1 131.8M836.6 645.2L839.7 642.6L843.3 639.1L847.3 634.7L851.6 629.6L856.1 624.0L860.4 617.9L864.4 611.6L868.1 605.0L871.6 598.3L875.0 591.4L878.3 584.3L881.6 577.1L884.7 569.7L887.7 562.3L890.6 554.7L893.2 547.0L895.7 539.3L898.0 531.5L900.2 523.7L902.3 515.8L904.2 507.9L905.9 499.9L907.4 492.0L908.8 484.0L910.0 476.0L911.0 468.1L911.8 460.1L912.5 452.2L913.2 444.2L913.8 436.2L914.4 428.3L914.8 420.3L915.1 412.4L915.3 404.4L915.5 396.5L915.5 388.5L915.5 380.5L915.3 372.6L915.1 364.6L914.8 356.7L914.4 348.7L913.8 340.8L913.2 332.8L912.5 324.8L911.8 316.9L911.0 308.9L910.0 301.0L908.8 293.0L907.4 285.0L905.9 277.1L904.2 269.1L902.3 261.2L900.2 253.3L898.0 245.5L895.7 237.7L893.2 230.0L890.6 222.3L887.7 214.7L884.7 207.3L881.6 199.9L878.3 192.7L875.0 185.6L871.6 178.7L868.1 172.0L864.4 165.4L860.4 159.1L856.1 153.0L851.6 147.4L847.3 142.3L843.3 137.9L839.7 134.4L836.6 131.8M859.0 645.2L863.0 642.6L867.5 639.1L872.5 634.7L877.8 629.6L883.4 624.0L888.8 617.9L893.8 611.6L898.4 605.0L902.8 598.3L907.0 591.4L911.2 584.3L915.2 577.1L919.2 569.7L922.9 562.3L926.5 554.7L929.9 547.0L932.9 539.3L935.8 531.5L938.6 523.7L941.2 515.8L943.5 507.9L945.6 499.9L947.6 492.0L949.3 484.0L950.8 476.0L952.0 468.1L953.1 460.1L954.0 452.2L954.8 444.2L955.6 436.2L956.2 428.3L956.7 420.3L957.1 412.4L957.4 404.4L957.6 396.5L957.7 388.5L957.6 380.5L957.4 372.6L957.1 364.6L956.7 356.7L956.2 348.7L955.6 340.8L954.8 332.8L954.0 324.8L953.1 316.9L952.0 308.9L950.8 301.0L949.3 293.0L947.6 285.0L945.6 277.1L943.5 269.1L941.2 261.2L938.6 253.3L935.8 245.5L932.9 237.7L929.9 230.0L926.5 222.3L922.9 214.7L919.2 207.3L915.2 199.9L911.2 192.7L907.0 185.6L902.8 178.7L898.4 172.0L893.8 165.4L888.8 159.1L883.4 153.0L877.8 147.4L872.5 142.3L867.5 137.9L863.0 134.4L859.0 131.8M881.5 645.2L886.2 642.6L891.6 639.1L897.6 634.7L904.1 629.6L910.7 624.0L917.2 617.9L923.1 611.6L928.7 605.0L934.0 598.3L939.1 591.4L944.1 584.3L948.9 577.1L953.6 569.7L958.1 562.3L962.4 554.7L966.5 547.0L970.2 539.3L973.6 531.5L977.0 523.7L980.1 515.8L982.9 507.9L985.4 499.9L987.7 492.0L989.8 484.0L991.6 476.0L993.1 468.1L994.3 460.1L995.4 452.2L996.4 444.2L997.4 436.2L998.1 428.3L998.7 420.3L999.2 412.4L999.5 404.4L999.8 396.5L999.9 388.5L999.8 380.5L999.5 372.6L999.2 364.6L998.7 356.7L998.1 348.7L997.4 340.8L996.4 332.8L995.4 324.8L994.3 316.9L993.1 308.9L991.6 301.0L989.8 293.0L987.7 285.0L985.4 277.1L982.9 269.1L980.1 261.2L977.0 253.3L973.6 245.5L970.2 237.7L966.5 230.0L962.4 222.3L958.1 214.7L953.6 207.3L948.9 199.9L944.1 192.7L939.1 185.6L934.0 178.7L928.7 172.0L923.1 165.4L917.2 159.1L910.7 153.0L904.1 147.4L897.6 142.3L891.6 137.9L886.2 134.4L881.5 131.8M903.9 645.2L909.4 642.6L915.8 639.1L922.8 634.7L930.3 629.6L938.0 624.0L945.6 617.9L952.5 611.6L959.0 605.0L965.2 598.3L971.1 591.4L976.9 584.3L982.6 577.1L988.1 569.7L993.4 562.3L998.4 554.7L1003.1 547.0L1007.4 539.3L1011.4 531.5L1015.3 523.7L1018.9 515.8L1022.2 507.9L1025.2 499.9L1027.9 492.0L1030.3 484.0L1032.4 476.0L1034.1 468.1L1035.6 460.1L1036.8 452.2L1038.0 444.2L1039.1 436.2L1040.0 428.3L1040.7 420.3L1041.3 412.4L1041.7 404.4L1041.9 396.5L1042.1 388.5L1041.9 380.5L1041.7 372.6L1041.3 364.6L1040.7 356.7L1040.0 348.7L1039.1 340.8L1038.0 332.8L1036.8 324.8L1035.6 316.9L1034.1 308.9L1032.4 301.0L1030.3 293.0L1027.9 285.0L1025.2 277.1L1022.2 269.1L1018.9 261.2L1015.3 253.3L1011.4 245.5L1007.4 237.7L1003.1 230.0L998.4 222.3L993.4 214.7L988.1 207.3L982.6 199.9L976.9 192.7L971.1 185.6L965.2 178.7L959.0 172.0L952.5 165.4L945.6 159.1L938.0 153.0L930.3 147.4L922.8 142.3L915.8 137.9L909.4 134.4L903.9 131.8M926.4 645.2L932.7 642.6L939.9 639.1L947.9 634.7L956.5 629.6L965.3 624.0L974.0 617.9L981.9 611.6L989.3 605.0L996.4 598.3L1003.2 591.4L1009.8 584.3L1016.3 577.1L1022.6 569.7L1028.6 562.3L1034.3 554.7L1039.7 547.0L1044.6 539.3L1049.2 531.5L1053.7 523.7L1057.8 515.8L1061.5 507.9L1064.9 499.9L1068.0 492.0L1070.8 484.0L1073.2 476.0L1075.2 468.1L1076.8 460.1L1078.3 452.2L1079.6 444.2L1080.9 436.2L1081.9 428.3L1082.7 420.3L1083.3 412.4L1083.8 404.4L1084.1 396.5L1084.3 388.5L1084.1 380.5L1083.8 372.6L1083.3 364.6L1082.7 356.7L1081.9 348.7L1080.9 340.8L1079.6 332.8L1078.3 324.8L1076.8 316.9L1075.2 308.9L1073.2 301.0L1070.8 293.0L1068.0 285.0L1064.9 277.1L1061.5 269.1L1057.8 261.2L1053.7 253.3L1049.2 245.5L1044.6 237.7L1039.7 230.0L1034.3 222.3L1028.6 214.7L1022.6 207.3L1016.3 199.9L1009.8 192.7L1003.2 185.6L996.4 178.7L989.3 172.0L981.9 165.4L974.0 159.1L965.3 153.0L956.5 147.4L947.9 142.3L939.9 137.9L932.7 134.4L926.4 131.8M948.8 645.2L955.9 642.6L964.0 639.1L973.0 634.7L982.7 629.6L992.7 624.0L1002.4 617.9L1011.3 611.6L1019.6 605.0L1027.5 598.3L1035.2 591.4L1042.7 584.3L1050.0 577.1L1057.0 569.7L1063.8 562.3L1070.3 554.7L1076.3 547.0L1081.8 539.3L1087.0 531.5L1092.0 523.7L1096.7 515.8L1100.9 507.9L1104.7 499.9L1108.2 492.0L1111.3 484.0L1113.9 476.0L1116.2 468.1L1118.1 460.1L1119.7 452.2L1121.2 444.2L1122.7 436.2L1123.8 428.3L1124.7 420.3L1125.4 412.4L1125.9 404.4L1126.3 396.5L1126.4 388.5L1126.3 380.5L1125.9 372.6L1125.4 364.6L1124.7 356.7L1123.8 348.7L1122.7 340.8L1121.2 332.8L1119.7 324.8L1118.1 316.9L1116.2 308.9L1113.9 301.0L1111.3 293.0L1108.2 285.0L1104.7 277.1L1100.9 269.1L1096.7 261.2L1092.0 253.3L1087.0 245.5L1081.8 237.7L1076.3 230.0L1070.3 222.3L1063.8 214.7L1057.0 207.3L1050.0 199.9L1042.7 192.7L1035.2 185.6L1027.5 178.7L1019.6 172.0L1011.3 165.4L1002.4 159.1L992.7 153.0L982.7 147.4L973.0 142.3L964.0 137.9L955.9 134.4L948.8 131.8M971.3 645.2L979.1 642.6L988.2 639.1L998.2 634.7L1008.9 629.6L1020.0 624.0L1030.8 617.9L1040.7 611.6L1049.9 605.0L1058.7 598.3L1067.3 591.4L1075.6 584.3L1083.7 577.1L1091.5 569.7L1099.0 562.3L1106.2 554.7L1112.9 547.0L1119.1 539.3L1124.8 531.5L1130.4 523.7L1135.6 515.8L1140.2 507.9L1144.5 499.9L1148.3 492.0L1151.8 484.0L1154.7 476.0L1157.2 468.1L1159.3 460.1L1161.1 452.2L1162.9 444.2L1164.4 436.2L1165.7 428.3L1166.7 420.3L1167.5 412.4L1168.0 404.4L1168.4 396.5L1168.6 388.5L1168.4 380.5L1168.0 372.6L1167.5 364.6L1166.7 356.7L1165.7 348.7L1164.4 340.8L1162.9 332.8L1161.1 324.8L1159.3 316.9L1157.2 308.9L1154.7 301.0L1151.8 293.0L1148.3 285.0L1144.5 277.1L1140.2 269.1L1135.6 261.2L1130.4 253.3L1124.8 245.5L1119.1 237.7L1112.9 230.0L1106.2 222.3L1099.0 214.7L1091.5 207.3L1083.7 199.9L1075.6 192.7L1067.3 185.6L1058.7 178.7L1049.9 172.0L1040.7 165.4L1030.8 159.1L1020.0 153.0L1008.9 147.4L998.2 142.3L988.2 137.9L979.1 134.4L971.3 131.8M993.7 645.2L1002.4 642.6L1012.3 639.1L1023.3 634.7L1035.1 629.6L1047.3 624.0L1059.2 617.9L1070.1 611.6L1080.2 605.0L1089.9 598.3L1099.3 591.4L1108.5 584.3L1117.4 577.1L1126.0 569.7L1134.3 562.3L1142.1 554.7L1149.5 547.0L1156.3 539.3L1162.7 531.5L1168.7 523.7L1174.4 515.8L1179.6 507.9L1184.2 499.9L1188.5 492.0L1192.3 484.0L1195.5 476.0L1198.3 468.1L1200.6 460.1L1202.6 452.2L1204.5 444.2L1206.2 436.2L1207.6 428.3L1208.7 420.3L1209.5 412.4L1210.2 404.4L1210.6 396.5L1210.8 388.5L1210.6 380.5L1210.2 372.6L1209.5 364.6L1208.7 356.7L1207.6 348.7L1206.2 340.8L1204.5 332.8L1202.6 324.8L1200.6 316.9L1198.3 308.9L1195.5 301.0L1192.3 293.0L1188.5 285.0L1184.2 277.1L1179.6 269.1L1174.4 261.2L1168.7 253.3L1162.7 245.5L1156.3 237.7L1149.5 230.0L1142.1 222.3L1134.3 214.7L1126.0 207.3L1117.4 199.9L1108.5 192.7L1099.3 185.6L1089.9 178.7L1080.2 172.0L1070.1 165.4L1059.2 159.1L1047.3 153.0L1035.1 147.4L1023.3 142.3L1012.3 137.9L1002.4 134.4L993.7 131.8M1016.2 645.2L1025.6 642.6L1036.4 639.1L1048.4 634.7L1061.3 629.6L1074.6 624.0L1087.6 617.9L1099.5 611.6L1110.6 605.0L1121.1 598.3L1131.4 591.4L1141.3 584.3L1151.1 577.1L1160.4 569.7L1169.5 562.3L1178.1 554.7L1186.1 547.0L1193.5 539.3L1200.5 531.5L1207.1 523.7L1213.3 515.8L1218.9 507.9L1224.0 499.9L1228.6 492.0L1232.8 484.0L1236.3 476.0L1239.3 468.1L1241.8 460.1L1244.0 452.2L1246.1 444.2L1247.9 436.2L1249.5 428.3L1250.7 420.3L1251.6 412.4L1252.3 404.4L1252.8 396.5L1253.0 388.5L1252.8 380.5L1252.3 372.6L1251.6 364.6L1250.7 356.7L1249.5 348.7L1247.9 340.8L1246.1 332.8L1244.0 324.8L1241.8 316.9L1239.3 308.9L1236.3 301.0L1232.8 293.0L1228.6 285.0L1224.0 277.1L1218.9 269.1L1213.3 261.2L1207.1 253.3L1200.5 245.5L1193.5 237.7L1186.1 230.0L1178.1 222.3L1169.5 214.7L1160.4 207.3L1151.1 199.9L1141.3 192.7L1131.4 185.6L1121.1 178.7L1110.6 172.0L1099.5 165.4L1087.6 159.1L1074.6 153.0L1061.3 147.4L1048.4 142.3L1036.4 137.9L1025.6 134.4L1016.2 131.8M477.4 645.2L1016.2 645.2M406.0 617.9L1087.6 617.9M342.5 577.1L1151.1 577.1M293.1 531.5L1200.5 531.5M260.8 484.0L1232.8 484.0M245.7 436.2L1247.9 436.2M240.6 388.5L1253.0 388.5M245.7 340.8L1247.9 340.8M260.8 293.0L1232.8 293.0M293.1 245.5L1200.5 245.5M342.5 199.9L1151.1 199.9M406.0 159.1L1087.6 159.1M477.4 131.8L1016.2 131.8" fill="none" stroke="#eb3c50" stroke-opacity="0.55" stroke-width="1"/>
</g>
<g stroke="#2a2030" stroke-width="0.7"><circle cx="556.5" cy="244.2" r="3.25" fill="#e4524a"/><circle cx="546.1" cy="264.7" r="3.25" fill="#ee9690"/><circle cx="472.8" cy="326.7" r="3.25" fill="#da1a22"/><circle cx="494.7" cy="342.0" r="3.25" fill="#e4524a"/><circle cx="500.4" cy="333.6" r="3.25" fill="#ffffff"/><circle cx="498.0" cy="344.9" r="3.25" fill="#e4524a"/><circle cx="503.7" cy="343.6" r="3.25" fill="#ee9690"/><circle cx="505.7" cy="349.8" r="3.25" fill="#e4524a"/><circle cx="511.4" cy="357.0" r="3.25" fill="#e4524a"/><circle cx="524.1" cy="359.9" r="3.25" fill="#ee9690"/><circle cx="520.5" cy="315.0" r="3.25" fill="#da1a22"/><circle cx="535.2" cy="308.8" r="3.25" fill="#f6c8c6"/><circle cx="534.0" cy="331.2" r="3.25" fill="#ee9690"/><circle cx="546.6" cy="329.6" r="3.25" fill="#e4524a"/><circle cx="553.2" cy="329.6" r="3.25" fill="#da1a22"/><circle cx="563.7" cy="329.8" r="3.25" fill="#ee9690"/><circle cx="567.0" cy="330.1" r="3.25" fill="#ffffff"/><circle cx="567.9" cy="329.8" r="3.25" fill="#ffffff"/><circle cx="572.1" cy="330.6" r="3.25" fill="#ffffff"/><circle cx="572.8" cy="333.4" r="3.25" fill="#ffffff"/><circle cx="575.1" cy="334.1" r="3.25" fill="#ffffff"/><circle cx="574.1" cy="335.3" r="3.25" fill="#ffffff"/><circle cx="575.3" cy="337.6" r="3.25" fill="#ffffff"/><circle cx="575.9" cy="339.8" r="3.25" fill="#ffffff"/><circle cx="576.6" cy="342.0" r="3.25" fill="#f6c8c6"/><circle cx="576.7" cy="343.9" r="3.25" fill="#f6c8c6"/><circle cx="576.0" cy="346.6" r="3.25" fill="#ffffff"/><circle cx="580.5" cy="346.8" r="3.25" fill="#ffffff"/><circle cx="574.3" cy="350.1" r="3.25" fill="#ffffff"/><circle cx="574.7" cy="354.6" r="3.25" fill="#f6c8c6"/><circle cx="554.3" cy="350.0" r="3.25" fill="#ffffff"/><circle cx="521.7" cy="327.1" r="3.25" fill="#ffffff"/><circle cx="550.9" cy="320.1" r="3.25" fill="#ffffff"/><circle cx="573.2" cy="285.7" r="3.25" fill="#ffffff"/><circle cx="635.4" cy="187.9" r="3.25" fill="#ffffff"/><circle cx="699.6" cy="188.0" r="3.25" fill="#f6c8c6"/><circle cx="559.6" cy="355.1" r="3.25" fill="#e4524a"/><circle cx="538.7" cy="373.9" r="3.25" fill="#da1a22"/><circle cx="526.0" cy="389.1" r="3.25" fill="#da1a22"/><circle cx="531.5" cy="426.9" r="3.25" fill="#da1a22"/><circle cx="557.5" cy="441.0" r="3.25" fill="#da1a22"/><circle cx="558.4" cy="495.0" r="3.25" fill="#da1a22"/><circle cx="591.7" cy="498.6" r="3.25" fill="#da1a22"/><circle cx="597.7" cy="499.6" r="3.25" fill="#e4524a"/><circle cx="589.3" cy="469.0" r="3.25" fill="#ee9690"/><circle cx="613.6" cy="438.8" r="3.25" fill="#da1a22"/><circle cx="583.7" cy="366.9" r="3.25" fill="#f6c8c6"/><circle cx="591.8" cy="369.9" r="3.25" fill="#f6c8c6"/><circle cx="599.9" cy="372.9" r="3.25" fill="#f6c8c6"/><circle cx="607.3" cy="552.3" r="3.25" fill="#ffffff"/><circle cx="771.0" cy="200.2" r="3.25" fill="#ee9690"/><circle cx="787.6" cy="202.0" r="3.25" fill="#ee9690"/><circle cx="802.7" cy="199.3" r="3.25" fill="#ee9690"/><circle cx="776.1" cy="212.6" r="3.25" fill="#e4524a"/><circle cx="802.7" cy="201.7" r="3.25" fill="#ee9690"/><circle cx="802.5" cy="208.9" r="3.25" fill="#e4524a"/><circle cx="806.4" cy="215.6" r="3.25" fill="#ee9690"/><circle cx="812.1" cy="218.1" r="3.25" fill="#da1a22"/><circle cx="821.0" cy="228.6" r="3.25" fill="#da1a22"/><circle cx="818.6" cy="239.3" r="3.25" fill="#ee9690"/><circle cx="797.2" cy="223.1" r="3.25" fill="#da1a22"/><circle cx="778.9" cy="222.3" r="3.25" fill="#da1a22"/><circle cx="781.9" cy="229.7" r="3.25" fill="#e4524a"/><circle cx="789.1" cy="235.7" r="3.25" fill="#ee9690"/><circle cx="787.2" cy="235.5" r="3.25" fill="#da1a22"/><circle cx="794.1" cy="237.7" r="3.25" fill="#da1a22"/><circle cx="812.8" cy="247.4" r="3.25" fill="#da1a22"/><circle cx="806.3" cy="252.7" r="3.25" fill="#e4524a"/><circle cx="798.4" cy="246.1" r="3.25" fill="#e4524a"/><circle cx="786.9" cy="243.0" r="3.25" fill="#e4524a"/><circle cx="783.1" cy="242.2" r="3.25" fill="#ee9690"/><circle cx="793.5" cy="249.1" r="3.25" fill="#ee9690"/><circle cx="801.8" cy="254.9" r="3.25" fill="#ee9690"/><circle cx="797.8" cy="257.1" r="3.25" fill="#f6c8c6"/><circle cx="808.8" cy="267.6" r="3.25" fill="#e4524a"/><circle cx="832.0" cy="261.5" r="3.25" fill="#da1a22"/><circle cx="835.2" cy="276.6" r="3.25" fill="#f6c8c6"/><circle cx="778.9" cy="255.2" r="3.25" fill="#da1a22"/><circle cx="778.7" cy="255.2" r="3.25" fill="#ffffff"/><circle cx="778.4" cy="248.8" r="3.25" fill="#ffffff"/><circle cx="785.1" cy="274.2" r="3.25" fill="#ffffff"/><circle cx="765.4" cy="239.4" r="3.25" fill="#f6c8c6"/><circle cx="770.4" cy="238.8" r="3.25" fill="#ffffff"/><circle cx="752.6" cy="233.5" r="3.25" fill="#da1a22"/><circle cx="761.9" cy="231.2" r="3.25" fill="#f6c8c6"/><circle cx="757.4" cy="227.3" r="3.25" fill="#e4524a"/><circle cx="758.6" cy="222.8" r="3.25" fill="#ee9690"/><circle cx="746.6" cy="225.4" r="3.25" fill="#da1a22"/><circle cx="731.9" cy="219.7" r="3.25" fill="#ee9690"/><circle cx="737.2" cy="260.0" r="3.25" fill="#da1a22"/><circle cx="722.9" cy="265.3" r="3.25" fill="#e4524a"/><circle cx="750.6" cy="253.3" r="3.25" fill="#f6c8c6"/><circle cx="765.6" cy="249.4" r="3.25" fill="#ffffff"/><circle cx="741.6" cy="232.4" r="3.25" fill="#ffffff"/><circle cx="834.5" cy="212.5" r="3.25" fill="#da1a22"/><circle cx="861.9" cy="255.9" r="3.25" fill="#e4524a"/><circle cx="862.0" cy="260.6" r="3.25" fill="#e4524a"/><circle cx="875.7" cy="260.0" r="3.25" fill="#e4524a"/><circle cx="728.6" cy="280.3" r="3.25" fill="#ee9690"/><circle cx="709.7" cy="296.2" r="3.25" fill="#ffffff"/><circle cx="754.8" cy="271.5" r="3.25" fill="#e4524a"/><circle cx="773.6" cy="271.4" r="3.25" fill="#ee9690"/><circle cx="782.1" cy="283.8" r="3.25" fill="#ee9690"/><circle cx="831.2" cy="292.8" r="3.25" fill="#da1a22"/><circle cx="837.3" cy="338.8" r="3.25" fill="#ee9690"/><circle cx="702.6" cy="330.9" r="3.25" fill="#ee9690"/><circle cx="698.2" cy="341.7" r="3.25" fill="#da1a22"/><circle cx="700.5" cy="345.7" r="3.25" fill="#f6c8c6"/><circle cx="703.2" cy="350.8" r="3.25" fill="#f6c8c6"/><circle cx="708.4" cy="358.3" r="3.25" fill="#ee9690"/><circle cx="709.7" cy="361.4" r="3.25" fill="#ee9690"/><circle cx="716.5" cy="368.4" r="3.25" fill="#ee9690"/><circle cx="724.5" cy="348.2" r="3.25" fill="#ee9690"/><circle cx="742.6" cy="349.2" r="3.25" fill="#ee9690"/><circle cx="752.7" cy="345.5" r="3.25" fill="#ee9690"/><circle cx="735.6" cy="371.5" r="3.25" fill="#da1a22"/><circle cx="746.2" cy="370.8" r="3.25" fill="#e4524a"/><circle cx="750.2" cy="368.9" r="3.25" fill="#ee9690"/><circle cx="754.1" cy="367.8" r="3.25" fill="#f6c8c6"/><circle cx="753.5" cy="368.3" r="3.25" fill="#ee9690"/><circle cx="756.3" cy="368.0" r="3.25" fill="#f6c8c6"/><circle cx="788.8" cy="350.0" r="3.25" fill="#ee9690"/><circle cx="779.1" cy="376.2" r="3.25" fill="#ee9690"/><circle cx="771.5" cy="376.6" r="3.25" fill="#f6c8c6"/><circle cx="773.4" cy="387.2" r="3.25" fill="#ee9690"/><circle cx="765.6" cy="387.4" r="3.25" fill="#f6c8c6"/><circle cx="789.8" cy="402.0" r="3.25" fill="#ee9690"/><circle cx="789.8" cy="402.3" r="3.25" fill="#da1a22"/><circle cx="798.9" cy="374.7" r="3.25" fill="#ee9690"/><circle cx="783.9" cy="416.5" r="3.25" fill="#e4524a"/><circle cx="855.4" cy="359.9" r="3.25" fill="#e4524a"/><circle cx="855.2" cy="339.6" r="3.25" fill="#ffffff"/><circle cx="867.4" cy="351.6" r="3.25" fill="#ee9690"/><circle cx="874.3" cy="382.0" r="3.25" fill="#ee9690"/><circle cx="850.3" cy="392.6" r="3.25" fill="#e4524a"/><circle cx="838.5" cy="387.5" r="3.25" fill="#ee9690"/><circle cx="831.3" cy="394.7" r="3.25" fill="#f6c8c6"/><circle cx="829.3" cy="399.3" r="3.25" fill="#f6c8c6"/><circle cx="857.1" cy="410.1" r="3.25" fill="#e4524a"/><circle cx="825.5" cy="437.5" r="3.25" fill="#e4524a"/><circle cx="841.0" cy="433.1" r="3.25" fill="#f6c8c6"/><circle cx="832.9" cy="445.2" r="3.25" fill="#e4524a"/><circle cx="835.8" cy="471.1" r="3.25" fill="#e4524a"/><circle cx="831.8" cy="472.2" r="3.25" fill="#f6c8c6"/><circle cx="821.2" cy="481.8" r="3.25" fill="#f6c8c6"/><circle cx="823.8" cy="470.5" r="3.25" fill="#e4524a"/><circle cx="817.7" cy="467.0" r="3.25" fill="#f6c8c6"/><circle cx="793.8" cy="460.3" r="3.25" fill="#f6c8c6"/><circle cx="878.2" cy="448.7" r="3.25" fill="#e4524a"/><circle cx="867.7" cy="425.7" r="3.25" fill="#ffffff"/><circle cx="902.5" cy="403.1" r="3.25" fill="#ffffff"/><circle cx="905.6" cy="452.6" r="3.25" fill="#f6c8c6"/><circle cx="899.7" cy="455.0" r="3.25" fill="#f6c8c6"/><circle cx="681.4" cy="341.1" r="3.25" fill="#f6c8c6"/><circle cx="707.0" cy="413.3" r="3.25" fill="#ffffff"/><circle cx="843.6" cy="281.9" r="3.25" fill="#e4524a"/><circle cx="841.3" cy="280.6" r="3.25" fill="#e4524a"/><circle cx="841.3" cy="287.3" r="3.25" fill="#ee9690"/><circle cx="843.2" cy="286.8" r="3.25" fill="#e4524a"/><circle cx="865.3" cy="282.5" r="3.25" fill="#da1a22"/><circle cx="882.7" cy="274.9" r="3.25" fill="#da1a22"/><circle cx="876.6" cy="295.0" r="3.25" fill="#f6c8c6"/><circle cx="874.7" cy="310.0" r="3.25" fill="#e4524a"/><circle cx="884.9" cy="305.1" r="3.25" fill="#f6c8c6"/><circle cx="887.6" cy="308.0" r="3.25" fill="#ee9690"/><circle cx="895.8" cy="310.7" r="3.25" fill="#e4524a"/><circle cx="907.5" cy="313.4" r="3.25" fill="#f6c8c6"/><circle cx="869.8" cy="339.6" r="3.25" fill="#ee9690"/><circle cx="899.7" cy="267.7" r="3.25" fill="#ee9690"/><circle cx="925.1" cy="257.1" r="3.25" fill="#da1a22"/><circle cx="926.4" cy="265.8" r="3.25" fill="#ee9690"/><circle cx="937.2" cy="252.2" r="3.25" fill="#f6c8c6"/><circle cx="942.6" cy="251.0" r="3.25" fill="#e4524a"/><circle cx="930.6" cy="278.7" r="3.25" fill="#e4524a"/><circle cx="941.5" cy="281.2" r="3.25" fill="#f6c8c6"/><circle cx="956.1" cy="297.5" r="3.25" fill="#da1a22"/><circle cx="978.7" cy="300.3" r="3.25" fill="#ee9690"/><circle cx="990.6" cy="301.1" r="3.25" fill="#ffffff"/><circle cx="994.8" cy="313.1" r="3.25" fill="#da1a22"/><circle cx="970.8" cy="366.5" r="3.25" fill="#ee9690"/><circle cx="953.1" cy="370.4" r="3.25" fill="#f6c8c6"/><circle cx="1011.4" cy="236.5" r="3.25" fill="#ee9690"/><circle cx="1048.6" cy="261.5" r="3.25" fill="#da1a22"/><circle cx="1074.3" cy="264.4" r="3.25" fill="#da1a22"/><circle cx="1079.8" cy="269.0" r="3.25" fill="#da1a22"/><circle cx="1116.1" cy="274.9" r="3.25" fill="#da1a22"/><circle cx="1079.4" cy="308.8" r="3.25" fill="#da1a22"/><circle cx="1038.7" cy="321.7" r="3.25" fill="#da1a22"/><circle cx="1031.2" cy="331.4" r="3.25" fill="#ee9690"/><circle cx="1013.8" cy="335.0" r="3.25" fill="#da1a22"/><circle cx="1027.1" cy="344.7" r="3.25" fill="#da1a22"/><circle cx="1040.0" cy="351.7" r="3.25" fill="#e4524a"/><circle cx="1032.6" cy="378.5" r="3.25" fill="#e4524a"/><circle cx="1038.8" cy="384.4" r="3.25" fill="#da1a22"/><circle cx="1069.6" cy="372.9" r="3.25" fill="#f6c8c6"/><circle cx="1083.9" cy="342.0" r="3.25" fill="#da1a22"/><circle cx="1046.7" cy="408.2" r="3.25" fill="#da1a22"/><circle cx="1141.6" cy="500.9" r="3.25" fill="#f6c8c6"/><circle cx="1196.8" cy="519.9" r="3.25" fill="#f6c8c6"/><circle cx="1159.0" cy="418.6" r="3.25" fill="#f6c8c6"/><circle cx="1194.7" cy="418.6" r="3.25" fill="#f6c8c6"/><circle cx="1213.4" cy="445.0" r="3.25" fill="#ffffff"/><circle cx="1204.7" cy="459.5" r="3.25" fill="#f6c8c6"/><circle cx="1241.2" cy="446.3" r="3.25" fill="#f6c8c6"/><circle cx="1241.6" cy="428.3" r="3.25" fill="#ffffff"/><circle cx="1227.6" cy="365.9" r="3.25" fill="#f6c8c6"/><circle cx="1204.5" cy="371.6" r="3.25" fill="#ffffff"/><circle cx="1216.1" cy="390.3" r="3.25" fill="#ffffff"/><circle cx="1124.0" cy="365.1" r="3.25" fill="#ffffff"/><circle cx="1150.6" cy="345.5" r="3.25" fill="#f6c8c6"/><circle cx="1152.5" cy="340.1" r="3.25" fill="#ffffff"/><circle cx="267.9" cy="432.6" r="3.25" fill="#f6c8c6"/><circle cx="273.7" cy="434.3" r="3.25" fill="#ffffff"/><circle cx="263.8" cy="455.8" r="3.25" fill="#ffffff"/><circle cx="276.8" cy="449.1" r="3.25" fill="#ffffff"/><circle cx="282.7" cy="426.4" r="3.25" fill="#f6c8c6"/><circle cx="332.0" cy="444.4" r="3.25" fill="#da1a22"/><circle cx="390.8" cy="468.2" r="3.25" fill="#ffffff"/><circle cx="1201.6" cy="481.0" r="3.25" fill="#ffffff"/><circle cx="304.3" cy="382.5" r="3.25" fill="#ffffff"/><circle cx="1017.4" cy="428.0" r="3.25" fill="#ffffff"/><circle cx="1042.6" cy="421.9" r="3.25" fill="#ffffff"/><circle cx="680.0" cy="268.5" r="3.25" fill="#ffffff"/></g>
</svg><div style="position:absolute;left:4px;top:667px;width:154px;height:16px;background:#fff;border:1px solid #c2c2c2;box-sizing:border-box;border-radius:2px;"></div><svg style="position:absolute;left:9.0px;top:670.0px" width="10" height="10" viewBox="-5.0 -5.0 10 10"><circle cx="-.8" cy="-.8" r="2.6" fill="none" stroke="#888" stroke-width="1"/><path d="M1,1L3.5,3.5" stroke="#888" stroke-width="1"/></svg><span style="left:23.2px;top:669.98px;font-size:9px;color:#8a8a8a;font-weight:normal;white-space:nowrap;line-height:11px;letter-spacing:-0.164px;">Type to locate (Ctrl+K)</span><span style="left:656px;top:670.15px;font-size:8.8px;color:#222;font-weight:normal;white-space:nowrap;line-height:10.8px;letter-spacing:-0.305px;">Coordinate</span><div style="position:absolute;left:699px;top:668px;width:90px;height:15px;background:#fff;border:1px solid #bdbdbd;box-sizing:border-box;"></div><span style="left:705px;top:670.15px;font-size:8.8px;color:#222;font-weight:normal;white-space:nowrap;line-height:10.8px;letter-spacing:-0.311px;">-16894739,7882751</span><svg style="position:absolute;left:789.0px;top:668.0px" width="14" height="14" viewBox="-7.0 -7.0 14 14"><circle r="4" fill="none" stroke="#333" stroke-width="1.2"/><path d="M-5,-5L5,5M-3,-6l5,2M-2,6l5,-2" stroke="#333" stroke-width="1"/></svg><span style="left:809px;top:670.15px;font-size:8.8px;color:#222;font-weight:normal;white-space:nowrap;line-height:10.8px;letter-spacing:-0.402px;">Scale</span><div style="position:absolute;left:832px;top:668px;width:60px;height:15px;background:#fff;border:1px solid #bdbdbd;box-sizing:border-box;"></div><span style="left:834.5px;top:670.15px;font-size:8.8px;color:#222;font-weight:normal;white-space:nowrap;line-height:10.8px;letter-spacing:-0.338px;">105649192</span><svg style="position:absolute;left:879.0px;top:670.5px" width="10" height="10" viewBox="-5.0 -5.0 10 10"><path d="M-3,-1.5 L3,-1.5 L0,2 Z" fill="#333"/></svg><svg style="position:absolute;left:900.0px;top:668.5px" width="14" height="14" viewBox="-7.0 -7.0 14 14"><rect x="-4" y="-1" width="8" height="6" rx="1" fill="#6a6a6a"/><path d="M-2.5,-1 v-2 a2.5,2.5 0 0 1 5,0 v2" fill="none" stroke="#6a6a6a" stroke-width="1.3"/></svg><span style="left:918.5px;top:670.15px;font-size:8.8px;color:#222;font-weight:normal;white-space:nowrap;line-height:10.8px;letter-spacing:-0.077px;">Magnifier</span><div style="position:absolute;left:956px;top:668px;width:60px;height:15px;background:#fff;border:1px solid #bdbdbd;box-sizing:border-box;"></div><span style="left:959.5px;top:670.15px;font-size:8.8px;color:#222;font-weight:normal;white-space:nowrap;line-height:10.8px;letter-spacing:-0.127px;">100%</span><svg style="position:absolute;left:1005.0px;top:669.5px" width="12" height="12" viewBox="-6.0 -6.0 12 12"><path d="M-2.5,-1.5L0,-4.5L2.5,-1.5z M-2.5,1.5L0,4.5L2.5,1.5z" fill="#333"/></svg><span style="left:1023.7px;top:670.15px;font-size:8.8px;color:#222;font-weight:normal;white-space:nowrap;line-height:10.8px;letter-spacing:-0.272px;">Rotation</span><div style="position:absolute;left:1060px;top:668px;width:58px;height:15px;background:#fff;border:1px solid #bdbdbd;box-sizing:border-box;"></div><span style="left:1064px;top:670.15px;font-size:8.8px;color:#222;font-weight:normal;white-space:nowrap;line-height:10.8px;letter-spacing:0.161px;">0.0 °</span><svg style="position:absolute;left:1107.5px;top:669.5px" width="12" height="12" viewBox="-6.0 -6.0 12 12"><path d="M-2.5,-1.5L0,-4.5L2.5,-1.5z M-2.5,1.5L0,4.5L2.5,1.5z" fill="#333"/></svg><svg style="position:absolute;left:1124.5px;top:670.0px" width="11" height="11" viewBox="0 0 11 11"><rect x=".5" y=".5" width="10" height="10" fill="#fff" stroke="#b4b4b4" stroke-width="1"/><path d="M2.6,5.6 L4.7,8 L8.5,2.6" fill="none" stroke="#111" stroke-width="1.45"/></svg><span style="left:1139.5px;top:670.15px;font-size:8.8px;color:#222;font-weight:normal;white-space:nowrap;line-height:10.8px;letter-spacing:-0.310px;">Render</span><svg style="position:absolute;left:1178.0px;top:669.5px" width="12" height="12" viewBox="-6.0 -6.0 12 12"><circle r="4.8" fill="#f2f2f2" stroke="#666" stroke-width=".9"/><path d="M-4.8,0h9.6M0,-4.8v9.6M-4,-2.6h8M-4,2.6h8" stroke="#666" stroke-width=".7"/><ellipse rx="2.3" ry="4.8" fill="none" stroke="#666" stroke-width=".7"/></svg><span style="left:1193.8px;top:670.15px;font-size:8.8px;color:#222;font-weight:normal;white-space:nowrap;line-height:10.8px;letter-spacing:-0.410px;">Unknown CRS</span><svg style="position:absolute;left:1258.5px;top:667.5px" width="16" height="16" viewBox="-8.0 -8.0 16 16"><path d="M-5.5,-4.5 h11 a1,1 0 0 1 1,1 v6 a1,1 0 0 1 -1,1 h-6 l-3,3 v-3 h-2 a1,1 0 0 1 -1,-1 v-6 a1,1 0 0 1 1,-1z" fill="#666"/><circle cx="-3" cy="-.5" r=".8" fill="#fff"/><circle cx="0" cy="-.5" r=".8" fill="#fff"/><circle cx="3" cy="-.5" r=".8" fill="#fff"/></svg><div style="position:absolute;left:0px;top:686px;width:1280px;height:34px;background:#dddddd;"></div><div style="position:absolute;left:0px;top:686px;width:42px;height:34px;background:#d2d2d2;"></div><div style="position:absolute;left:42px;top:688px;width:285px;height:31px;background:#fdfdfd;border:1px solid #c6c6c6;box-sizing:border-box;"></div><svg style="position:absolute;left:12.0px;top:694.0px" width="18" height="18" viewBox="-9.0 -9.0 18 18"><path d="M-6.5,-5.2 L-1,-6 V-.6 H-6.5z M0,-6.2 L6.5,-7.2 V-.6 H0z M-6.5,.5 H-1 V5.9 L-6.5,5.1z M0,.5 H6.5 V7.1 L0,6.1z" fill="#111"/></svg><svg style="position:absolute;left:49.0px;top:694.5px" width="16" height="16" viewBox="-8.0 -8.0 16 16"><circle cx="1.5" cy="-1.5" r="4.4" fill="none" stroke="#222" stroke-width="1.2"/><path d="M-1.7,1.7L-6,6" stroke="#222" stroke-width="1.3"/></svg><span style="left:74.5px;top:695.10px;font-size:12.4px;color:#2a2a2a;font-weight:normal;white-space:nowrap;line-height:14.4px;letter-spacing:-0.084px;">Type here to search</span><div style="position:absolute;left:906px;top:686px;width:41px;height:34px;background:#efefef;"></div><svg style="position:absolute;left:337.0px;top:693.0px" width="20" height="20" viewBox="-10.0 -10.0 20 20"><rect x="-4.5" y="-4" width="8" height="8" fill="none" stroke="#333" stroke-width="1.1"/><path d="M-6.5,-6h12M-6.5,6h12" stroke="#333" stroke-width="1.1"/><path d="M6.5,-5v10" stroke="#333" stroke-width="1.1"/><circle cx="6.5" cy="-1" r=".9" fill="#333"/></svg><svg style="position:absolute;left:379.0px;top:692.0px" width="22" height="22" viewBox="-11.0 -11.0 22 22"><path d="M-7.5,-3.5 h15 v12 h-15z" fill="#2a2a2a"/><path d="M-3.5,-3.5 v-2.5 a3.5,3.5 0 0 1 7,0 v2.5" fill="none" stroke="#2a2a2a" stroke-width="1.5"/><rect x="-3.4" y="-.8" width="3" height="3" fill="#e8483a"/><rect x=".4" y="-.8" width="3" height="3" fill="#7cba3a"/><rect x="-3.4" y="3" width="3" height="3" fill="#3a9ae8"/><rect x=".4" y="3" width="3" height="3" fill="#f4c02a"/></svg><svg style="position:absolute;left:420.0px;top:692.0px" width="22" height="22" viewBox="-11.0 -11.0 22 22"><defs><linearGradient id="eg" x1="0" y1="0" x2="1" y2="1"><stop offset="0" stop-color="#3fd6a4"/><stop offset=".45" stop-color="#2fa4d8"/><stop offset="1" stop-color="#1556b0"/></linearGradient></defs><circle r="9" fill="url(#eg)"/><path d="M-8.6,2.5 C-8,-3.5 -3,-6 1.5,-5.2 C5,-4.5 6.8,-2 6.4,0.4 C6,2.6 4,3.6 2,3.3 C.4,3 .2,1.6 1,.6 C-2.5,.4 -4,3.6 -2.2,6.4 C-1,8 .8,8.8 2.8,8.6 C-2.5,10.3 -8.2,7.5 -8.6,2.5z" fill="#1a62c0" opacity=".92"/><path d="M-5.8,3.5 C-5.5,-.8 -2,-3.2 1.5,-2.6 C-1,-1.8 -2.6,.6 -2.2,3.2 C-1.8,5.6 0,7.4 2.8,8 C-1.5,9 -5.6,7 -5.8,3.5z" fill="#0f489a" opacity=".8"/></svg><svg style="position:absolute;left:460.0px;top:692.0px" width="22" height="22" viewBox="-11.0 -11.0 22 22"><path d="M-8.5,-6.5 h6 l1.5,2 h9.5 v11.5 h-17z" fill="#f6c83a"/><path d="M-8.5,-2.5 h17 v9.5 h-17z" fill="#f9dd7a"/><rect x="-4" y="1" width="8" height="6" fill="#5f9fd8"/><rect x="-2" y="3.5" width="4" height="3.5" fill="#f9dd7a"/><rect x="-8.5" y="-6.5" width="6" height="1.5" fill="#e8a820"/></svg><svg style="position:absolute;left:502.0px;top:692.0px" width="22" height="22" viewBox="-11.0 -11.0 22 22"><path d="M-9,-2 L0,-8 L9,-2 V8 H-9z" fill="#1f78c8"/><path d="M-7,-1.5 h14 v5 l-7,3.5 l-7,-3.5z" fill="#eaf4fc"/><path d="M-9,-1 L0,4 L9,-1 V8 H-9z" fill="#3a9ee8"/><path d="M-9,8 L0,2.5 L9,8z" fill="#2a88d8"/></svg><svg style="position:absolute;left:543.0px;top:692.0px" width="22" height="22" viewBox="-11.0 -11.0 22 22"><rect x="-7" y="-7.5" width="11" height="14" fill="#f2f2ea" stroke="#aaa" stroke-width=".7"/><path d="M-7,1 c2,-4 7,-4 9,0 v6 h-9z" fill="#6fbf3a"/><circle cx="-3.5" cy="-1" r="1.5" fill="#3f7f1f"/><circle cx="0" cy="-1" r="1.5" fill="#3f7f1f"/><path d="M2,3 L8,-8" stroke="#d8a83a" stroke-width="1.8"/></svg><svg style="position:absolute;left:584.0px;top:692.0px" width="22" height="22" viewBox="-11.0 -11.0 22 22"><rect x="-6.5" y="-8.5" width="13" height="17" rx="1" fill="#6a7a8a"/><rect x="-5" y="-7" width="10" height="4" fill="#5fc0f0"/><g fill="#dfe6ec"><rect x="-5" y="-1.5" width="2.6" height="2.4"/><rect x="-1.3" y="-1.5" width="2.6" height="2.4"/><rect x="2.4" y="-1.5" width="2.6" height="2.4"/><rect x="-5" y="2" width="2.6" height="2.4"/><rect x="-1.3" y="2" width="2.6" height="2.4"/><rect x="-5" y="5.3" width="2.6" height="2.4"/><rect x="-1.3" y="5.3" width="2.6" height="2.4"/></g><rect x="2.4" y="2" width="2.6" height="5.7" fill="#5fc0f0"/></svg><svg style="position:absolute;left:626.0px;top:692.0px" width="22" height="22" viewBox="-11.0 -11.0 22 22"><circle r="9" fill="#1f5fb8"/><path d="M-8,-2 C-5,-8 3,-9 7,-5 C4,-6 1,-5 0,-3 C4,-3 7,0 6,4 C5,7 1,9 -3,8 C-7,7 -9,2 -8,-2z" fill="#2a7fd8"/><path d="M-7,1 l6,-4.5 l7,2.5 l-1,6 l-8,2.5z" fill="#f0f4fa"/><path d="M-7,1 l6,2 l7,-4" fill="none" stroke="#b8c8dc" stroke-width=".8"/></svg><svg style="position:absolute;left:667.0px;top:692.0px" width="22" height="22" viewBox="-11.0 -11.0 22 22"><rect x="-9" y="-6.5" width="18" height="13" fill="#0c0c0c" stroke="#3a3a3a" stroke-width=".8"/><path d="M-7,-4h6" stroke="#ccc" stroke-width=".9"/></svg><svg style="position:absolute;left:708.0px;top:692.0px" width="22" height="22" viewBox="-11.0 -11.0 22 22"><path d="M-7,-9 h8 l3,3 v13 h-11z" fill="#f4f4f4" stroke="#c4c4c4" stroke-width=".7"/><path d="M-1,-3 h4 a2,2 0 0 1 2,2 v2 h-5 a2,2 0 0 0 -2,2 v-4 a2,2 0 0 1 1,-2z" fill="#3f78b0"/><path d="M5,1 v3 a2,2 0 0 1 -2,2 h-4 v2 a2,2 0 0 0 2,2 h3 a2,2 0 0 0 2,-2 v-2 h2 v-3 a2,2 0 0 0 -2,-2z" fill="#f0c83a"/></svg><svg style="position:absolute;left:750.0px;top:692.0px" width="22" height="22" viewBox="-11.0 -11.0 22 22"><path d="M-6.5,-4.5 A8,8 0 0 1 6.5,-4.5" fill="none" stroke="#e8742a" stroke-width="1.8"/><path d="M-6.5,4.5 A8,8 0 0 0 6.5,4.5" fill="none" stroke="#e8742a" stroke-width="1.8"/><circle cx="-5" cy="-8" r="1.1" fill="#888"/><circle cx="6" cy="-7" r="1.3" fill="#888"/><circle cx="-5" cy="8" r="1.5" fill="#888"/></svg><svg style="position:absolute;left:791.0px;top:692.0px" width="22" height="22" viewBox="-11.0 -11.0 22 22"><circle r="8.5" fill="#f4f0f8" stroke="#e8922a" stroke-width="2.2"/><path d="M-8.5,0 A8.5,8.5 0 0 1 6,-6" fill="none" stroke="#6a3ab8" stroke-width="2.4"/><path d="M-3.5,-4 h7 v5 c0,3 -2,4.5 -3.5,5 c-1.5,-.5 -3.5,-2 -3.5,-5z" fill="#5a2aa8"/><circle cx="0" cy="-.5" r="1.2" fill="#fff"/></svg><svg style="position:absolute;left:832.0px;top:692.0px" width="22" height="22" viewBox="-11.0 -11.0 22 22"><circle r="9" fill="#f8a020"/><path d="M-9,0 A9,9 0 0 0 9,0 C9,5 5,9 0,9 C-5,9 -9,5 -9,0z" fill="#e8402a"/><circle cx=".5" cy="0" r="5" fill="#7a3ad8"/><path d="M-4.5,-1 C-2,-4 3,-3 5,-1 C3,-2 0,-1 -1,1 C-2,3 0,5 3,4.5 C0,7 -5,4 -4.5,-1z" fill="#f8b830"/><path d="M-8,-5 c2,-3 4,-3 5,-5 c1,2 3,2 4,1 c3,1 6,3 7,7 c-2,-2 -4,-3 -6,-2 c-3,-2 -7,-2 -10,-1z" fill="#f8c838"/></svg><svg style="position:absolute;left:873.0px;top:691.0px" width="24" height="24" viewBox="-12.0 -12.0 24 24"><rect x="-7" y="-9" width="9" height="18" rx="1.5" fill="#2a8ad8"/><rect x="-7" y="-9" width="9" height="5" rx="1.5" fill="#5fc4f4"/><circle cx="5" cy="4.5" r="6.2" fill="#ececec" stroke="#333" stroke-width=".9"/><text x=".6" y="7.6" font-size="8" font-family="Liberation Sans" fill="#111">15</text></svg><svg style="position:absolute;left:916.0px;top:692.0px" width="22" height="22" viewBox="-11.0 -11.0 22 22"><circle cx="-1" cy="-1" r="6.8" fill="#fff" stroke="#6fa83a" stroke-width="3.2"/><circle cx="-1" cy="-1" r="2" fill="#e8b02a"/><path d="M-.5,0 L8,8.5 H4 L-2,2z" fill="#4f8a2a"/><path d="M1,-1 L8,6" stroke="#e8c84a" stroke-width="1"/></svg><div style="position:absolute;left:620px;top:718px;width:35px;height:2px;background:#2f6fb4;"></div><div style="position:absolute;left:827px;top:718px;width:34px;height:2px;background:#2f6fb4;"></div><div style="position:absolute;left:906.5px;top:718px;width:40.5px;height:2px;background:#2f6fb4;"></div><svg style="position:absolute;left:1032.0px;top:696.5px" width="14" height="14" viewBox="-7.0 -7.0 14 14"><path d="M-5,2.5L0,-2.5L5,2.5" fill="none" stroke="#222" stroke-width="1.2"/></svg><svg style="position:absolute;left:1052.0px;top:695.0px" width="16" height="16" viewBox="-8.0 -8.0 16 16"><rect x="-4" y="-5.5" width="7" height="11" rx="1.5" fill="none" stroke="#333" stroke-width="1"/><path d="M3,-2 l3.5,-1.5 v6 l-3.5,-1.5" fill="none" stroke="#333" stroke-width="1"/></svg><svg style="position:absolute;left:1072.0px;top:695.0px" width="16" height="16" viewBox="-8.0 -8.0 16 16"><rect x="-6" y="-3" width="12.5" height="6.5" fill="#222"/><rect x="-7.5" y="-1.2" width="1.5" height="3" fill="#222"/><path d="M-6,-5l2,2" stroke="#222" stroke-width="1.2"/></svg><svg style="position:absolute;left:1092.0px;top:696.0px" width="16" height="16" viewBox="-8.0 -8.0 16 16"><path d="M-6,4 A9,9 0 0 1 3,-5" fill="none" stroke="#444" stroke-width="1"/><path d="M-3,4 A6,6 0 0 1 3,-2" fill="none" stroke="#444" stroke-width="1"/><path d="M0,4 A3,3 0 0 1 3,1" fill="none" stroke="#444" stroke-width="1"/><circle cx="4" cy="4.5" r="1" fill="#333"/></svg><svg style="position:absolute;left:1111.0px;top:695.0px" width="16" height="16" viewBox="-8.0 -8.0 16 16"><path d="M-6,-2 h2.5 l3.5,-3 v10 l-3.5,-3 h-2.5z" fill="none" stroke="#444" stroke-width="1"/><path d="M2.5,-2.5 a3.5,3.5 0 0 1 0,5 M4.5,-4.5 a6,6 0 0 1 0,9" fill="none" stroke="#888" stroke-width=".9"/></svg><svg style="position:absolute;left:1131.0px;top:694.5px" width="16" height="16" viewBox="-8.0 -8.0 16 16"><path d="M-3.5,-6 l3.5,2.3 l-3.5,2.3 l-3.5,-2.3z M3.5,-6 l3.5,2.3 l-3.5,2.3 l-3.5,-2.3z M-3.5,-1.2 l3.5,2.3 l-3.5,2.3 l-3.5,-2.3z M3.5,-1.2 l3.5,2.3 l-3.5,2.3 l-3.5,-2.3z M0,4 l3.2,2 l-3.2,2 l-3.2,-2z" fill="#222" transform="scale(.92)"/></svg><span style="left:1158.5px;top:697.87px;font-size:9.6px;color:#222;font-weight:normal;white-space:nowrap;line-height:11.6px;letter-spacing:-0.658px;">ΕΛ</span><span style="left:1190px;top:688.47px;font-size:9.6px;color:#222;font-weight:normal;white-space:nowrap;line-height:11.6px;letter-spacing:-0.193px;">9:49 PM</span><span style="left:1184.8px;top:704.07px;font-size:9.6px;color:#222;font-weight:normal;white-space:nowrap;line-height:11.6px;letter-spacing:0.166px;">2/27/2021</span><svg style="position:absolute;left:1242.0px;top:692.0px" width="16" height="16" viewBox="-8.0 -8.0 16 16"><path d="M-6,-6 h12 v9 h-8 l-4,3z" fill="#1a1a1a"/><path d="M-4,-3.5h8M-4,-1.5h8M-4,.5h5" stroke="#ddd" stroke-width=".7"/></svg><svg style="position:absolute;left:1250.5px;top:699.5px" width="14" height="14" viewBox="-7.0 -7.0 14 14"><circle r="5.5" fill="#e4e4e4" stroke="#333" stroke-width=".8"/><text x="-4" y="2.8" font-size="7.5" font-family="Liberation Sans" fill="#111">13</text></svg></body></html>
